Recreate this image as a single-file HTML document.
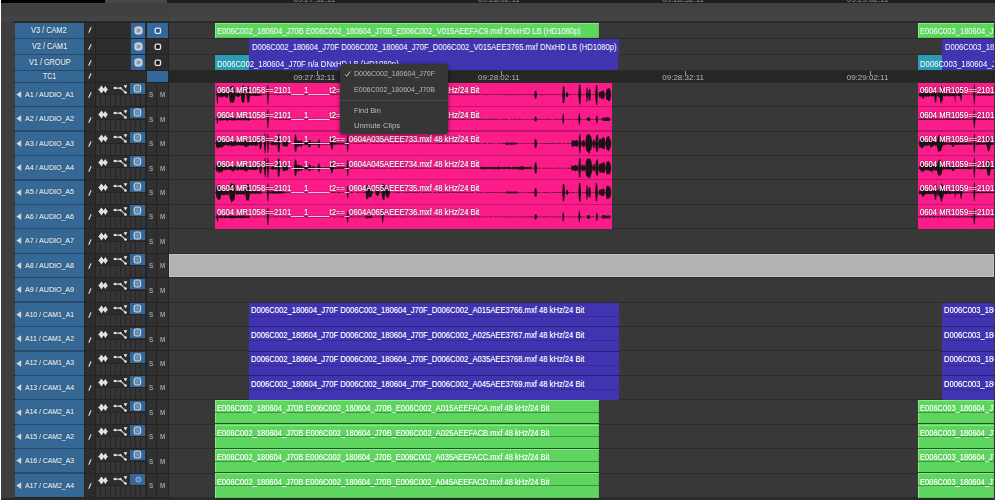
<!DOCTYPE html><html><head><meta charset="utf-8"><title>Timeline</title><style>
html,body{margin:0;padding:0;}
body{width:1000px;height:500px;overflow:hidden;background:#3e3e3e;position:relative;
 font-family:"Liberation Sans",sans-serif;color:#fff;}
.a{position:absolute;}
.blue{background:#34689a;}
.nm{position:absolute;left:14.5px;width:69.5px;background:#356894;color:#e2e8ee;font-size:8px;
 text-align:center;white-space:nowrap;overflow:hidden;text-shadow:0 0 .6px rgba(255,255,255,.5),0 0 1.5px #1b3a57;}
.nm span{position:absolute;left:0;right:0;}
.hl{position:absolute;background:#232323;}
.ctl{position:absolute;background:#2d2d2d;}
.sm{position:absolute;will-change:transform;font-size:6.3px;color:#9c9c9c;font-weight:bold;}
.clip{position:absolute;overflow:hidden;white-space:nowrap;color:#fff;box-sizing:border-box;}
.clip span{position:absolute;white-space:nowrap;line-height:10px;}
.g{background:#5dd55f;box-shadow:inset 1px 1px 0 #84f084,inset -1px -1px 0 #55c458;}
.p{background:#4034b0;}
.t{background:#2b9cb2;}
.k{background:#fb1c8a;}
.vt{font-size:8.6px;}
.at{font-size:8.2px;}
.tc{position:absolute;font-size:8px;color:#b8b8b8;white-space:nowrap;}
.menu{position:absolute;left:340px;top:64px;width:108px;height:70px;background:#363636;border-radius:3px;
 box-shadow:0 1px 4px rgba(0,0,0,.55);}
.menu div{position:absolute;left:14px;color:#bababa;white-space:nowrap;}
</style></head><body>
<div class="a" style="left:0;top:0;width:1000px;height:20.8px;background:linear-gradient(#404040 0%,#404040 60%,#454545 100%)"></div>
<div class="a" style="left:169px;top:0;width:825.5px;height:20.8px;background:linear-gradient(#414141 0%,#414141 60%,#464646 100%)"></div>
<div class="a" style="left:1px;top:0;width:104px;height:2.5px;background:#000"></div>
<div class="a" style="left:105px;top:0;width:62px;height:2.5px;background:#484848"></div>
<div class="a" style="left:167px;top:0;width:827.5px;height:2.5px;background:#1f1f1f"></div>
<div class="a" style="left:14px;top:20.8px;width:980.5px;height:1.4px;background:#2b2b2b"></div>
<div class="a" style="left:84px;top:22px;width:85px;height:476px;background:#2d2d2d"></div>
<div class="a" style="left:169px;top:22px;width:825.5px;height:478px;background:#383838"></div>
<div class="nm" style="top:22.80px;height:15.30px;line-height:16.50px"><span style="left:16.95px;right:auto;font-size:8.2px;font-weight:normal;transform-origin:0 0;transform:scaleX(0.8991)">V3 / CAM2</span></div>
<svg class="a" style="left:86px;top:26.45px" width="8" height="8" viewBox="0 0 8 8"><path d="M2.9 6.3 L4.9 1.7" stroke="#dedede" stroke-width="1.15" stroke-linecap="round" fill="none"/></svg>
<div class="a blue" style="left:130.5px;top:22.80px;width:14.5px;height:15.30px"></div>
<svg class="a" style="left:133.5px;top:26.20px" width="9" height="9" viewBox="0 0 9 9"><rect x="1" y="1" width="7" height="7" rx="1.6" fill="#b9c3cc" stroke="#dfe3e6" stroke-width="1"/><circle cx="4.5" cy="4.5" r="1.7" fill="#8d98a3" stroke="none"/></svg>
<div class="a blue" style="left:146.5px;top:22.80px;width:21.5px;height:15.30px"></div>
<svg class="a" style="left:153.6px;top:26.85px" width="8" height="8" viewBox="0 0 8 8"><rect x="1.2" y="1.1" width="5.3" height="5.2" rx="1.3" fill="#2b5a86" stroke="#e8e8e8" stroke-width="1.35"/></svg>
<div class="nm" style="top:39.10px;height:14.90px;line-height:16.10px"><span style="left:17.15px;right:auto;font-size:8.2px;font-weight:normal;transform-origin:0 0;transform:scaleX(0.8890)">V2 / CAM1</span></div>
<svg class="a" style="left:86px;top:42.55px" width="8" height="8" viewBox="0 0 8 8"><path d="M2.9 6.3 L4.9 1.7" stroke="#dedede" stroke-width="1.15" stroke-linecap="round" fill="none"/></svg>
<div class="a blue" style="left:130.5px;top:39.10px;width:14.5px;height:14.90px"></div>
<svg class="a" style="left:133.5px;top:42.30px" width="9" height="9" viewBox="0 0 9 9"><rect x="1" y="1" width="7" height="7" rx="1.6" fill="#b9c3cc" stroke="#dfe3e6" stroke-width="1"/><circle cx="4.5" cy="4.5" r="1.7" fill="#8d98a3" stroke="none"/></svg>
<svg class="a" style="left:153.6px;top:42.95px" width="8" height="8" viewBox="0 0 8 8"><rect x="1.2" y="1.1" width="5.3" height="5.2" rx="1.3" fill="#1c1c1c" stroke="#e8e8e8" stroke-width="1.35"/></svg>
<div class="nm" style="top:55.00px;height:15.10px;line-height:16.30px"><span style="left:14.00px;right:auto;font-size:8.2px;font-weight:normal;transform-origin:0 0;transform:scaleX(0.8853)">V1 / GROUP</span></div>
<svg class="a" style="left:86px;top:58.55px" width="8" height="8" viewBox="0 0 8 8"><path d="M2.9 6.3 L4.9 1.7" stroke="#dedede" stroke-width="1.15" stroke-linecap="round" fill="none"/></svg>
<div class="a blue" style="left:130.5px;top:55.00px;width:14.5px;height:15.10px"></div>
<svg class="a" style="left:133.5px;top:58.30px" width="9" height="9" viewBox="0 0 9 9"><rect x="1" y="1" width="7" height="7" rx="1.6" fill="#b9c3cc" stroke="#dfe3e6" stroke-width="1"/><circle cx="4.5" cy="4.5" r="1.7" fill="#8d98a3" stroke="none"/></svg>
<svg class="a" style="left:153.6px;top:58.95px" width="8" height="8" viewBox="0 0 8 8"><rect x="1.2" y="1.1" width="5.3" height="5.2" rx="1.3" fill="#1c1c1c" stroke="#e8e8e8" stroke-width="1.35"/></svg>
<div class="nm" style="top:71.10px;height:10.60px;line-height:11.80px"><span style="left:28.25px;right:auto;font-size:8.2px;font-weight:normal;transform-origin:0 0;transform:scaleX(0.8404)">TC1</span></div>
<svg class="a" style="left:86px;top:72.40px" width="8" height="8" viewBox="0 0 8 8"><path d="M2.9 6.3 L4.9 1.7" stroke="#dedede" stroke-width="1.15" stroke-linecap="round" fill="none"/></svg>
<div class="a blue" style="left:146.5px;top:71.10px;width:21.5px;height:10.60px"></div>
<div class="a" style="left:169px;top:70.6px;width:825.5px;height:11.2px;background:#262626"></div>
<div class="a" style="left:146px;top:82.2px;width:22.5px;height:415.4px;background:#313131"></div>
<div class="nm" style="top:82.70px;height:23.43px;line-height:23.43px;text-align:left"><span style="left:10.3px;right:auto;font-size:7.8px;font-weight:normal;transform-origin:0 0;transform:scaleX(0.9045)">A1 / AUDIO_A1</span></div>
<svg class="a" style="left:16px;top:90.92px" width="7" height="7" viewBox="0 0 7 7"><path d="M0.3 3.6 L5.2 0.3 L5.2 6.9 Z" fill="#ddd3c8"/></svg>
<svg class="a" style="left:86px;top:91.22px" width="8" height="8" viewBox="0 0 8 8"><path d="M2.9 6.3 L4.9 1.7" stroke="#dedede" stroke-width="1.15" stroke-linecap="round" fill="none"/></svg>
<svg class="a" style="left:96px;top:82.20px" width="34" height="13" viewBox="0 0 34 13"><path d="M2.6 7.5L5.4 3.4L7.6 6.6L9.4 4.1L11.6 7.5L9.4 10.9L7.6 8.4L5.4 11.6Z" fill="#e6e6e6"/><path d="M2.2 7.5H12" stroke="#d8d8d8" stroke-width="0.8"/><path d="M17.6 6.1H24.5L29.4 10.4" stroke="#d2d2d2" stroke-width="1.1" fill="none"/><circle cx="19" cy="6.1" r="1.25" fill="#e6e6e6"/><circle cx="24.5" cy="6.1" r="1.2" fill="#e0e0e0"/><circle cx="29.5" cy="10.5" r="1.3" fill="#ececec"/><path d="M27.6 3.2H31.4L29.5 6.4Z" fill="#ececec"/></svg>
<div class="a blue" style="left:130.3px;top:83.20px;width:14.7px;height:10.6px"></div>
<svg class="a" style="left:133.3px;top:84.00px" width="9" height="9" viewBox="0 0 9 9"><rect x="1.2" y="1" width="6.4" height="7" rx="1.8" fill="#5d86ad" stroke="#d2d8de" stroke-width="1.1"/><circle cx="4.5" cy="4.5" r="1.3" fill="#7f9fbd" stroke="none"/></svg>
<div class="sm" style="left:149.3px;top:91.22px">S</div>
<div class="sm" style="left:159.5px;top:91.22px">M</div>
<div class="a" style="left:96px;top:94.50px;width:49.5px;height:11.63px;background:repeating-linear-gradient(90deg,#353535 0,#353535 4px,#272727 4px,#272727 5px)"></div>
<div class="a" style="left:96px;top:94.20px;width:49.5px;height:0.7px;background:#262626"></div>
<div class="nm" style="top:107.13px;height:23.43px;line-height:23.43px;text-align:left"><span style="left:10.3px;right:auto;font-size:7.8px;font-weight:normal;transform-origin:0 0;transform:scaleX(0.9045)">A2 / AUDIO_A2</span></div>
<svg class="a" style="left:16px;top:115.34px" width="7" height="7" viewBox="0 0 7 7"><path d="M0.3 3.6 L5.2 0.3 L5.2 6.9 Z" fill="#ddd3c8"/></svg>
<svg class="a" style="left:86px;top:115.64px" width="8" height="8" viewBox="0 0 8 8"><path d="M2.9 6.3 L4.9 1.7" stroke="#dedede" stroke-width="1.15" stroke-linecap="round" fill="none"/></svg>
<svg class="a" style="left:96px;top:106.63px" width="34" height="13" viewBox="0 0 34 13"><path d="M2.6 7.5L5.4 3.4L7.6 6.6L9.4 4.1L11.6 7.5L9.4 10.9L7.6 8.4L5.4 11.6Z" fill="#e6e6e6"/><path d="M2.2 7.5H12" stroke="#d8d8d8" stroke-width="0.8"/><path d="M17.6 6.1H24.5L29.4 10.4" stroke="#d2d2d2" stroke-width="1.1" fill="none"/><circle cx="19" cy="6.1" r="1.25" fill="#e6e6e6"/><circle cx="24.5" cy="6.1" r="1.2" fill="#e0e0e0"/><circle cx="29.5" cy="10.5" r="1.3" fill="#ececec"/><path d="M27.6 3.2H31.4L29.5 6.4Z" fill="#ececec"/></svg>
<div class="a blue" style="left:130.3px;top:107.63px;width:14.7px;height:10.6px"></div>
<svg class="a" style="left:133.3px;top:108.43px" width="9" height="9" viewBox="0 0 9 9"><rect x="1.2" y="1" width="6.4" height="7" rx="1.8" fill="#5d86ad" stroke="#d2d8de" stroke-width="1.1"/><circle cx="4.5" cy="4.5" r="1.3" fill="#7f9fbd" stroke="none"/></svg>
<div class="sm" style="left:149.3px;top:115.64px">S</div>
<div class="sm" style="left:159.5px;top:115.64px">M</div>
<div class="a" style="left:96px;top:118.93px;width:49.5px;height:11.63px;background:repeating-linear-gradient(90deg,#353535 0,#353535 4px,#272727 4px,#272727 5px)"></div>
<div class="a" style="left:96px;top:118.63px;width:49.5px;height:0.7px;background:#262626"></div>
<div class="nm" style="top:131.56px;height:23.43px;line-height:23.43px;text-align:left"><span style="left:10.3px;right:auto;font-size:7.8px;font-weight:normal;transform-origin:0 0;transform:scaleX(0.9045)">A3 / AUDIO_A3</span></div>
<svg class="a" style="left:16px;top:139.78px" width="7" height="7" viewBox="0 0 7 7"><path d="M0.3 3.6 L5.2 0.3 L5.2 6.9 Z" fill="#ddd3c8"/></svg>
<svg class="a" style="left:86px;top:140.08px" width="8" height="8" viewBox="0 0 8 8"><path d="M2.9 6.3 L4.9 1.7" stroke="#dedede" stroke-width="1.15" stroke-linecap="round" fill="none"/></svg>
<svg class="a" style="left:96px;top:131.06px" width="34" height="13" viewBox="0 0 34 13"><path d="M2.6 7.5L5.4 3.4L7.6 6.6L9.4 4.1L11.6 7.5L9.4 10.9L7.6 8.4L5.4 11.6Z" fill="#e6e6e6"/><path d="M2.2 7.5H12" stroke="#d8d8d8" stroke-width="0.8"/><path d="M17.6 6.1H24.5L29.4 10.4" stroke="#d2d2d2" stroke-width="1.1" fill="none"/><circle cx="19" cy="6.1" r="1.25" fill="#e6e6e6"/><circle cx="24.5" cy="6.1" r="1.2" fill="#e0e0e0"/><circle cx="29.5" cy="10.5" r="1.3" fill="#ececec"/><path d="M27.6 3.2H31.4L29.5 6.4Z" fill="#ececec"/></svg>
<div class="a blue" style="left:130.3px;top:132.06px;width:14.7px;height:10.6px"></div>
<svg class="a" style="left:133.3px;top:132.86px" width="9" height="9" viewBox="0 0 9 9"><rect x="1.2" y="1" width="6.4" height="7" rx="1.8" fill="#5d86ad" stroke="#d2d8de" stroke-width="1.1"/><circle cx="4.5" cy="4.5" r="1.3" fill="#7f9fbd" stroke="none"/></svg>
<div class="sm" style="left:149.3px;top:140.08px">S</div>
<div class="sm" style="left:159.5px;top:140.08px">M</div>
<div class="a" style="left:96px;top:143.36px;width:49.5px;height:11.63px;background:repeating-linear-gradient(90deg,#353535 0,#353535 4px,#272727 4px,#272727 5px)"></div>
<div class="a" style="left:96px;top:143.06px;width:49.5px;height:0.7px;background:#262626"></div>
<div class="nm" style="top:155.99px;height:23.43px;line-height:23.43px;text-align:left"><span style="left:10.3px;right:auto;font-size:7.8px;font-weight:normal;transform-origin:0 0;transform:scaleX(0.9045)">A4 / AUDIO_A4</span></div>
<svg class="a" style="left:16px;top:164.21px" width="7" height="7" viewBox="0 0 7 7"><path d="M0.3 3.6 L5.2 0.3 L5.2 6.9 Z" fill="#ddd3c8"/></svg>
<svg class="a" style="left:86px;top:164.51px" width="8" height="8" viewBox="0 0 8 8"><path d="M2.9 6.3 L4.9 1.7" stroke="#dedede" stroke-width="1.15" stroke-linecap="round" fill="none"/></svg>
<svg class="a" style="left:96px;top:155.49px" width="34" height="13" viewBox="0 0 34 13"><path d="M2.6 7.5L5.4 3.4L7.6 6.6L9.4 4.1L11.6 7.5L9.4 10.9L7.6 8.4L5.4 11.6Z" fill="#e6e6e6"/><path d="M2.2 7.5H12" stroke="#d8d8d8" stroke-width="0.8"/><path d="M17.6 6.1H24.5L29.4 10.4" stroke="#d2d2d2" stroke-width="1.1" fill="none"/><circle cx="19" cy="6.1" r="1.25" fill="#e6e6e6"/><circle cx="24.5" cy="6.1" r="1.2" fill="#e0e0e0"/><circle cx="29.5" cy="10.5" r="1.3" fill="#ececec"/><path d="M27.6 3.2H31.4L29.5 6.4Z" fill="#ececec"/></svg>
<div class="a blue" style="left:130.3px;top:156.49px;width:14.7px;height:10.6px"></div>
<svg class="a" style="left:133.3px;top:157.29px" width="9" height="9" viewBox="0 0 9 9"><rect x="1.2" y="1" width="6.4" height="7" rx="1.8" fill="#5d86ad" stroke="#d2d8de" stroke-width="1.1"/><circle cx="4.5" cy="4.5" r="1.3" fill="#7f9fbd" stroke="none"/></svg>
<div class="sm" style="left:149.3px;top:164.51px">S</div>
<div class="sm" style="left:159.5px;top:164.51px">M</div>
<div class="a" style="left:96px;top:167.79px;width:49.5px;height:11.63px;background:repeating-linear-gradient(90deg,#353535 0,#353535 4px,#272727 4px,#272727 5px)"></div>
<div class="a" style="left:96px;top:167.49px;width:49.5px;height:0.7px;background:#262626"></div>
<div class="nm" style="top:180.42px;height:23.43px;line-height:23.43px;text-align:left"><span style="left:10.3px;right:auto;font-size:7.8px;font-weight:normal;transform-origin:0 0;transform:scaleX(0.9045)">A5 / AUDIO_A5</span></div>
<svg class="a" style="left:16px;top:188.64px" width="7" height="7" viewBox="0 0 7 7"><path d="M0.3 3.6 L5.2 0.3 L5.2 6.9 Z" fill="#ddd3c8"/></svg>
<svg class="a" style="left:86px;top:188.94px" width="8" height="8" viewBox="0 0 8 8"><path d="M2.9 6.3 L4.9 1.7" stroke="#dedede" stroke-width="1.15" stroke-linecap="round" fill="none"/></svg>
<svg class="a" style="left:96px;top:179.92px" width="34" height="13" viewBox="0 0 34 13"><path d="M2.6 7.5L5.4 3.4L7.6 6.6L9.4 4.1L11.6 7.5L9.4 10.9L7.6 8.4L5.4 11.6Z" fill="#e6e6e6"/><path d="M2.2 7.5H12" stroke="#d8d8d8" stroke-width="0.8"/><path d="M17.6 6.1H24.5L29.4 10.4" stroke="#d2d2d2" stroke-width="1.1" fill="none"/><circle cx="19" cy="6.1" r="1.25" fill="#e6e6e6"/><circle cx="24.5" cy="6.1" r="1.2" fill="#e0e0e0"/><circle cx="29.5" cy="10.5" r="1.3" fill="#ececec"/><path d="M27.6 3.2H31.4L29.5 6.4Z" fill="#ececec"/></svg>
<div class="a blue" style="left:130.3px;top:180.92px;width:14.7px;height:10.6px"></div>
<svg class="a" style="left:133.3px;top:181.72px" width="9" height="9" viewBox="0 0 9 9"><rect x="1.2" y="1" width="6.4" height="7" rx="1.8" fill="#5d86ad" stroke="#d2d8de" stroke-width="1.1"/><circle cx="4.5" cy="4.5" r="1.3" fill="#7f9fbd" stroke="none"/></svg>
<div class="sm" style="left:149.3px;top:188.94px">S</div>
<div class="sm" style="left:159.5px;top:188.94px">M</div>
<div class="a" style="left:96px;top:192.22px;width:49.5px;height:11.63px;background:repeating-linear-gradient(90deg,#353535 0,#353535 4px,#272727 4px,#272727 5px)"></div>
<div class="a" style="left:96px;top:191.92px;width:49.5px;height:0.7px;background:#262626"></div>
<div class="nm" style="top:204.85px;height:23.43px;line-height:23.43px;text-align:left"><span style="left:10.3px;right:auto;font-size:7.8px;font-weight:normal;transform-origin:0 0;transform:scaleX(0.9045)">A6 / AUDIO_A6</span></div>
<svg class="a" style="left:16px;top:213.07px" width="7" height="7" viewBox="0 0 7 7"><path d="M0.3 3.6 L5.2 0.3 L5.2 6.9 Z" fill="#ddd3c8"/></svg>
<svg class="a" style="left:86px;top:213.37px" width="8" height="8" viewBox="0 0 8 8"><path d="M2.9 6.3 L4.9 1.7" stroke="#dedede" stroke-width="1.15" stroke-linecap="round" fill="none"/></svg>
<svg class="a" style="left:96px;top:204.35px" width="34" height="13" viewBox="0 0 34 13"><path d="M2.6 7.5L5.4 3.4L7.6 6.6L9.4 4.1L11.6 7.5L9.4 10.9L7.6 8.4L5.4 11.6Z" fill="#e6e6e6"/><path d="M2.2 7.5H12" stroke="#d8d8d8" stroke-width="0.8"/><path d="M17.6 6.1H24.5L29.4 10.4" stroke="#d2d2d2" stroke-width="1.1" fill="none"/><circle cx="19" cy="6.1" r="1.25" fill="#e6e6e6"/><circle cx="24.5" cy="6.1" r="1.2" fill="#e0e0e0"/><circle cx="29.5" cy="10.5" r="1.3" fill="#ececec"/><path d="M27.6 3.2H31.4L29.5 6.4Z" fill="#ececec"/></svg>
<div class="a blue" style="left:130.3px;top:205.35px;width:14.7px;height:10.6px"></div>
<svg class="a" style="left:133.3px;top:206.15px" width="9" height="9" viewBox="0 0 9 9"><rect x="1.2" y="1" width="6.4" height="7" rx="1.8" fill="#5d86ad" stroke="#d2d8de" stroke-width="1.1"/><circle cx="4.5" cy="4.5" r="1.3" fill="#7f9fbd" stroke="none"/></svg>
<div class="sm" style="left:149.3px;top:213.37px">S</div>
<div class="sm" style="left:159.5px;top:213.37px">M</div>
<div class="a" style="left:96px;top:216.65px;width:49.5px;height:11.63px;background:repeating-linear-gradient(90deg,#353535 0,#353535 4px,#272727 4px,#272727 5px)"></div>
<div class="a" style="left:96px;top:216.35px;width:49.5px;height:0.7px;background:#262626"></div>
<div class="nm" style="top:229.28px;height:23.43px;line-height:23.43px;text-align:left"><span style="left:10.3px;right:auto;font-size:7.8px;font-weight:normal;transform-origin:0 0;transform:scaleX(0.9045)">A7 / AUDIO_A7</span></div>
<svg class="a" style="left:16px;top:237.49px" width="7" height="7" viewBox="0 0 7 7"><path d="M0.3 3.6 L5.2 0.3 L5.2 6.9 Z" fill="#ddd3c8"/></svg>
<svg class="a" style="left:86px;top:237.79px" width="8" height="8" viewBox="0 0 8 8"><path d="M2.9 6.3 L4.9 1.7" stroke="#dedede" stroke-width="1.15" stroke-linecap="round" fill="none"/></svg>
<svg class="a" style="left:96px;top:228.78px" width="34" height="13" viewBox="0 0 34 13"><path d="M2.6 7.5L5.4 3.4L7.6 6.6L9.4 4.1L11.6 7.5L9.4 10.9L7.6 8.4L5.4 11.6Z" fill="#e6e6e6"/><path d="M2.2 7.5H12" stroke="#d8d8d8" stroke-width="0.8"/><path d="M17.6 6.1H24.5L29.4 10.4" stroke="#d2d2d2" stroke-width="1.1" fill="none"/><circle cx="19" cy="6.1" r="1.25" fill="#e6e6e6"/><circle cx="24.5" cy="6.1" r="1.2" fill="#e0e0e0"/><circle cx="29.5" cy="10.5" r="1.3" fill="#ececec"/><path d="M27.6 3.2H31.4L29.5 6.4Z" fill="#ececec"/></svg>
<div class="a blue" style="left:130.3px;top:229.78px;width:14.7px;height:10.6px"></div>
<svg class="a" style="left:133.3px;top:230.58px" width="9" height="9" viewBox="0 0 9 9"><rect x="1.2" y="1" width="6.4" height="7" rx="1.8" fill="#5d86ad" stroke="#d2d8de" stroke-width="1.1"/><circle cx="4.5" cy="4.5" r="1.3" fill="#7f9fbd" stroke="none"/></svg>
<div class="sm" style="left:149.3px;top:237.79px">S</div>
<div class="sm" style="left:159.5px;top:237.79px">M</div>
<div class="a" style="left:96px;top:241.08px;width:49.5px;height:11.63px;background:repeating-linear-gradient(90deg,#353535 0,#353535 4px,#272727 4px,#272727 5px)"></div>
<div class="a" style="left:96px;top:240.78px;width:49.5px;height:0.7px;background:#262626"></div>
<div class="nm" style="top:253.71px;height:23.43px;line-height:23.43px;text-align:left"><span style="left:10.3px;right:auto;font-size:7.8px;font-weight:normal;transform-origin:0 0;transform:scaleX(0.9045)">A8 / AUDIO_A8</span></div>
<svg class="a" style="left:16px;top:261.92px" width="7" height="7" viewBox="0 0 7 7"><path d="M0.3 3.6 L5.2 0.3 L5.2 6.9 Z" fill="#ddd3c8"/></svg>
<svg class="a" style="left:86px;top:262.22px" width="8" height="8" viewBox="0 0 8 8"><path d="M2.9 6.3 L4.9 1.7" stroke="#dedede" stroke-width="1.15" stroke-linecap="round" fill="none"/></svg>
<svg class="a" style="left:96px;top:253.21px" width="34" height="13" viewBox="0 0 34 13"><path d="M2.6 7.5L5.4 3.4L7.6 6.6L9.4 4.1L11.6 7.5L9.4 10.9L7.6 8.4L5.4 11.6Z" fill="#e6e6e6"/><path d="M2.2 7.5H12" stroke="#d8d8d8" stroke-width="0.8"/><path d="M17.6 6.1H24.5L29.4 10.4" stroke="#d2d2d2" stroke-width="1.1" fill="none"/><circle cx="19" cy="6.1" r="1.25" fill="#e6e6e6"/><circle cx="24.5" cy="6.1" r="1.2" fill="#e0e0e0"/><circle cx="29.5" cy="10.5" r="1.3" fill="#ececec"/><path d="M27.6 3.2H31.4L29.5 6.4Z" fill="#ececec"/></svg>
<div class="a blue" style="left:130.3px;top:254.21px;width:14.7px;height:10.6px"></div>
<svg class="a" style="left:133.3px;top:255.01px" width="9" height="9" viewBox="0 0 9 9"><rect x="1.2" y="1" width="6.4" height="7" rx="1.8" fill="#5d86ad" stroke="#d2d8de" stroke-width="1.1"/><circle cx="4.5" cy="4.5" r="1.3" fill="#7f9fbd" stroke="none"/></svg>
<div class="sm" style="left:149.3px;top:262.22px">S</div>
<div class="sm" style="left:159.5px;top:262.22px">M</div>
<div class="a" style="left:96px;top:265.51px;width:49.5px;height:11.63px;background:repeating-linear-gradient(90deg,#353535 0,#353535 4px,#272727 4px,#272727 5px)"></div>
<div class="a" style="left:96px;top:265.21px;width:49.5px;height:0.7px;background:#262626"></div>
<div class="nm" style="top:278.14px;height:23.43px;line-height:23.43px;text-align:left"><span style="left:10.3px;right:auto;font-size:7.8px;font-weight:normal;transform-origin:0 0;transform:scaleX(0.9045)">A9 / AUDIO_A9</span></div>
<svg class="a" style="left:16px;top:286.35px" width="7" height="7" viewBox="0 0 7 7"><path d="M0.3 3.6 L5.2 0.3 L5.2 6.9 Z" fill="#ddd3c8"/></svg>
<svg class="a" style="left:86px;top:286.65px" width="8" height="8" viewBox="0 0 8 8"><path d="M2.9 6.3 L4.9 1.7" stroke="#dedede" stroke-width="1.15" stroke-linecap="round" fill="none"/></svg>
<svg class="a" style="left:96px;top:277.64px" width="34" height="13" viewBox="0 0 34 13"><path d="M2.6 7.5L5.4 3.4L7.6 6.6L9.4 4.1L11.6 7.5L9.4 10.9L7.6 8.4L5.4 11.6Z" fill="#e6e6e6"/><path d="M2.2 7.5H12" stroke="#d8d8d8" stroke-width="0.8"/><path d="M17.6 6.1H24.5L29.4 10.4" stroke="#d2d2d2" stroke-width="1.1" fill="none"/><circle cx="19" cy="6.1" r="1.25" fill="#e6e6e6"/><circle cx="24.5" cy="6.1" r="1.2" fill="#e0e0e0"/><circle cx="29.5" cy="10.5" r="1.3" fill="#ececec"/><path d="M27.6 3.2H31.4L29.5 6.4Z" fill="#ececec"/></svg>
<div class="a blue" style="left:130.3px;top:278.64px;width:14.7px;height:10.6px"></div>
<svg class="a" style="left:133.3px;top:279.44px" width="9" height="9" viewBox="0 0 9 9"><rect x="1.2" y="1" width="6.4" height="7" rx="1.8" fill="#5d86ad" stroke="#d2d8de" stroke-width="1.1"/><circle cx="4.5" cy="4.5" r="1.3" fill="#7f9fbd" stroke="none"/></svg>
<div class="sm" style="left:149.3px;top:286.65px">S</div>
<div class="sm" style="left:159.5px;top:286.65px">M</div>
<div class="a" style="left:96px;top:289.94px;width:49.5px;height:11.63px;background:repeating-linear-gradient(90deg,#353535 0,#353535 4px,#272727 4px,#272727 5px)"></div>
<div class="a" style="left:96px;top:289.64px;width:49.5px;height:0.7px;background:#262626"></div>
<div class="nm" style="top:302.57px;height:23.43px;line-height:23.43px;text-align:left"><span style="left:10.3px;right:auto;font-size:7.8px;font-weight:normal;transform-origin:0 0;transform:scaleX(0.8762)">A10 / CAM1_A1</span></div>
<svg class="a" style="left:16px;top:310.78px" width="7" height="7" viewBox="0 0 7 7"><path d="M0.3 3.6 L5.2 0.3 L5.2 6.9 Z" fill="#ddd3c8"/></svg>
<svg class="a" style="left:86px;top:311.08px" width="8" height="8" viewBox="0 0 8 8"><path d="M2.9 6.3 L4.9 1.7" stroke="#dedede" stroke-width="1.15" stroke-linecap="round" fill="none"/></svg>
<svg class="a" style="left:96px;top:302.07px" width="34" height="13" viewBox="0 0 34 13"><path d="M2.6 7.5L5.4 3.4L7.6 6.6L9.4 4.1L11.6 7.5L9.4 10.9L7.6 8.4L5.4 11.6Z" fill="#e6e6e6"/><path d="M2.2 7.5H12" stroke="#d8d8d8" stroke-width="0.8"/><path d="M17.6 6.1H24.5L29.4 10.4" stroke="#d2d2d2" stroke-width="1.1" fill="none"/><circle cx="19" cy="6.1" r="1.25" fill="#e6e6e6"/><circle cx="24.5" cy="6.1" r="1.2" fill="#e0e0e0"/><circle cx="29.5" cy="10.5" r="1.3" fill="#ececec"/><path d="M27.6 3.2H31.4L29.5 6.4Z" fill="#ececec"/></svg>
<div class="a blue" style="left:130.3px;top:303.07px;width:14.7px;height:10.6px"></div>
<svg class="a" style="left:133.3px;top:303.87px" width="9" height="9" viewBox="0 0 9 9"><rect x="1.2" y="1" width="6.4" height="7" rx="1.8" fill="#5d86ad" stroke="#d2d8de" stroke-width="1.1"/><circle cx="4.5" cy="4.5" r="1.3" fill="#7f9fbd" stroke="none"/></svg>
<div class="sm" style="left:149.3px;top:311.08px">S</div>
<div class="sm" style="left:159.5px;top:311.08px">M</div>
<div class="a" style="left:96px;top:314.37px;width:49.5px;height:11.63px;background:repeating-linear-gradient(90deg,#353535 0,#353535 4px,#272727 4px,#272727 5px)"></div>
<div class="a" style="left:96px;top:314.07px;width:49.5px;height:0.7px;background:#262626"></div>
<div class="nm" style="top:327.00px;height:23.43px;line-height:23.43px;text-align:left"><span style="left:10.3px;right:auto;font-size:7.8px;font-weight:normal;transform-origin:0 0;transform:scaleX(0.8856)">A11 / CAM1_A2</span></div>
<svg class="a" style="left:16px;top:335.21px" width="7" height="7" viewBox="0 0 7 7"><path d="M0.3 3.6 L5.2 0.3 L5.2 6.9 Z" fill="#ddd3c8"/></svg>
<svg class="a" style="left:86px;top:335.51px" width="8" height="8" viewBox="0 0 8 8"><path d="M2.9 6.3 L4.9 1.7" stroke="#dedede" stroke-width="1.15" stroke-linecap="round" fill="none"/></svg>
<svg class="a" style="left:96px;top:326.50px" width="34" height="13" viewBox="0 0 34 13"><path d="M2.6 7.5L5.4 3.4L7.6 6.6L9.4 4.1L11.6 7.5L9.4 10.9L7.6 8.4L5.4 11.6Z" fill="#e6e6e6"/><path d="M2.2 7.5H12" stroke="#d8d8d8" stroke-width="0.8"/><path d="M17.6 6.1H24.5L29.4 10.4" stroke="#d2d2d2" stroke-width="1.1" fill="none"/><circle cx="19" cy="6.1" r="1.25" fill="#e6e6e6"/><circle cx="24.5" cy="6.1" r="1.2" fill="#e0e0e0"/><circle cx="29.5" cy="10.5" r="1.3" fill="#ececec"/><path d="M27.6 3.2H31.4L29.5 6.4Z" fill="#ececec"/></svg>
<div class="a blue" style="left:130.3px;top:327.50px;width:14.7px;height:10.6px"></div>
<svg class="a" style="left:133.3px;top:328.30px" width="9" height="9" viewBox="0 0 9 9"><rect x="1.2" y="1" width="6.4" height="7" rx="1.8" fill="#5d86ad" stroke="#d2d8de" stroke-width="1.1"/><circle cx="4.5" cy="4.5" r="1.3" fill="#7f9fbd" stroke="none"/></svg>
<div class="sm" style="left:149.3px;top:335.51px">S</div>
<div class="sm" style="left:159.5px;top:335.51px">M</div>
<div class="a" style="left:96px;top:338.80px;width:49.5px;height:11.63px;background:repeating-linear-gradient(90deg,#353535 0,#353535 4px,#272727 4px,#272727 5px)"></div>
<div class="a" style="left:96px;top:338.50px;width:49.5px;height:0.7px;background:#262626"></div>
<div class="nm" style="top:351.43px;height:23.43px;line-height:23.43px;text-align:left"><span style="left:10.3px;right:auto;font-size:7.8px;font-weight:normal;transform-origin:0 0;transform:scaleX(0.8762)">A12 / CAM1_A3</span></div>
<svg class="a" style="left:16px;top:359.64px" width="7" height="7" viewBox="0 0 7 7"><path d="M0.3 3.6 L5.2 0.3 L5.2 6.9 Z" fill="#ddd3c8"/></svg>
<svg class="a" style="left:86px;top:359.94px" width="8" height="8" viewBox="0 0 8 8"><path d="M2.9 6.3 L4.9 1.7" stroke="#dedede" stroke-width="1.15" stroke-linecap="round" fill="none"/></svg>
<svg class="a" style="left:96px;top:350.93px" width="34" height="13" viewBox="0 0 34 13"><path d="M2.6 7.5L5.4 3.4L7.6 6.6L9.4 4.1L11.6 7.5L9.4 10.9L7.6 8.4L5.4 11.6Z" fill="#e6e6e6"/><path d="M2.2 7.5H12" stroke="#d8d8d8" stroke-width="0.8"/><path d="M17.6 6.1H24.5L29.4 10.4" stroke="#d2d2d2" stroke-width="1.1" fill="none"/><circle cx="19" cy="6.1" r="1.25" fill="#e6e6e6"/><circle cx="24.5" cy="6.1" r="1.2" fill="#e0e0e0"/><circle cx="29.5" cy="10.5" r="1.3" fill="#ececec"/><path d="M27.6 3.2H31.4L29.5 6.4Z" fill="#ececec"/></svg>
<div class="a blue" style="left:130.3px;top:351.93px;width:14.7px;height:10.6px"></div>
<svg class="a" style="left:133.3px;top:352.73px" width="9" height="9" viewBox="0 0 9 9"><rect x="1.2" y="1" width="6.4" height="7" rx="1.8" fill="#5d86ad" stroke="#d2d8de" stroke-width="1.1"/><circle cx="4.5" cy="4.5" r="1.3" fill="#7f9fbd" stroke="none"/></svg>
<div class="sm" style="left:149.3px;top:359.94px">S</div>
<div class="sm" style="left:159.5px;top:359.94px">M</div>
<div class="a" style="left:96px;top:363.23px;width:49.5px;height:11.63px;background:repeating-linear-gradient(90deg,#353535 0,#353535 4px,#272727 4px,#272727 5px)"></div>
<div class="a" style="left:96px;top:362.93px;width:49.5px;height:0.7px;background:#262626"></div>
<div class="nm" style="top:375.86px;height:23.43px;line-height:23.43px;text-align:left"><span style="left:10.3px;right:auto;font-size:7.8px;font-weight:normal;transform-origin:0 0;transform:scaleX(0.8762)">A13 / CAM1_A4</span></div>
<svg class="a" style="left:16px;top:384.07px" width="7" height="7" viewBox="0 0 7 7"><path d="M0.3 3.6 L5.2 0.3 L5.2 6.9 Z" fill="#ddd3c8"/></svg>
<svg class="a" style="left:86px;top:384.37px" width="8" height="8" viewBox="0 0 8 8"><path d="M2.9 6.3 L4.9 1.7" stroke="#dedede" stroke-width="1.15" stroke-linecap="round" fill="none"/></svg>
<svg class="a" style="left:96px;top:375.36px" width="34" height="13" viewBox="0 0 34 13"><path d="M2.6 7.5L5.4 3.4L7.6 6.6L9.4 4.1L11.6 7.5L9.4 10.9L7.6 8.4L5.4 11.6Z" fill="#e6e6e6"/><path d="M2.2 7.5H12" stroke="#d8d8d8" stroke-width="0.8"/><path d="M17.6 6.1H24.5L29.4 10.4" stroke="#d2d2d2" stroke-width="1.1" fill="none"/><circle cx="19" cy="6.1" r="1.25" fill="#e6e6e6"/><circle cx="24.5" cy="6.1" r="1.2" fill="#e0e0e0"/><circle cx="29.5" cy="10.5" r="1.3" fill="#ececec"/><path d="M27.6 3.2H31.4L29.5 6.4Z" fill="#ececec"/></svg>
<div class="a blue" style="left:130.3px;top:376.36px;width:14.7px;height:10.6px"></div>
<svg class="a" style="left:133.3px;top:377.16px" width="9" height="9" viewBox="0 0 9 9"><rect x="1.2" y="1" width="6.4" height="7" rx="1.8" fill="#5d86ad" stroke="#d2d8de" stroke-width="1.1"/><circle cx="4.5" cy="4.5" r="1.3" fill="#7f9fbd" stroke="none"/></svg>
<div class="sm" style="left:149.3px;top:384.37px">S</div>
<div class="sm" style="left:159.5px;top:384.37px">M</div>
<div class="a" style="left:96px;top:387.66px;width:49.5px;height:11.63px;background:repeating-linear-gradient(90deg,#353535 0,#353535 4px,#272727 4px,#272727 5px)"></div>
<div class="a" style="left:96px;top:387.36px;width:49.5px;height:0.7px;background:#262626"></div>
<div class="nm" style="top:400.29px;height:23.43px;line-height:23.43px;text-align:left"><span style="left:10.3px;right:auto;font-size:7.8px;font-weight:normal;transform-origin:0 0;transform:scaleX(0.8762)">A14 / CAM2_A1</span></div>
<svg class="a" style="left:16px;top:408.50px" width="7" height="7" viewBox="0 0 7 7"><path d="M0.3 3.6 L5.2 0.3 L5.2 6.9 Z" fill="#ddd3c8"/></svg>
<svg class="a" style="left:86px;top:408.80px" width="8" height="8" viewBox="0 0 8 8"><path d="M2.9 6.3 L4.9 1.7" stroke="#dedede" stroke-width="1.15" stroke-linecap="round" fill="none"/></svg>
<svg class="a" style="left:96px;top:399.79px" width="34" height="13" viewBox="0 0 34 13"><path d="M2.6 7.5L5.4 3.4L7.6 6.6L9.4 4.1L11.6 7.5L9.4 10.9L7.6 8.4L5.4 11.6Z" fill="#e6e6e6"/><path d="M2.2 7.5H12" stroke="#d8d8d8" stroke-width="0.8"/><path d="M17.6 6.1H24.5L29.4 10.4" stroke="#d2d2d2" stroke-width="1.1" fill="none"/><circle cx="19" cy="6.1" r="1.25" fill="#e6e6e6"/><circle cx="24.5" cy="6.1" r="1.2" fill="#e0e0e0"/><circle cx="29.5" cy="10.5" r="1.3" fill="#ececec"/><path d="M27.6 3.2H31.4L29.5 6.4Z" fill="#ececec"/></svg>
<div class="a blue" style="left:130.3px;top:400.79px;width:14.7px;height:10.6px"></div>
<svg class="a" style="left:133.3px;top:401.59px" width="9" height="9" viewBox="0 0 9 9"><rect x="1.2" y="1" width="6.4" height="7" rx="1.8" fill="#5d86ad" stroke="#d2d8de" stroke-width="1.1"/><circle cx="4.5" cy="4.5" r="1.3" fill="#7f9fbd" stroke="none"/></svg>
<div class="sm" style="left:149.3px;top:408.80px">S</div>
<div class="sm" style="left:159.5px;top:408.80px">M</div>
<div class="a" style="left:96px;top:412.09px;width:49.5px;height:11.63px;background:repeating-linear-gradient(90deg,#353535 0,#353535 4px,#272727 4px,#272727 5px)"></div>
<div class="a" style="left:96px;top:411.79px;width:49.5px;height:0.7px;background:#262626"></div>
<div class="nm" style="top:424.72px;height:23.43px;line-height:23.43px;text-align:left"><span style="left:10.3px;right:auto;font-size:7.8px;font-weight:normal;transform-origin:0 0;transform:scaleX(0.8762)">A15 / CAM2_A2</span></div>
<svg class="a" style="left:16px;top:432.93px" width="7" height="7" viewBox="0 0 7 7"><path d="M0.3 3.6 L5.2 0.3 L5.2 6.9 Z" fill="#ddd3c8"/></svg>
<svg class="a" style="left:86px;top:433.23px" width="8" height="8" viewBox="0 0 8 8"><path d="M2.9 6.3 L4.9 1.7" stroke="#dedede" stroke-width="1.15" stroke-linecap="round" fill="none"/></svg>
<svg class="a" style="left:96px;top:424.22px" width="34" height="13" viewBox="0 0 34 13"><path d="M2.6 7.5L5.4 3.4L7.6 6.6L9.4 4.1L11.6 7.5L9.4 10.9L7.6 8.4L5.4 11.6Z" fill="#e6e6e6"/><path d="M2.2 7.5H12" stroke="#d8d8d8" stroke-width="0.8"/><path d="M17.6 6.1H24.5L29.4 10.4" stroke="#d2d2d2" stroke-width="1.1" fill="none"/><circle cx="19" cy="6.1" r="1.25" fill="#e6e6e6"/><circle cx="24.5" cy="6.1" r="1.2" fill="#e0e0e0"/><circle cx="29.5" cy="10.5" r="1.3" fill="#ececec"/><path d="M27.6 3.2H31.4L29.5 6.4Z" fill="#ececec"/></svg>
<div class="a blue" style="left:130.3px;top:425.22px;width:14.7px;height:10.6px"></div>
<svg class="a" style="left:133.3px;top:426.02px" width="9" height="9" viewBox="0 0 9 9"><rect x="1.2" y="1" width="6.4" height="7" rx="1.8" fill="#5d86ad" stroke="#d2d8de" stroke-width="1.1"/><circle cx="4.5" cy="4.5" r="1.3" fill="#7f9fbd" stroke="none"/></svg>
<div class="sm" style="left:149.3px;top:433.23px">S</div>
<div class="sm" style="left:159.5px;top:433.23px">M</div>
<div class="a" style="left:96px;top:436.52px;width:49.5px;height:11.63px;background:repeating-linear-gradient(90deg,#353535 0,#353535 4px,#272727 4px,#272727 5px)"></div>
<div class="a" style="left:96px;top:436.22px;width:49.5px;height:0.7px;background:#262626"></div>
<div class="nm" style="top:449.15px;height:23.43px;line-height:23.43px;text-align:left"><span style="left:10.3px;right:auto;font-size:7.8px;font-weight:normal;transform-origin:0 0;transform:scaleX(0.8762)">A16 / CAM2_A3</span></div>
<svg class="a" style="left:16px;top:457.36px" width="7" height="7" viewBox="0 0 7 7"><path d="M0.3 3.6 L5.2 0.3 L5.2 6.9 Z" fill="#ddd3c8"/></svg>
<svg class="a" style="left:86px;top:457.66px" width="8" height="8" viewBox="0 0 8 8"><path d="M2.9 6.3 L4.9 1.7" stroke="#dedede" stroke-width="1.15" stroke-linecap="round" fill="none"/></svg>
<svg class="a" style="left:96px;top:448.65px" width="34" height="13" viewBox="0 0 34 13"><path d="M2.6 7.5L5.4 3.4L7.6 6.6L9.4 4.1L11.6 7.5L9.4 10.9L7.6 8.4L5.4 11.6Z" fill="#e6e6e6"/><path d="M2.2 7.5H12" stroke="#d8d8d8" stroke-width="0.8"/><path d="M17.6 6.1H24.5L29.4 10.4" stroke="#d2d2d2" stroke-width="1.1" fill="none"/><circle cx="19" cy="6.1" r="1.25" fill="#e6e6e6"/><circle cx="24.5" cy="6.1" r="1.2" fill="#e0e0e0"/><circle cx="29.5" cy="10.5" r="1.3" fill="#ececec"/><path d="M27.6 3.2H31.4L29.5 6.4Z" fill="#ececec"/></svg>
<div class="a blue" style="left:130.3px;top:449.65px;width:14.7px;height:10.6px"></div>
<svg class="a" style="left:133.3px;top:450.45px" width="9" height="9" viewBox="0 0 9 9"><rect x="1.2" y="1" width="6.4" height="7" rx="1.8" fill="#5d86ad" stroke="#d2d8de" stroke-width="1.1"/><circle cx="4.5" cy="4.5" r="1.3" fill="#7f9fbd" stroke="none"/></svg>
<div class="sm" style="left:149.3px;top:457.66px">S</div>
<div class="sm" style="left:159.5px;top:457.66px">M</div>
<div class="a" style="left:96px;top:460.95px;width:49.5px;height:11.63px;background:repeating-linear-gradient(90deg,#353535 0,#353535 4px,#272727 4px,#272727 5px)"></div>
<div class="a" style="left:96px;top:460.65px;width:49.5px;height:0.7px;background:#262626"></div>
<div class="nm" style="top:473.58px;height:23.43px;line-height:23.43px;text-align:left"><span style="left:10.3px;right:auto;font-size:7.8px;font-weight:normal;transform-origin:0 0;transform:scaleX(0.8762)">A17 / CAM2_A4</span></div>
<svg class="a" style="left:16px;top:481.79px" width="7" height="7" viewBox="0 0 7 7"><path d="M0.3 3.6 L5.2 0.3 L5.2 6.9 Z" fill="#ddd3c8"/></svg>
<svg class="a" style="left:86px;top:482.09px" width="8" height="8" viewBox="0 0 8 8"><path d="M2.9 6.3 L4.9 1.7" stroke="#dedede" stroke-width="1.15" stroke-linecap="round" fill="none"/></svg>
<svg class="a" style="left:96px;top:473.08px" width="34" height="13" viewBox="0 0 34 13"><path d="M2.6 7.5L5.4 3.4L7.6 6.6L9.4 4.1L11.6 7.5L9.4 10.9L7.6 8.4L5.4 11.6Z" fill="#e6e6e6"/><path d="M2.2 7.5H12" stroke="#d8d8d8" stroke-width="0.8"/><path d="M17.6 6.1H24.5L29.4 10.4" stroke="#d2d2d2" stroke-width="1.1" fill="none"/><circle cx="19" cy="6.1" r="1.25" fill="#e6e6e6"/><circle cx="24.5" cy="6.1" r="1.2" fill="#e0e0e0"/><circle cx="29.5" cy="10.5" r="1.3" fill="#ececec"/><path d="M27.6 3.2H31.4L29.5 6.4Z" fill="#ececec"/></svg>
<div class="a blue" style="left:130.3px;top:474.08px;width:14.7px;height:10.6px"></div>
<svg class="a" style="left:133.5px;top:475.08px" width="9" height="9" viewBox="0 0 9 9"><circle cx="4.5" cy="4.5" r="2.6" fill="#5685b3" stroke="#9db6cf" stroke-width="1"/></svg>
<div class="sm" style="left:149.3px;top:482.09px">S</div>
<div class="sm" style="left:159.5px;top:482.09px">M</div>
<div class="a" style="left:96px;top:485.38px;width:49.5px;height:11.63px;background:repeating-linear-gradient(90deg,#353535 0,#353535 4px,#272727 4px,#272727 5px)"></div>
<div class="a" style="left:96px;top:485.08px;width:49.5px;height:0.7px;background:#262626"></div>
<div class="hl" style="left:84px;top:22px;width:1px;height:476px"></div>
<div class="hl" style="left:95px;top:22px;width:1px;height:476px"></div>
<div class="hl" style="left:145.5px;top:22px;width:1px;height:476px"></div>
<div class="hl" style="left:168.3px;top:22px;width:1px;height:476px"></div>
<div class="hl" style="left:156px;top:82.2px;width:1px;height:415.8px"></div>
<div class="hl" style="left:14px;top:21.50px;width:155px;height:1px"></div>
<div class="a" style="left:169px;top:21.50px;width:825.5px;height:1px;background:#2c2c2c"></div>
<div class="hl" style="left:14px;top:38.10px;width:155px;height:1px"></div>
<div class="a" style="left:14.5px;top:38.00px;width:69.5px;height:1.2px;background:#27496a"></div>
<div class="a" style="left:169px;top:38.10px;width:825.5px;height:1px;background:#2c2c2c"></div>
<div class="hl" style="left:14px;top:54.00px;width:155px;height:1px"></div>
<div class="a" style="left:14.5px;top:53.90px;width:69.5px;height:1.2px;background:#27496a"></div>
<div class="a" style="left:169px;top:54.00px;width:825.5px;height:1px;background:#2c2c2c"></div>
<div class="hl" style="left:14px;top:70.10px;width:155px;height:1px"></div>
<div class="a" style="left:14.5px;top:70.00px;width:69.5px;height:1.2px;background:#27496a"></div>
<div class="a" style="left:169px;top:70.10px;width:825.5px;height:1px;background:#2c2c2c"></div>
<div class="hl" style="left:14px;top:81.70px;width:155px;height:1px"></div>
<div class="a" style="left:14.5px;top:81.60px;width:69.5px;height:1.2px;background:#27496a"></div>
<div class="a" style="left:169px;top:81.70px;width:825.5px;height:1px;background:#2c2c2c"></div>
<div class="hl" style="left:14px;top:106.13px;width:155px;height:1px"></div>
<div class="a" style="left:14.5px;top:106.03px;width:69.5px;height:1.2px;background:#27496a"></div>
<div class="a" style="left:169px;top:106.13px;width:825.5px;height:1px;background:#2c2c2c"></div>
<div class="hl" style="left:14px;top:130.56px;width:155px;height:1px"></div>
<div class="a" style="left:14.5px;top:130.46px;width:69.5px;height:1.2px;background:#27496a"></div>
<div class="a" style="left:169px;top:130.56px;width:825.5px;height:1px;background:#2c2c2c"></div>
<div class="hl" style="left:14px;top:154.99px;width:155px;height:1px"></div>
<div class="a" style="left:14.5px;top:154.89px;width:69.5px;height:1.2px;background:#27496a"></div>
<div class="a" style="left:169px;top:154.99px;width:825.5px;height:1px;background:#2c2c2c"></div>
<div class="hl" style="left:14px;top:179.42px;width:155px;height:1px"></div>
<div class="a" style="left:14.5px;top:179.32px;width:69.5px;height:1.2px;background:#27496a"></div>
<div class="a" style="left:169px;top:179.42px;width:825.5px;height:1px;background:#2c2c2c"></div>
<div class="hl" style="left:14px;top:203.85px;width:155px;height:1px"></div>
<div class="a" style="left:14.5px;top:203.75px;width:69.5px;height:1.2px;background:#27496a"></div>
<div class="a" style="left:169px;top:203.85px;width:825.5px;height:1px;background:#2c2c2c"></div>
<div class="hl" style="left:14px;top:228.28px;width:155px;height:1px"></div>
<div class="a" style="left:14.5px;top:228.18px;width:69.5px;height:1.2px;background:#27496a"></div>
<div class="a" style="left:169px;top:228.28px;width:825.5px;height:1px;background:#2c2c2c"></div>
<div class="hl" style="left:14px;top:252.71px;width:155px;height:1px"></div>
<div class="a" style="left:14.5px;top:252.61px;width:69.5px;height:1.2px;background:#27496a"></div>
<div class="a" style="left:169px;top:252.71px;width:825.5px;height:1px;background:#2c2c2c"></div>
<div class="hl" style="left:14px;top:277.14px;width:155px;height:1px"></div>
<div class="a" style="left:14.5px;top:277.04px;width:69.5px;height:1.2px;background:#27496a"></div>
<div class="a" style="left:169px;top:277.14px;width:825.5px;height:1px;background:#2c2c2c"></div>
<div class="hl" style="left:14px;top:301.57px;width:155px;height:1px"></div>
<div class="a" style="left:14.5px;top:301.47px;width:69.5px;height:1.2px;background:#27496a"></div>
<div class="a" style="left:169px;top:301.57px;width:825.5px;height:1px;background:#2c2c2c"></div>
<div class="hl" style="left:14px;top:326.00px;width:155px;height:1px"></div>
<div class="a" style="left:14.5px;top:325.90px;width:69.5px;height:1.2px;background:#27496a"></div>
<div class="a" style="left:169px;top:326.00px;width:825.5px;height:1px;background:#2c2c2c"></div>
<div class="hl" style="left:14px;top:350.43px;width:155px;height:1px"></div>
<div class="a" style="left:14.5px;top:350.33px;width:69.5px;height:1.2px;background:#27496a"></div>
<div class="a" style="left:169px;top:350.43px;width:825.5px;height:1px;background:#2c2c2c"></div>
<div class="hl" style="left:14px;top:374.86px;width:155px;height:1px"></div>
<div class="a" style="left:14.5px;top:374.76px;width:69.5px;height:1.2px;background:#27496a"></div>
<div class="a" style="left:169px;top:374.86px;width:825.5px;height:1px;background:#2c2c2c"></div>
<div class="hl" style="left:14px;top:399.29px;width:155px;height:1px"></div>
<div class="a" style="left:14.5px;top:399.19px;width:69.5px;height:1.2px;background:#27496a"></div>
<div class="a" style="left:169px;top:399.29px;width:825.5px;height:1px;background:#2c2c2c"></div>
<div class="hl" style="left:14px;top:423.72px;width:155px;height:1px"></div>
<div class="a" style="left:14.5px;top:423.62px;width:69.5px;height:1.2px;background:#27496a"></div>
<div class="a" style="left:169px;top:423.72px;width:825.5px;height:1px;background:#2c2c2c"></div>
<div class="hl" style="left:14px;top:448.15px;width:155px;height:1px"></div>
<div class="a" style="left:14.5px;top:448.05px;width:69.5px;height:1.2px;background:#27496a"></div>
<div class="a" style="left:169px;top:448.15px;width:825.5px;height:1px;background:#2c2c2c"></div>
<div class="hl" style="left:14px;top:472.58px;width:155px;height:1px"></div>
<div class="a" style="left:14.5px;top:472.48px;width:69.5px;height:1.2px;background:#27496a"></div>
<div class="a" style="left:169px;top:472.58px;width:825.5px;height:1px;background:#2c2c2c"></div>
<div class="hl" style="left:14px;top:497.01px;width:155px;height:1px"></div>
<div class="a" style="left:169px;top:497.01px;width:825.5px;height:1px;background:#2c2c2c"></div>
<div class="tc" style="left:293.5px;top:72.8px;line-height:9px">09:27:32:11</div>
<div class="a" style="left:316.5px;top:70.6px;width:1px;height:4px;background:#9a9a9a"></div>
<div class="tc" style="left:478.1px;top:72.8px;line-height:9px">09:28:02:11</div>
<div class="a" style="left:501.1px;top:70.6px;width:1px;height:4px;background:#9a9a9a"></div>
<div class="tc" style="left:662.3px;top:72.8px;line-height:9px">09:28:32:11</div>
<div class="a" style="left:685.3px;top:70.6px;width:1px;height:4px;background:#9a9a9a"></div>
<div class="tc" style="left:846.7px;top:72.8px;line-height:9px">09:29:02:11</div>
<div class="a" style="left:869.7px;top:70.6px;width:1px;height:4px;background:#9a9a9a"></div>
<div class="tc" style="left:293.5px;top:-5.3px;line-height:9px;color:#909090">09:27:32:11</div>
<div class="tc" style="left:478.1px;top:-5.3px;line-height:9px;color:#909090">09:28:02:11</div>
<div class="tc" style="left:662.3px;top:-5.3px;line-height:9px;color:#909090">09:28:32:11</div>
<div class="tc" style="left:846.7px;top:-5.3px;line-height:9px;color:#909090">09:29:02:11</div>
<div class="clip g" style="left:215.20px;top:22.50px;width:383.70px;height:15.90px"><span style="left:2.3px;top:3.35px;font-size:9.2px;font-weight:normal;transform-origin:0 0;transform:scaleX(0.8230)">E006C002_180604_J70B E006C002_180604_J70B_E006C002_V015AEEFAC9.mxf DNxHD LB (HD1080p)</span></div>
<div class="clip p" style="left:249.00px;top:38.90px;width:369.50px;height:15.65px"><span style="left:2.6px;top:3.45px;font-size:9.2px;font-weight:normal;transform-origin:0 0;transform:scaleX(0.8289)">D006C002_180604_J70F D006C002_180604_J70F_D006C002_V015AEE3765.mxf DNxHD LB (HD1080p)</span></div>
<div class="clip p" style="left:215.20px;top:54.90px;width:403.30px;height:15.60px"><div class="a t" style="left:0;top:0;width:33.80px;height:100%"></div><span style="left:2.0px;top:3.9px;font-size:9.2px;font-weight:normal;transform-origin:0 0;transform:scaleX(0.8433)">D006C002_180604_J70F n/a DNxHD LB (HD1080p)</span></div>
<div class="clip g" style="left:917.80px;top:22.50px;width:76.70px;height:15.90px"><span style="left:2.3px;top:3.35px;font-size:9.2px;font-weight:normal;transform-origin:0 0;transform:scaleX(0.8230)">E006C003_180604_J70B E006C003_180604_J70B_E006C003_V015AEEFAD1.mxf DNxHD LB (HD1080p)</span></div>
<div class="clip p" style="left:942.30px;top:38.90px;width:52.20px;height:15.65px"><span style="left:2.6px;top:3.45px;font-size:9.2px;font-weight:normal;transform-origin:0 0;transform:scaleX(0.8289)">D006C003_180604_J70F D006C003_180604_J70F_D006C003_V015AEE3771.mxf DNxHD LB (HD1080p)</span></div>
<div class="clip p" style="left:917.80px;top:54.90px;width:76.70px;height:15.60px"><div class="a t" style="left:0;top:0;width:24.50px;height:100%"></div><span style="left:2.0px;top:3.9px;font-size:9.2px;font-weight:normal;transform-origin:0 0;transform:scaleX(0.8433)">D006C003_180604_J70F n/a DNxHD LB (HD1080p)</span></div>
<div class="clip k" style="left:215.20px;top:82.70px;width:396.80px;height:146.08px"><svg class="a" style="left:0;top:0" width="396.8" height="146.08" viewBox="0 0 396.8 146.08"><path transform="translate(0 11.80)" d="M0 0L0.0 -0.3L0.7 -0.3L1.4 -0.4L2.1 -9.3L2.8 -8.8L3.5 -0.3L4.2 -3.1L4.9 -2.2L5.6 -3.1L6.3 -1.7L7.0 -3.4L7.7 -2.8L8.4 -1.6L9.1 -1.7L9.8 -2.0L10.5 -2.5L11.2 -3.2L11.9 -2.8L12.6 -2.9L13.3 -0.3L14.0 -0.2L14.7 -6.8L15.4 -8.0L16.1 -8.3L16.8 -8.5L17.5 -9.1L18.2 -8.4L18.9 -8.0L19.6 -5.5L20.3 -0.4L21.0 -3.0L21.7 -1.5L22.4 -2.6L23.1 -1.5L23.8 -2.9L24.5 -1.5L25.2 -1.5L25.9 -0.1L26.6 -6.6L27.3 -8.7L28.0 -9.9L28.7 -9.2L29.4 -7.2L30.1 -0.2L30.8 -0.2L31.5 -0.4L32.2 -6.4L32.9 -8.2L33.6 -9.4L34.3 -6.1L35.0 -0.9L35.7 -1.4L36.4 -1.0L37.1 -0.8L37.8 -0.9L38.5 -1.0L39.2 -1.6L39.9 -1.2L40.6 -0.9L41.3 -1.5L42.0 -0.9L42.7 -1.4L43.4 -0.9L44.1 -1.5L44.8 -1.1L45.5 -0.8L46.2 -0.9L46.9 -0.3L47.6 -0.2L48.3 -0.4L49.0 -0.3L49.7 -0.2L50.4 -0.2L51.1 -0.3L51.8 -0.1L52.5 -9.8L53.2 -9.9L53.9 -0.2L54.6 -0.4L55.3 -0.2L56.0 -0.1L56.7 -0.2L57.4 -0.3L58.1 -0.1L58.8 -0.2L59.5 -0.2L60.2 -0.3L60.9 -0.2L61.6 -0.2L62.3 -0.4L63.0 -0.4L63.7 -0.3L64.4 -0.3L65.1 -0.3L65.8 -0.2L66.5 -0.1L67.2 -0.1L67.9 -0.4L68.6 -0.3L69.3 -0.4L70.0 -0.1L70.7 -0.3L71.4 -0.3L72.1 -0.3L72.8 -0.2L73.5 -0.4L74.2 -0.1L74.9 -0.3L75.6 -0.3L76.3 -0.4L77.0 -0.3L77.7 -0.3L78.4 -0.4L79.1 -0.4L79.8 -0.2L80.5 -0.3L81.2 -0.4L81.9 -0.4L82.6 -0.2L83.3 -0.4L84.0 -0.4L84.7 -0.3L85.4 -0.3L86.1 -0.2L86.8 -0.3L87.5 -0.3L88.2 -0.1L88.9 -0.3L89.6 -0.4L90.3 -0.4L91.0 -0.3L91.7 -0.2L92.4 -0.3L93.1 -0.3L93.8 -0.3L94.5 -0.4L95.2 -0.1L95.9 -0.3L96.6 -0.1L97.3 -0.3L98.0 -0.3L98.7 -0.2L99.4 -0.3L100.1 -0.3L100.8 -0.3L101.5 -0.4L102.2 -0.2L102.9 -0.1L103.6 -0.2L104.3 -0.3L105.0 -0.2L105.7 -0.2L106.4 -0.4L107.1 -0.3L107.8 -0.3L108.5 -0.4L109.2 -0.2L109.9 -0.3L110.6 -0.2L111.3 -0.2L112.0 -0.4L112.7 -0.4L113.4 -0.4L114.1 -0.2L114.8 -0.3L115.5 -0.2L116.2 -0.2L116.9 -0.3L117.6 -0.4L118.3 -0.4L119.0 -0.3L119.7 -0.4L120.4 -0.2L121.1 -0.2L121.8 -0.3L122.5 -0.2L123.2 -0.2L123.9 -0.2L124.6 -0.3L125.3 -0.3L126.0 -0.2L126.7 -0.4L127.4 -0.4L128.1 -0.3L128.8 -0.1L129.5 -0.1L130.2 -0.4L130.9 -0.1L131.6 -0.3L132.3 -0.3L133.0 -0.2L133.7 -0.4L134.4 -0.1L135.1 -0.2L135.8 -0.3L136.5 -0.1L137.2 -0.4L137.9 -0.2L138.6 -0.2L139.3 -0.1L140.0 -0.3L140.7 -0.3L141.4 -0.3L142.1 -0.3L142.8 -0.4L143.5 -0.4L144.2 -0.3L144.9 -0.2L145.6 -0.3L146.3 -0.2L147.0 -0.1L147.7 -0.3L148.4 -0.3L149.1 -0.2L149.8 -0.2L150.5 -0.2L151.2 -0.3L151.9 -0.3L152.6 -0.3L153.3 -0.3L154.0 -0.2L154.7 -0.4L155.4 -0.4L156.1 -0.1L156.8 -0.4L157.5 -0.3L158.2 -0.2L158.9 -0.3L159.6 -0.3L160.3 -0.4L161.0 -0.2L161.7 -0.3L162.4 -0.4L163.1 -0.4L163.8 -0.4L164.5 -0.3L165.2 -0.3L165.9 -0.2L166.6 -0.3L167.3 -0.4L168.0 -0.3L168.7 -0.3L169.4 -0.2L170.1 -0.4L170.8 -0.4L171.5 -0.4L172.2 -0.3L172.9 -0.4L173.6 -0.2L174.3 -0.4L175.0 -0.4L175.7 -0.2L176.4 -0.1L177.1 -0.3L177.8 -0.3L178.5 -0.4L179.2 -0.3L179.9 -0.1L180.6 -0.4L181.3 -0.1L182.0 -0.4L182.7 -0.2L183.4 -0.2L184.1 -0.4L184.8 -0.2L185.5 -0.2L186.2 -0.3L186.9 -0.3L187.6 -0.4L188.3 -0.3L189.0 -0.4L189.7 -0.3L190.4 -0.4L191.1 -0.1L191.8 -0.2L192.5 -0.3L193.2 -0.2L193.9 -0.3L194.6 -0.3L195.3 -0.3L196.0 -0.4L196.7 -0.3L197.4 -0.2L198.1 -0.2L198.8 -0.4L199.5 -0.4L200.2 -0.2L200.9 -0.4L201.6 -0.4L202.3 -0.3L203.0 -0.3L203.7 -0.2L204.4 -0.3L205.1 -0.3L205.8 -0.3L206.5 -0.1L207.2 -0.4L207.9 -0.3L208.6 -0.2L209.3 -0.4L210.0 -0.3L210.7 -0.3L211.4 -0.3L212.1 -0.1L212.8 -0.3L213.5 -0.2L214.2 -0.4L214.9 -0.4L215.6 -0.2L216.3 -0.3L217.0 -0.2L217.7 -0.3L218.4 -0.4L219.1 -0.4L219.8 -0.3L220.5 -0.2L221.2 -0.2L221.9 -0.3L222.6 -0.4L223.3 -0.2L224.0 -0.4L224.7 -0.1L225.4 -0.2L226.1 -0.2L226.8 -0.3L227.5 -0.2L228.2 -0.2L228.9 -0.3L229.6 -0.2L230.3 -0.3L231.0 -0.2L231.7 -0.3L232.4 -0.2L233.1 -0.2L233.8 -0.3L234.5 -0.3L235.2 -0.2L235.9 -0.2L236.6 -0.3L237.3 -0.2L238.0 -0.2L238.7 -0.3L239.4 -0.3L240.1 -0.3L240.8 -0.4L241.5 -0.3L242.2 -0.4L242.9 -0.2L243.6 -0.3L244.3 -0.4L245.0 -0.4L245.7 -0.2L246.4 -0.2L247.1 -0.4L247.8 -0.2L248.5 -0.4L249.2 -0.4L249.9 -0.2L250.6 -0.2L251.3 -0.3L252.0 -0.2L252.7 -0.1L253.4 -0.4L254.1 -0.2L254.8 -0.4L255.5 -0.2L256.2 -0.2L256.9 -0.3L257.6 -0.1L258.3 -0.2L259.0 -0.3L259.7 -0.4L260.4 -0.4L261.1 -0.2L261.8 -0.3L262.5 -0.3L263.2 -0.3L263.9 -0.3L264.6 -0.2L265.3 -0.1L266.0 -0.2L266.7 -0.1L267.4 -0.3L268.1 -0.3L268.8 -0.3L269.5 -0.2L270.2 -0.2L270.9 -0.2L271.6 -0.4L272.3 -0.4L273.0 -0.4L273.7 -0.1L274.4 -0.1L275.1 -0.4L275.8 -0.3L276.5 -0.3L277.2 -0.2L277.9 -0.3L278.6 -0.3L279.3 -0.2L280.0 -0.3L280.7 -0.1L281.4 -0.3L282.1 -0.4L282.8 -0.2L283.5 -0.3L284.2 -0.3L284.9 -0.2L285.6 -0.2L286.3 -0.2L287.0 -0.3L287.7 -0.1L288.4 -0.4L289.1 -0.4L289.8 -0.3L290.5 -0.4L291.2 -0.3L291.9 -0.2L292.6 -0.3L293.3 -0.3L294.0 -0.4L294.7 -0.4L295.4 -0.2L296.1 -0.4L296.8 -0.3L297.5 -0.4L298.2 -0.4L298.9 -0.2L299.6 -0.4L300.3 -0.4L301.0 -0.3L301.7 -0.4L302.4 -0.3L303.1 -0.2L303.8 -0.3L304.5 -0.1L305.2 -0.2L305.9 -0.3L306.6 -0.1L307.3 -0.2L308.0 -0.3L308.7 -0.3L309.4 -0.2L310.1 -0.4L310.8 -0.3L311.5 -0.2L312.2 -0.3L312.9 -0.3L313.6 -0.3L314.3 -0.2L315.0 -0.4L315.7 -0.3L316.4 -0.3L317.1 -0.3L317.8 -0.4L318.5 -0.1L319.2 -0.3L319.9 -4.0L320.6 -3.9L321.3 -4.1L322.0 -0.1L322.7 -0.2L323.4 -0.4L324.1 -0.3L324.8 -0.3L325.5 -0.4L326.2 -0.3L326.9 -0.4L327.6 -0.3L328.3 -0.4L329.0 -0.1L329.7 -0.3L330.4 -0.3L331.1 -0.1L331.8 -0.4L332.5 -0.2L333.2 -0.3L333.9 -0.2L334.6 -0.3L335.3 -0.3L336.0 -0.1L336.7 -0.4L337.4 -0.2L338.1 -0.3L338.8 -0.3L339.5 -0.2L340.2 -0.2L340.9 -0.3L341.6 -0.3L342.3 -0.2L343.0 -0.3L343.7 -0.2L344.4 -0.1L345.1 -0.2L345.8 -0.1L346.5 -0.2L347.2 -0.3L347.9 -8.9L348.6 -7.7L349.3 -8.9L350.0 -0.1L350.7 -0.4L351.4 -2.3L352.1 -2.2L352.8 -2.5L353.5 -0.3L354.2 -0.3L354.9 -0.4L355.6 -0.4L356.3 -0.3L357.0 -0.2L357.7 -0.3L358.4 -0.3L359.1 -0.2L359.8 -0.1L360.5 -0.3L361.2 -0.2L361.9 -0.3L362.6 -0.3L363.3 -0.3L364.0 -9.8L364.7 -10.2L365.4 -10.5L366.1 -0.4L366.8 -0.3L367.5 -0.2L368.2 -0.2L368.9 -0.4L369.6 -0.4L370.3 -0.3L371.0 -0.2L371.7 -7.6L372.4 -7.5L373.1 -0.3L373.8 -5.3L374.5 -6.0L375.2 -5.9L375.9 -0.1L376.6 -0.1L377.3 -0.2L378.0 -0.2L378.7 -0.3L379.4 -0.2L380.1 -0.3L380.8 -9.1L381.5 -9.8L382.2 -9.5L382.9 -0.3L383.6 -0.2L384.3 -2.9L385.0 -2.6L385.7 -2.9L386.4 -4.4L387.1 -3.4L387.8 -4.5L388.5 -4.0L389.2 -3.1L389.9 -0.3L390.6 -0.3L391.3 -5.0L392.0 -5.5L392.7 -6.0L393.4 -6.8L394.1 -6.6L394.8 -5.9L395.5 -4.1L396.2 -0.3L396.2 0.3L395.5 3.7L394.8 6.0L394.1 6.7L393.4 6.0L392.7 5.1L392.0 5.0L391.3 5.1L390.6 0.3L389.9 0.2L389.2 3.2L388.5 3.9L387.8 4.8L387.1 3.7L386.4 4.7L385.7 2.7L385.0 2.7L384.3 2.6L383.6 0.2L382.9 0.2L382.2 10.3L381.5 10.5L380.8 7.9L380.1 0.3L379.4 0.1L378.7 0.3L378.0 0.2L377.3 0.2L376.6 0.1L375.9 0.1L375.2 6.1L374.5 5.8L373.8 5.5L373.1 0.3L372.4 6.4L371.7 7.8L371.0 0.2L370.3 0.3L369.6 0.3L368.9 0.4L368.2 0.1L367.5 0.2L366.8 0.4L366.1 0.4L365.4 10.9L364.7 8.3L364.0 9.5L363.3 0.3L362.6 0.3L361.9 0.2L361.2 0.2L360.5 0.3L359.8 0.1L359.1 0.2L358.4 0.2L357.7 0.3L357.0 0.2L356.3 0.3L355.6 0.3L354.9 0.4L354.2 0.2L353.5 0.3L352.8 2.3L352.1 2.0L351.4 2.5L350.7 0.4L350.0 0.1L349.3 8.6L348.6 7.8L347.9 9.0L347.2 0.4L346.5 0.2L345.8 0.1L345.1 0.2L344.4 0.1L343.7 0.2L343.0 0.4L342.3 0.2L341.6 0.3L340.9 0.3L340.2 0.2L339.5 0.2L338.8 0.3L338.1 0.3L337.4 0.2L336.7 0.3L336.0 0.1L335.3 0.3L334.6 0.2L333.9 0.1L333.2 0.2L332.5 0.2L331.8 0.4L331.1 0.1L330.4 0.3L329.7 0.3L329.0 0.1L328.3 0.4L327.6 0.3L326.9 0.4L326.2 0.2L325.5 0.4L324.8 0.3L324.1 0.3L323.4 0.3L322.7 0.2L322.0 0.1L321.3 3.5L320.6 3.4L319.9 4.1L319.2 0.3L318.5 0.1L317.8 0.4L317.1 0.3L316.4 0.3L315.7 0.3L315.0 0.4L314.3 0.2L313.6 0.3L312.9 0.3L312.2 0.3L311.5 0.2L310.8 0.3L310.1 0.4L309.4 0.2L308.7 0.3L308.0 0.3L307.3 0.2L306.6 0.1L305.9 0.3L305.2 0.2L304.5 0.1L303.8 0.3L303.1 0.2L302.4 0.3L301.7 0.4L301.0 0.3L300.3 0.3L299.6 0.3L298.9 0.2L298.2 0.3L297.5 0.4L296.8 0.3L296.1 0.4L295.4 0.2L294.7 0.3L294.0 0.4L293.3 0.2L292.6 0.3L291.9 0.2L291.2 0.3L290.5 0.4L289.8 0.3L289.1 0.3L288.4 0.3L287.7 0.1L287.0 0.2L286.3 0.2L285.6 0.2L284.9 0.3L284.2 0.3L283.5 0.2L282.8 0.2L282.1 0.3L281.4 0.3L280.7 0.1L280.0 0.3L279.3 0.2L278.6 0.3L277.9 0.2L277.2 0.2L276.5 0.3L275.8 0.3L275.1 0.3L274.4 0.1L273.7 0.1L273.0 0.4L272.3 0.4L271.6 0.3L270.9 0.2L270.2 0.2L269.5 0.1L268.8 0.2L268.1 0.2L267.4 0.3L266.7 0.1L266.0 0.1L265.3 0.1L264.6 0.1L263.9 0.3L263.2 0.3L262.5 0.4L261.8 0.3L261.1 0.2L260.4 0.3L259.7 0.4L259.0 0.3L258.3 0.2L257.6 0.1L256.9 0.3L256.2 0.2L255.5 0.2L254.8 0.4L254.1 0.2L253.4 0.4L252.7 0.1L252.0 0.2L251.3 0.3L250.6 0.2L249.9 0.1L249.2 0.4L248.5 0.4L247.8 0.2L247.1 0.3L246.4 0.2L245.7 0.2L245.0 0.4L244.3 0.4L243.6 0.3L242.9 0.2L242.2 0.4L241.5 0.3L240.8 0.3L240.1 0.2L239.4 0.3L238.7 0.3L238.0 0.2L237.3 0.2L236.6 0.3L235.9 0.2L235.2 0.2L234.5 0.2L233.8 0.2L233.1 0.2L232.4 0.2L231.7 0.2L231.0 0.2L230.3 0.3L229.6 0.1L228.9 0.3L228.2 0.2L227.5 0.2L226.8 0.3L226.1 0.2L225.4 0.2L224.7 0.1L224.0 0.3L223.3 0.2L222.6 0.4L221.9 0.3L221.2 0.2L220.5 0.2L219.8 0.2L219.1 0.4L218.4 0.3L217.7 0.2L217.0 0.1L216.3 0.2L215.6 0.2L214.9 0.4L214.2 0.4L213.5 0.2L212.8 0.2L212.1 0.1L211.4 0.4L210.7 0.3L210.0 0.3L209.3 0.3L208.6 0.2L207.9 0.3L207.2 0.5L206.5 0.1L205.8 0.3L205.1 0.3L204.4 0.2L203.7 0.2L203.0 0.3L202.3 0.2L201.6 0.3L200.9 0.3L200.2 0.2L199.5 0.4L198.8 0.3L198.1 0.3L197.4 0.2L196.7 0.3L196.0 0.3L195.3 0.3L194.6 0.3L193.9 0.4L193.2 0.2L192.5 0.3L191.8 0.2L191.1 0.1L190.4 0.4L189.7 0.3L189.0 0.4L188.3 0.3L187.6 0.3L186.9 0.4L186.2 0.2L185.5 0.2L184.8 0.1L184.1 0.3L183.4 0.2L182.7 0.1L182.0 0.3L181.3 0.1L180.6 0.3L179.9 0.1L179.2 0.3L178.5 0.4L177.8 0.3L177.1 0.2L176.4 0.1L175.7 0.2L175.0 0.3L174.3 0.4L173.6 0.2L172.9 0.3L172.2 0.2L171.5 0.4L170.8 0.3L170.1 0.4L169.4 0.2L168.7 0.3L168.0 0.3L167.3 0.3L166.6 0.3L165.9 0.2L165.2 0.3L164.5 0.2L163.8 0.4L163.1 0.3L162.4 0.4L161.7 0.3L161.0 0.2L160.3 0.4L159.6 0.3L158.9 0.3L158.2 0.2L157.5 0.3L156.8 0.4L156.1 0.2L155.4 0.4L154.7 0.4L154.0 0.2L153.3 0.3L152.6 0.3L151.9 0.3L151.2 0.3L150.5 0.2L149.8 0.2L149.1 0.2L148.4 0.3L147.7 0.2L147.0 0.1L146.3 0.2L145.6 0.3L144.9 0.2L144.2 0.3L143.5 0.4L142.8 0.4L142.1 0.3L141.4 0.3L140.7 0.2L140.0 0.3L139.3 0.1L138.6 0.1L137.9 0.2L137.2 0.4L136.5 0.1L135.8 0.2L135.1 0.1L134.4 0.1L133.7 0.3L133.0 0.2L132.3 0.3L131.6 0.3L130.9 0.1L130.2 0.4L129.5 0.1L128.8 0.1L128.1 0.3L127.4 0.4L126.7 0.4L126.0 0.2L125.3 0.3L124.6 0.3L123.9 0.2L123.2 0.2L122.5 0.2L121.8 0.2L121.1 0.2L120.4 0.2L119.7 0.3L119.0 0.4L118.3 0.4L117.6 0.3L116.9 0.2L116.2 0.2L115.5 0.2L114.8 0.2L114.1 0.3L113.4 0.3L112.7 0.4L112.0 0.4L111.3 0.3L110.6 0.2L109.9 0.3L109.2 0.2L108.5 0.4L107.8 0.3L107.1 0.3L106.4 0.4L105.7 0.2L105.0 0.2L104.3 0.3L103.6 0.2L102.9 0.1L102.2 0.2L101.5 0.4L100.8 0.3L100.1 0.3L99.4 0.3L98.7 0.2L98.0 0.3L97.3 0.3L96.6 0.1L95.9 0.4L95.2 0.1L94.5 0.3L93.8 0.3L93.1 0.3L92.4 0.3L91.7 0.2L91.0 0.3L90.3 0.3L89.6 0.4L88.9 0.3L88.2 0.1L87.5 0.3L86.8 0.3L86.1 0.2L85.4 0.3L84.7 0.3L84.0 0.4L83.3 0.3L82.6 0.2L81.9 0.3L81.2 0.4L80.5 0.3L79.8 0.2L79.1 0.4L78.4 0.3L77.7 0.4L77.0 0.3L76.3 0.4L75.6 0.3L74.9 0.2L74.2 0.1L73.5 0.4L72.8 0.2L72.1 0.4L71.4 0.2L70.7 0.3L70.0 0.1L69.3 0.4L68.6 0.3L67.9 0.4L67.2 0.1L66.5 0.1L65.8 0.2L65.1 0.2L64.4 0.3L63.7 0.3L63.0 0.4L62.3 0.4L61.6 0.2L60.9 0.1L60.2 0.3L59.5 0.2L58.8 0.2L58.1 0.1L57.4 0.3L56.7 0.2L56.0 0.1L55.3 0.2L54.6 0.4L53.9 0.2L53.2 10.7L52.5 8.4L51.8 0.1L51.1 0.3L50.4 0.2L49.7 0.2L49.0 0.3L48.3 0.4L47.6 0.2L46.9 0.3L46.2 0.8L45.5 0.7L44.8 0.9L44.1 1.5L43.4 0.8L42.7 1.1L42.0 0.9L41.3 1.5L40.6 0.9L39.9 1.3L39.2 1.3L38.5 0.9L37.8 0.8L37.1 0.8L36.4 0.9L35.7 1.3L35.0 0.8L34.3 6.3L33.6 7.7L32.9 8.7L32.2 6.2L31.5 0.4L30.8 0.2L30.1 0.2L29.4 6.1L28.7 8.2L28.0 8.1L27.3 7.7L26.6 6.5L25.9 0.1L25.2 1.3L24.5 1.5L23.8 2.4L23.1 1.6L22.4 2.2L21.7 1.3L21.0 2.5L20.3 0.4L19.6 5.8L18.9 8.3L18.2 6.9L17.5 8.4L16.8 7.7L16.1 7.2L15.4 8.7L14.7 5.5L14.0 0.2L13.3 0.3L12.6 3.1L11.9 2.4L11.2 3.0L10.5 2.5L9.8 1.7L9.1 1.5L8.4 1.7L7.7 2.3L7.0 3.2L6.3 1.5L5.6 2.9L4.9 1.8L4.2 2.5L3.5 0.3L2.8 9.0L2.1 9.4L1.4 0.3L0.7 0.3L0.0 0.2Z" fill="#1c1216"/><path transform="translate(0 36.23)" d="M0 0L0.0 -0.2L0.7 -0.3L1.4 -0.4L2.1 -5.4L2.8 -5.6L3.5 -0.1L4.2 -1.2L4.9 -1.0L5.6 -1.4L6.3 -1.4L7.0 -1.0L7.7 -1.0L8.4 -0.9L9.1 -0.8L9.8 -0.8L10.5 -0.9L11.2 -0.9L11.9 -1.5L12.6 -1.4L13.3 -1.0L14.0 -1.2L14.7 -0.9L15.4 -0.8L16.1 -1.0L16.8 -1.3L17.5 -1.0L18.2 -1.4L18.9 -1.3L19.6 -1.4L20.3 -0.9L21.0 -0.7L21.7 -0.9L22.4 -1.1L23.1 -1.0L23.8 -0.7L24.5 -1.2L25.2 -0.9L25.9 -1.1L26.6 -1.3L27.3 -1.3L28.0 -0.8L28.7 -0.9L29.4 -1.0L30.1 -1.4L30.8 -0.9L31.5 -0.9L32.2 -0.7L32.9 -1.1L33.6 -1.5L34.3 -1.2L35.0 -0.4L35.7 -0.2L36.4 -0.3L37.1 -0.3L37.8 -0.4L38.5 -0.4L39.2 -0.2L39.9 -0.3L40.6 -0.1L41.3 -0.2L42.0 -0.2L42.7 -0.1L43.4 -0.2L44.1 -0.2L44.8 -0.3L45.5 -0.2L46.2 -0.2L46.9 -0.2L47.6 -0.3L48.3 -0.2L49.0 -0.3L49.7 -0.2L50.4 -0.1L51.1 -0.2L51.8 -0.2L52.5 -10.3L53.2 -10.3L53.9 -0.3L54.6 -0.1L55.3 -0.2L56.0 -0.2L56.7 -0.1L57.4 -0.2L58.1 -0.1L58.8 -0.3L59.5 -0.3L60.2 -0.3L60.9 -0.2L61.6 -0.2L62.3 -0.1L63.0 -0.2L63.7 -0.4L64.4 -0.3L65.1 -0.2L65.8 -0.3L66.5 -0.2L67.2 -0.3L67.9 -0.3L68.6 -0.4L69.3 -0.2L70.0 -0.3L70.7 -0.4L71.4 -0.4L72.1 -0.3L72.8 -0.3L73.5 -0.2L74.2 -0.2L74.9 -0.2L75.6 -0.4L76.3 -0.4L77.0 -0.2L77.7 -0.4L78.4 -0.1L79.1 -0.2L79.8 -0.3L80.5 -0.2L81.2 -0.2L81.9 -0.4L82.6 -0.2L83.3 -0.2L84.0 -0.2L84.7 -0.3L85.4 -0.2L86.1 -0.1L86.8 -0.3L87.5 -0.2L88.2 -0.2L88.9 -0.3L89.6 -0.3L90.3 -0.3L91.0 -0.3L91.7 -0.3L92.4 -0.4L93.1 -0.4L93.8 -0.2L94.5 -0.2L95.2 -0.4L95.9 -0.2L96.6 -0.3L97.3 -0.3L98.0 -0.3L98.7 -0.4L99.4 -0.4L100.1 -0.2L100.8 -0.3L101.5 -0.3L102.2 -0.3L102.9 -0.2L103.6 -0.2L104.3 -0.3L105.0 -0.3L105.7 -0.2L106.4 -0.2L107.1 -0.2L107.8 -0.2L108.5 -0.3L109.2 -0.2L109.9 -0.1L110.6 -0.1L111.3 -0.2L112.0 -0.3L112.7 -0.2L113.4 -0.3L114.1 -0.4L114.8 -0.3L115.5 -0.2L116.2 -0.4L116.9 -0.4L117.6 -0.1L118.3 -0.2L119.0 -0.3L119.7 -0.4L120.4 -0.2L121.1 -0.3L121.8 -0.2L122.5 -0.3L123.2 -0.2L123.9 -0.2L124.6 -0.3L125.3 -0.4L126.0 -0.4L126.7 -0.3L127.4 -0.2L128.1 -0.3L128.8 -0.3L129.5 -0.4L130.2 -0.4L130.9 -0.2L131.6 -0.2L132.3 -0.3L133.0 -0.2L133.7 -0.2L134.4 -0.1L135.1 -0.3L135.8 -0.4L136.5 -0.4L137.2 -0.2L137.9 -0.3L138.6 -0.2L139.3 -0.3L140.0 -0.2L140.7 -0.4L141.4 -0.4L142.1 -0.1L142.8 -0.3L143.5 -0.2L144.2 -0.1L144.9 -0.2L145.6 -0.3L146.3 -0.4L147.0 -0.2L147.7 -0.2L148.4 -0.1L149.1 -0.3L149.8 -0.3L150.5 -0.2L151.2 -0.2L151.9 -0.4L152.6 -0.4L153.3 -0.2L154.0 -0.2L154.7 -0.3L155.4 -0.3L156.1 -0.4L156.8 -0.2L157.5 -0.3L158.2 -0.3L158.9 -0.4L159.6 -0.2L160.3 -0.2L161.0 -0.2L161.7 -0.4L162.4 -0.2L163.1 -0.3L163.8 -0.2L164.5 -0.2L165.2 -0.1L165.9 -0.3L166.6 -0.2L167.3 -0.3L168.0 -0.2L168.7 -0.2L169.4 -0.3L170.1 -0.2L170.8 -0.2L171.5 -0.1L172.2 -0.1L172.9 -0.4L173.6 -0.2L174.3 -0.1L175.0 -0.2L175.7 -0.3L176.4 -0.4L177.1 -0.2L177.8 -0.4L178.5 -0.3L179.2 -0.2L179.9 -0.4L180.6 -0.2L181.3 -0.1L182.0 -0.3L182.7 -0.3L183.4 -0.3L184.1 -0.2L184.8 -0.4L185.5 -0.4L186.2 -0.4L186.9 -0.3L187.6 -0.4L188.3 -0.3L189.0 -0.2L189.7 -0.1L190.4 -0.2L191.1 -0.2L191.8 -0.1L192.5 -0.2L193.2 -0.3L193.9 -0.2L194.6 -0.3L195.3 -0.1L196.0 -0.2L196.7 -0.4L197.4 -0.1L198.1 -0.3L198.8 -0.4L199.5 -0.4L200.2 -0.3L200.9 -0.2L201.6 -0.4L202.3 -0.4L203.0 -0.4L203.7 -0.4L204.4 -0.2L205.1 -0.4L205.8 -0.2L206.5 -0.3L207.2 -0.2L207.9 -0.4L208.6 -0.1L209.3 -0.3L210.0 -0.2L210.7 -0.2L211.4 -0.2L212.1 -0.3L212.8 -0.4L213.5 -0.2L214.2 -0.3L214.9 -0.2L215.6 -0.2L216.3 -0.4L217.0 -0.2L217.7 -0.1L218.4 -0.2L219.1 -0.3L219.8 -0.2L220.5 -0.3L221.2 -0.3L221.9 -0.3L222.6 -0.2L223.3 -0.2L224.0 -0.2L224.7 -0.2L225.4 -0.2L226.1 -0.1L226.8 -0.3L227.5 -0.2L228.2 -0.2L228.9 -0.3L229.6 -0.4L230.3 -0.2L231.0 -0.4L231.7 -0.2L232.4 -0.3L233.1 -0.2L233.8 -0.4L234.5 -0.2L235.2 -0.4L235.9 -0.2L236.6 -0.2L237.3 -0.3L238.0 -0.2L238.7 -0.2L239.4 -0.3L240.1 -0.4L240.8 -0.2L241.5 -0.2L242.2 -0.2L242.9 -0.4L243.6 -0.2L244.3 -0.3L245.0 -0.2L245.7 -0.3L246.4 -0.2L247.1 -0.3L247.8 -0.4L248.5 -0.4L249.2 -0.3L249.9 -0.3L250.6 -0.3L251.3 -0.2L252.0 -0.4L252.7 -0.3L253.4 -0.3L254.1 -0.3L254.8 -0.2L255.5 -0.2L256.2 -0.2L256.9 -0.3L257.6 -0.3L258.3 -0.3L259.0 -0.1L259.7 -0.3L260.4 -0.3L261.1 -0.3L261.8 -0.3L262.5 -0.4L263.2 -0.2L263.9 -0.3L264.6 -0.4L265.3 -0.3L266.0 -0.2L266.7 -0.3L267.4 -0.4L268.1 -0.2L268.8 -0.4L269.5 -0.2L270.2 -0.4L270.9 -0.3L271.6 -0.2L272.3 -0.4L273.0 -0.3L273.7 -0.4L274.4 -0.4L275.1 -0.4L275.8 -0.3L276.5 -0.4L277.2 -0.1L277.9 -0.4L278.6 -0.3L279.3 -0.2L280.0 -0.4L280.7 -0.3L281.4 -0.3L282.1 -0.4L282.8 -0.2L283.5 -0.2L284.2 -0.3L284.9 -0.1L285.6 -0.3L286.3 -0.4L287.0 -0.3L287.7 -0.2L288.4 -0.4L289.1 -0.4L289.8 -0.4L290.5 -0.3L291.2 -0.4L291.9 -0.4L292.6 -0.2L293.3 -0.2L294.0 -0.2L294.7 -0.1L295.4 -0.2L296.1 -0.4L296.8 -0.4L297.5 -0.2L298.2 -0.2L298.9 -0.2L299.6 -0.4L300.3 -0.3L301.0 -0.4L301.7 -0.1L302.4 -0.4L303.1 -0.2L303.8 -0.3L304.5 -0.4L305.2 -0.3L305.9 -0.2L306.6 -0.3L307.3 -0.2L308.0 -0.1L308.7 -0.2L309.4 -0.2L310.1 -0.3L310.8 -0.2L311.5 -0.3L312.2 -0.3L312.9 -0.2L313.6 -0.2L314.3 -0.3L315.0 -0.3L315.7 -0.2L316.4 -0.2L317.1 -0.4L317.8 -0.3L318.5 -0.2L319.2 -0.2L319.9 -2.5L320.6 -2.4L321.3 -2.4L322.0 -0.2L322.7 -0.3L323.4 -0.2L324.1 -0.4L324.8 -0.2L325.5 -0.3L326.2 -0.3L326.9 -0.4L327.6 -0.2L328.3 -0.3L329.0 -0.2L329.7 -0.3L330.4 -0.2L331.1 -0.4L331.8 -0.2L332.5 -0.4L333.2 -0.3L333.9 -0.3L334.6 -0.4L335.3 -0.2L336.0 -0.3L336.7 -0.3L337.4 -0.3L338.1 -0.1L338.8 -0.2L339.5 -0.2L340.2 -0.3L340.9 -0.4L341.6 -0.2L342.3 -0.3L343.0 -0.3L343.7 -0.2L344.4 -0.2L345.1 -0.2L345.8 -0.4L346.5 -0.2L347.2 -0.2L347.9 -5.4L348.6 -5.2L349.3 -0.3L350.0 -0.1L350.7 -0.4L351.4 -0.1L352.1 -0.2L352.8 -0.2L353.5 -0.3L354.2 -0.3L354.9 -0.2L355.6 -0.4L356.3 -0.4L357.0 -0.1L357.7 -0.3L358.4 -0.3L359.1 -0.2L359.8 -0.3L360.5 -0.2L361.2 -0.3L361.9 -0.3L362.6 -0.4L363.3 -0.4L364.0 -5.9L364.7 -6.2L365.4 -0.3L366.1 -0.4L366.8 -0.1L367.5 -0.3L368.2 -0.2L368.9 -0.3L369.6 -0.2L370.3 -0.4L371.0 -0.2L371.7 -0.2L372.4 -1.7L373.1 -1.3L373.8 -2.1L374.5 -2.2L375.2 -0.2L375.9 -0.4L376.6 -0.3L377.3 -0.4L378.0 -0.2L378.7 -0.3L379.4 -0.1L380.1 -0.4L380.8 -0.4L381.5 -3.8L382.2 -4.2L382.9 -0.3L383.6 -0.2L384.3 -0.4L385.0 -0.2L385.7 -0.3L386.4 -0.2L387.1 -1.1L387.8 -1.6L388.5 -1.9L389.2 -1.5L389.9 -1.3L390.6 -1.7L391.3 -2.0L392.0 -2.0L392.7 -2.2L393.4 -1.5L394.1 -2.0L394.8 -1.5L395.5 -0.1L396.2 -0.2L396.2 0.2L395.5 0.1L394.8 1.5L394.1 1.7L393.4 1.4L392.7 1.7L392.0 1.7L391.3 1.8L390.6 1.8L389.9 1.2L389.2 1.6L388.5 1.6L387.8 1.5L387.1 0.9L386.4 0.1L385.7 0.2L385.0 0.2L384.3 0.3L383.6 0.1L382.9 0.3L382.2 4.5L381.5 4.2L380.8 0.4L380.1 0.4L379.4 0.1L378.7 0.2L378.0 0.1L377.3 0.4L376.6 0.3L375.9 0.3L375.2 0.2L374.5 2.1L373.8 1.9L373.1 1.2L372.4 1.6L371.7 0.2L371.0 0.2L370.3 0.3L369.6 0.2L368.9 0.3L368.2 0.2L367.5 0.2L366.8 0.1L366.1 0.4L365.4 0.3L364.7 5.8L364.0 5.1L363.3 0.4L362.6 0.4L361.9 0.2L361.2 0.3L360.5 0.2L359.8 0.2L359.1 0.2L358.4 0.3L357.7 0.3L357.0 0.1L356.3 0.4L355.6 0.3L354.9 0.2L354.2 0.3L353.5 0.3L352.8 0.2L352.1 0.2L351.4 0.2L350.7 0.3L350.0 0.1L349.3 0.2L348.6 4.5L347.9 5.6L347.2 0.2L346.5 0.2L345.8 0.4L345.1 0.1L344.4 0.2L343.7 0.2L343.0 0.4L342.3 0.3L341.6 0.2L340.9 0.4L340.2 0.3L339.5 0.2L338.8 0.2L338.1 0.1L337.4 0.3L336.7 0.2L336.0 0.3L335.3 0.2L334.6 0.4L333.9 0.3L333.2 0.3L332.5 0.4L331.8 0.2L331.1 0.4L330.4 0.2L329.7 0.3L329.0 0.2L328.3 0.3L327.6 0.2L326.9 0.4L326.2 0.2L325.5 0.3L324.8 0.2L324.1 0.4L323.4 0.2L322.7 0.3L322.0 0.2L321.3 2.0L320.6 2.1L319.9 2.5L319.2 0.1L318.5 0.2L317.8 0.3L317.1 0.4L316.4 0.1L315.7 0.1L315.0 0.2L314.3 0.3L313.6 0.2L312.9 0.2L312.2 0.4L311.5 0.3L310.8 0.2L310.1 0.3L309.4 0.2L308.7 0.2L308.0 0.1L307.3 0.2L306.6 0.3L305.9 0.2L305.2 0.3L304.5 0.4L303.8 0.3L303.1 0.2L302.4 0.4L301.7 0.1L301.0 0.4L300.3 0.3L299.6 0.4L298.9 0.2L298.2 0.2L297.5 0.1L296.8 0.3L296.1 0.3L295.4 0.2L294.7 0.1L294.0 0.1L293.3 0.2L292.6 0.2L291.9 0.4L291.2 0.4L290.5 0.3L289.8 0.3L289.1 0.4L288.4 0.3L287.7 0.2L287.0 0.2L286.3 0.3L285.6 0.3L284.9 0.1L284.2 0.3L283.5 0.2L282.8 0.2L282.1 0.3L281.4 0.3L280.7 0.2L280.0 0.4L279.3 0.2L278.6 0.4L277.9 0.4L277.2 0.1L276.5 0.4L275.8 0.2L275.1 0.4L274.4 0.3L273.7 0.4L273.0 0.3L272.3 0.3L271.6 0.2L270.9 0.3L270.2 0.4L269.5 0.1L268.8 0.3L268.1 0.3L267.4 0.4L266.7 0.4L266.0 0.2L265.3 0.4L264.6 0.4L263.9 0.2L263.2 0.2L262.5 0.4L261.8 0.2L261.1 0.3L260.4 0.2L259.7 0.3L259.0 0.1L258.3 0.3L257.6 0.3L256.9 0.3L256.2 0.2L255.5 0.2L254.8 0.3L254.1 0.3L253.4 0.2L252.7 0.3L252.0 0.3L251.3 0.1L250.6 0.3L249.9 0.2L249.2 0.3L248.5 0.3L247.8 0.4L247.1 0.3L246.4 0.2L245.7 0.3L245.0 0.2L244.3 0.3L243.6 0.1L242.9 0.4L242.2 0.2L241.5 0.2L240.8 0.2L240.1 0.4L239.4 0.3L238.7 0.2L238.0 0.2L237.3 0.3L236.6 0.2L235.9 0.2L235.2 0.4L234.5 0.2L233.8 0.4L233.1 0.1L232.4 0.3L231.7 0.2L231.0 0.4L230.3 0.2L229.6 0.4L228.9 0.3L228.2 0.2L227.5 0.2L226.8 0.3L226.1 0.1L225.4 0.3L224.7 0.2L224.0 0.1L223.3 0.2L222.6 0.1L221.9 0.3L221.2 0.2L220.5 0.4L219.8 0.2L219.1 0.4L218.4 0.2L217.7 0.1L217.0 0.2L216.3 0.3L215.6 0.2L214.9 0.2L214.2 0.3L213.5 0.2L212.8 0.4L212.1 0.3L211.4 0.2L210.7 0.2L210.0 0.2L209.3 0.3L208.6 0.1L207.9 0.4L207.2 0.2L206.5 0.3L205.8 0.2L205.1 0.4L204.4 0.1L203.7 0.4L203.0 0.3L202.3 0.4L201.6 0.3L200.9 0.2L200.2 0.3L199.5 0.3L198.8 0.4L198.1 0.3L197.4 0.1L196.7 0.4L196.0 0.2L195.3 0.1L194.6 0.3L193.9 0.2L193.2 0.3L192.5 0.2L191.8 0.1L191.1 0.2L190.4 0.2L189.7 0.1L189.0 0.1L188.3 0.3L187.6 0.4L186.9 0.2L186.2 0.3L185.5 0.4L184.8 0.4L184.1 0.2L183.4 0.2L182.7 0.3L182.0 0.3L181.3 0.1L180.6 0.2L179.9 0.4L179.2 0.3L178.5 0.2L177.8 0.3L177.1 0.2L176.4 0.5L175.7 0.3L175.0 0.2L174.3 0.1L173.6 0.2L172.9 0.3L172.2 0.1L171.5 0.1L170.8 0.2L170.1 0.2L169.4 0.2L168.7 0.2L168.0 0.2L167.3 0.3L166.6 0.2L165.9 0.2L165.2 0.1L164.5 0.2L163.8 0.1L163.1 0.3L162.4 0.2L161.7 0.3L161.0 0.2L160.3 0.2L159.6 0.2L158.9 0.3L158.2 0.3L157.5 0.3L156.8 0.2L156.1 0.4L155.4 0.3L154.7 0.3L154.0 0.2L153.3 0.2L152.6 0.4L151.9 0.3L151.2 0.2L150.5 0.2L149.8 0.2L149.1 0.3L148.4 0.1L147.7 0.2L147.0 0.1L146.3 0.4L145.6 0.4L144.9 0.2L144.2 0.1L143.5 0.2L142.8 0.3L142.1 0.1L141.4 0.4L140.7 0.4L140.0 0.2L139.3 0.3L138.6 0.3L137.9 0.3L137.2 0.2L136.5 0.3L135.8 0.4L135.1 0.3L134.4 0.1L133.7 0.2L133.0 0.2L132.3 0.3L131.6 0.2L130.9 0.2L130.2 0.4L129.5 0.3L128.8 0.3L128.1 0.3L127.4 0.2L126.7 0.3L126.0 0.3L125.3 0.3L124.6 0.3L123.9 0.2L123.2 0.2L122.5 0.4L121.8 0.2L121.1 0.3L120.4 0.2L119.7 0.3L119.0 0.3L118.3 0.2L117.6 0.1L116.9 0.3L116.2 0.3L115.5 0.2L114.8 0.2L114.1 0.3L113.4 0.2L112.7 0.1L112.0 0.3L111.3 0.2L110.6 0.1L109.9 0.2L109.2 0.1L108.5 0.2L107.8 0.1L107.1 0.2L106.4 0.2L105.7 0.2L105.0 0.3L104.3 0.3L103.6 0.2L102.9 0.2L102.2 0.3L101.5 0.3L100.8 0.3L100.1 0.2L99.4 0.4L98.7 0.4L98.0 0.3L97.3 0.3L96.6 0.4L95.9 0.2L95.2 0.3L94.5 0.2L93.8 0.2L93.1 0.3L92.4 0.3L91.7 0.2L91.0 0.3L90.3 0.2L89.6 0.3L88.9 0.2L88.2 0.2L87.5 0.2L86.8 0.3L86.1 0.1L85.4 0.2L84.7 0.3L84.0 0.2L83.3 0.1L82.6 0.1L81.9 0.4L81.2 0.2L80.5 0.2L79.8 0.3L79.1 0.1L78.4 0.1L77.7 0.4L77.0 0.2L76.3 0.4L75.6 0.4L74.9 0.2L74.2 0.2L73.5 0.3L72.8 0.3L72.1 0.3L71.4 0.4L70.7 0.4L70.0 0.2L69.3 0.2L68.6 0.4L67.9 0.3L67.2 0.2L66.5 0.2L65.8 0.3L65.1 0.2L64.4 0.2L63.7 0.4L63.0 0.2L62.3 0.1L61.6 0.2L60.9 0.2L60.2 0.3L59.5 0.3L58.8 0.3L58.1 0.1L57.4 0.2L56.7 0.1L56.0 0.2L55.3 0.2L54.6 0.1L53.9 0.3L53.2 9.6L52.5 8.5L51.8 0.2L51.1 0.2L50.4 0.1L49.7 0.2L49.0 0.3L48.3 0.2L47.6 0.2L46.9 0.3L46.2 0.1L45.5 0.2L44.8 0.3L44.1 0.2L43.4 0.3L42.7 0.1L42.0 0.2L41.3 0.2L40.6 0.2L39.9 0.3L39.2 0.2L38.5 0.3L37.8 0.4L37.1 0.3L36.4 0.3L35.7 0.2L35.0 0.3L34.3 1.3L33.6 1.5L32.9 1.2L32.2 0.7L31.5 0.9L30.8 1.0L30.1 1.4L29.4 1.1L28.7 0.9L28.0 0.7L27.3 1.3L26.6 1.1L25.9 1.0L25.2 1.0L24.5 0.9L23.8 0.7L23.1 0.9L22.4 1.1L21.7 0.9L21.0 0.8L20.3 1.0L19.6 1.4L18.9 1.1L18.2 1.4L17.5 0.8L16.8 1.4L16.1 1.1L15.4 0.7L14.7 0.8L14.0 1.3L13.3 1.0L12.6 1.5L11.9 1.5L11.2 0.8L10.5 0.9L9.8 0.7L9.1 0.9L8.4 0.9L7.7 1.0L7.0 1.1L6.3 1.4L5.6 1.5L4.9 1.0L4.2 1.1L3.5 0.1L2.8 5.1L2.1 4.4L1.4 0.3L0.7 0.3L0.0 0.2Z" fill="#1c1216"/><path transform="translate(0 60.66)" d="M0 0L0.0 -0.3L0.7 -0.4L1.4 -4.0L2.1 -3.3L2.8 -4.4L3.5 -5.3L4.2 -5.3L4.9 -3.4L5.6 -4.3L6.3 -4.8L7.0 -3.3L7.7 -4.0L8.4 -2.4L9.1 -1.8L9.8 -1.5L10.5 -2.0L11.2 -1.6L11.9 -1.2L12.6 -1.9L13.3 -2.1L14.0 -1.8L14.7 -1.8L15.4 -1.3L16.1 -2.2L16.8 -3.2L17.5 -2.5L18.2 -3.0L18.9 -2.3L19.6 -2.4L20.3 -2.5L21.0 -2.1L21.7 -1.8L22.4 -1.3L23.1 -2.5L23.8 -1.3L24.5 -1.6L25.2 -1.8L25.9 -1.8L26.6 -2.2L27.3 -2.1L28.0 -2.1L28.7 -2.2L29.4 -2.8L30.1 -2.7L30.8 -3.9L31.5 -3.1L32.2 -2.6L32.9 -3.7L33.6 -2.7L34.3 -1.5L35.0 -2.2L35.7 -1.7L36.4 -1.8L37.1 -2.1L37.8 -1.6L38.5 -1.8L39.2 -2.4L39.9 -1.7L40.6 -2.6L41.3 -1.7L42.0 -2.2L42.7 -2.2L43.4 -0.4L44.1 -0.3L44.8 -5.5L45.5 -5.3L46.2 -5.6L46.9 -0.4L47.6 -0.2L48.3 -0.3L49.0 -0.1L49.7 -10.6L50.4 -10.4L51.1 -0.2L51.8 -0.2L52.5 -9.7L53.2 -9.4L53.9 -0.3L54.6 -0.4L55.3 -0.4L56.0 -1.5L56.7 -1.7L57.4 -1.5L58.1 -1.7L58.8 -1.5L59.5 -1.1L60.2 -1.3L60.9 -1.9L61.6 -1.5L62.3 -0.3L63.0 -8.8L63.7 -9.8L64.4 -8.9L65.1 -0.4L65.8 -0.2L66.5 -0.2L67.2 -0.3L67.9 -3.1L68.6 -3.2L69.3 -2.7L70.0 -2.1L70.7 -3.5L71.4 -3.8L72.1 -2.5L72.8 -3.1L73.5 -0.1L74.2 -0.2L74.9 -0.3L75.6 -0.2L76.3 -0.2L77.0 -0.4L77.7 -0.4L78.4 -0.2L79.1 -0.2L79.8 -8.2L80.5 -9.1L81.2 -8.8L81.9 -1.9L82.6 -3.7L83.3 -3.3L84.0 -2.5L84.7 -2.3L85.4 -2.5L86.1 -3.6L86.8 -3.1L87.5 -1.0L88.2 -1.0L88.9 -1.1L89.6 -1.2L90.3 -1.7L91.0 -1.0L91.7 -1.5L92.4 -1.7L93.1 -1.0L93.8 -3.8L94.5 -3.4L95.2 -3.7L95.9 -0.9L96.6 -1.8L97.3 -1.7L98.0 -0.9L98.7 -1.5L99.4 -1.1L100.1 -1.5L100.8 -1.3L101.5 -1.4L102.2 -1.2L102.9 -1.1L103.6 -4.5L104.3 -4.3L105.0 -0.8L105.7 -0.7L106.4 -1.0L107.1 -1.0L107.8 -0.9L108.5 -0.8L109.2 -0.8L109.9 -0.9L110.6 -1.1L111.3 -0.6L112.0 -0.6L112.7 -0.9L113.4 -0.7L114.1 -1.1L114.8 -1.0L115.5 -0.8L116.2 -5.9L116.9 -5.9L117.6 -6.0L118.3 -0.9L119.0 -1.1L119.7 -1.2L120.4 -1.2L121.1 -0.6L121.8 -1.0L122.5 -0.9L123.2 -0.8L123.9 -0.9L124.6 -0.7L125.3 -1.1L126.0 -0.7L126.7 -0.9L127.4 -0.9L128.1 -0.6L128.8 -1.0L129.5 -0.6L130.2 -0.8L130.9 -0.9L131.6 -1.0L132.3 -8.7L133.0 -8.7L133.7 -0.1L134.4 -0.1L135.1 -0.4L135.8 -0.2L136.5 -0.2L137.2 -0.1L137.9 -0.2L138.6 -0.3L139.3 -0.4L140.0 -0.2L140.7 -0.2L141.4 -0.4L142.1 -0.2L142.8 -0.3L143.5 -0.3L144.2 -0.4L144.9 -0.1L145.6 -0.3L146.3 -0.2L147.0 -0.4L147.7 -0.2L148.4 -0.3L149.1 -0.2L149.8 -0.3L150.5 -0.4L151.2 -0.2L151.9 -0.2L152.6 -0.4L153.3 -0.3L154.0 -0.1L154.7 -0.2L155.4 -0.2L156.1 -0.2L156.8 -0.4L157.5 -0.3L158.2 -0.4L158.9 -0.3L159.6 -0.3L160.3 -0.2L161.0 -0.3L161.7 -0.3L162.4 -0.1L163.1 -0.3L163.8 -0.2L164.5 -0.3L165.2 -0.1L165.9 -0.1L166.6 -0.4L167.3 -0.2L168.0 -0.2L168.7 -0.2L169.4 -0.3L170.1 -0.4L170.8 -0.2L171.5 -0.3L172.2 -0.3L172.9 -0.3L173.6 -0.3L174.3 -0.2L175.0 -0.2L175.7 -0.3L176.4 -0.1L177.1 -0.4L177.8 -0.1L178.5 -0.2L179.2 -0.3L179.9 -0.4L180.6 -0.3L181.3 -0.3L182.0 -0.3L182.7 -0.3L183.4 -0.1L184.1 -0.4L184.8 -0.2L185.5 -0.2L186.2 -0.1L186.9 -0.1L187.6 -0.4L188.3 -0.2L189.0 -0.1L189.7 -0.1L190.4 -0.4L191.1 -0.3L191.8 -0.4L192.5 -0.1L193.2 -0.2L193.9 -0.2L194.6 -0.2L195.3 -0.2L196.0 -0.2L196.7 -0.3L197.4 -0.2L198.1 -0.2L198.8 -0.3L199.5 -0.2L200.2 -0.2L200.9 -0.3L201.6 -0.3L202.3 -0.2L203.0 -0.3L203.7 -0.1L204.4 -0.3L205.1 -0.2L205.8 -0.2L206.5 -0.1L207.2 -0.4L207.9 -0.3L208.6 -0.2L209.3 -0.3L210.0 -0.4L210.7 -0.2L211.4 -0.2L212.1 -0.3L212.8 -0.2L213.5 -0.3L214.2 -0.4L214.9 -0.1L215.6 -0.2L216.3 -0.2L217.0 -0.3L217.7 -0.4L218.4 -0.3L219.1 -0.4L219.8 -0.2L220.5 -0.2L221.2 -0.4L221.9 -0.3L222.6 -0.2L223.3 -0.4L224.0 -0.3L224.7 -0.4L225.4 -0.2L226.1 -0.3L226.8 -0.4L227.5 -0.4L228.2 -0.3L228.9 -0.4L229.6 -0.4L230.3 -0.4L231.0 -0.3L231.7 -0.4L232.4 -0.2L233.1 -0.2L233.8 -0.3L234.5 -0.2L235.2 -0.4L235.9 -0.1L236.6 -0.3L237.3 -0.2L238.0 -0.2L238.7 -0.3L239.4 -0.2L240.1 -0.3L240.8 -0.4L241.5 -0.4L242.2 -0.2L242.9 -0.2L243.6 -0.3L244.3 -0.2L245.0 -0.4L245.7 -0.2L246.4 -0.3L247.1 -0.2L247.8 -0.1L248.5 -0.1L249.2 -0.1L249.9 -0.2L250.6 -0.2L251.3 -0.4L252.0 -0.3L252.7 -0.1L253.4 -0.3L254.1 -0.2L254.8 -0.3L255.5 -0.3L256.2 -0.4L256.9 -0.4L257.6 -0.2L258.3 -0.2L259.0 -0.2L259.7 -0.2L260.4 -0.3L261.1 -0.3L261.8 -0.3L262.5 -0.2L263.2 -0.4L263.9 -0.4L264.6 -0.2L265.3 -0.3L266.0 -0.2L266.7 -0.1L267.4 -0.2L268.1 -0.2L268.8 -0.3L269.5 -0.3L270.2 -0.3L270.9 -0.4L271.6 -0.1L272.3 -0.1L273.0 -0.1L273.7 -0.3L274.4 -0.4L275.1 -0.3L275.8 -0.3L276.5 -0.4L277.2 -0.2L277.9 -0.2L278.6 -0.3L279.3 -0.1L280.0 -0.2L280.7 -0.1L281.4 -0.2L282.1 -0.1L282.8 -0.3L283.5 -0.2L284.2 -0.3L284.9 -0.4L285.6 -0.2L286.3 -0.2L287.0 -0.3L287.7 -0.3L288.4 -0.4L289.1 -0.3L289.8 -0.3L290.5 -0.4L291.2 -1.3L291.9 -1.1L292.6 -0.9L293.3 -0.9L294.0 -1.0L294.7 -0.9L295.4 -0.7L296.1 -1.1L296.8 -1.2L297.5 -0.9L298.2 -1.2L298.9 -1.2L299.6 -0.9L300.3 -0.8L301.0 -0.6L301.7 -0.6L302.4 -0.7L303.1 -0.2L303.8 -0.2L304.5 -0.3L305.2 -0.3L305.9 -0.3L306.6 -0.2L307.3 -0.2L308.0 -0.4L308.7 -0.2L309.4 -0.1L310.1 -0.4L310.8 -0.3L311.5 -0.2L312.2 -0.2L312.9 -0.4L313.6 -0.3L314.3 -0.1L315.0 -0.3L315.7 -0.2L316.4 -0.3L317.1 -0.3L317.8 -0.1L318.5 -0.4L319.2 -0.2L319.9 -4.8L320.6 -4.3L321.3 -4.6L322.0 -0.4L322.7 -0.4L323.4 -0.2L324.1 -0.1L324.8 -0.3L325.5 -0.3L326.2 -0.2L326.9 -0.4L327.6 -0.2L328.3 -0.3L329.0 -0.1L329.7 -0.4L330.4 -0.4L331.1 -0.3L331.8 -0.2L332.5 -0.3L333.2 -0.4L333.9 -0.4L334.6 -0.1L335.3 -0.3L336.0 -0.2L336.7 -0.3L337.4 -0.4L338.1 -0.4L338.8 -0.2L339.5 -0.3L340.2 -0.2L340.9 -0.2L341.6 -0.3L342.3 -0.3L343.0 -0.2L343.7 -0.2L344.4 -0.3L345.1 -0.3L345.8 -0.3L346.5 -0.2L347.2 -0.1L347.9 -0.2L348.6 -0.4L349.3 -0.3L350.0 -0.3L350.7 -0.2L351.4 -0.2L352.1 -0.2L352.8 -0.4L353.5 -0.3L354.2 -0.2L354.9 -0.3L355.6 -0.3L356.3 -0.3L357.0 -3.1L357.7 -3.9L358.4 -3.2L359.1 -2.7L359.8 -3.2L360.5 -2.6L361.2 -3.6L361.9 -3.7L362.6 -3.2L363.3 -0.2L364.0 -7.1L364.7 -10.7L365.4 -9.0L366.1 -0.2L366.8 -3.2L367.5 -2.0L368.2 -3.5L368.9 -3.7L369.6 -2.8L370.3 -0.2L371.0 -6.4L371.7 -8.3L372.4 -9.3L373.1 -9.3L373.8 -9.1L374.5 -10.2L375.2 -7.8L375.9 -7.7L376.6 -5.5L377.3 -0.2L378.0 -4.0L378.7 -4.0L379.4 -3.7L380.1 -0.2L380.8 -5.8L381.5 -8.0L382.2 -9.2L382.9 -9.1L383.6 -0.3L384.3 -5.0L385.0 -4.7L385.7 -4.8L386.4 -3.9L387.1 -5.3L387.8 -6.4L388.5 -6.4L389.2 -6.2L389.9 -4.4L390.6 -0.1L391.3 -6.0L392.0 -6.4L392.7 -7.2L393.4 -7.6L394.1 -7.3L394.8 -5.2L395.5 -4.3L396.2 -0.4L396.2 0.3L395.5 3.8L394.8 5.4L394.1 7.1L393.4 7.6L392.7 6.6L392.0 6.1L391.3 5.1L390.6 0.1L389.9 3.9L389.2 6.2L388.5 5.3L387.8 5.4L387.1 4.6L386.4 3.8L385.7 4.7L385.0 3.8L384.3 5.4L383.6 0.3L382.9 8.3L382.2 7.8L381.5 8.3L380.8 6.4L380.1 0.1L379.4 3.8L378.7 4.1L378.0 4.3L377.3 0.2L376.6 4.6L375.9 6.5L375.2 6.8L374.5 10.9L373.8 9.7L373.1 8.8L372.4 7.8L371.7 7.5L371.0 5.6L370.3 0.2L369.6 2.9L368.9 3.9L368.2 3.2L367.5 1.9L366.8 3.0L366.1 0.1L365.4 8.4L364.7 10.8L364.0 7.2L363.3 0.2L362.6 3.1L361.9 3.1L361.2 2.9L360.5 2.4L359.8 2.9L359.1 2.2L358.4 2.7L357.7 3.6L357.0 3.4L356.3 0.3L355.6 0.2L354.9 0.3L354.2 0.1L353.5 0.3L352.8 0.3L352.1 0.2L351.4 0.2L350.7 0.2L350.0 0.3L349.3 0.2L348.6 0.3L347.9 0.2L347.2 0.1L346.5 0.2L345.8 0.3L345.1 0.3L344.4 0.3L343.7 0.2L343.0 0.2L342.3 0.4L341.6 0.3L340.9 0.2L340.2 0.2L339.5 0.3L338.8 0.2L338.1 0.3L337.4 0.4L336.7 0.3L336.0 0.2L335.3 0.3L334.6 0.1L333.9 0.3L333.2 0.4L332.5 0.3L331.8 0.2L331.1 0.3L330.4 0.4L329.7 0.4L329.0 0.1L328.3 0.3L327.6 0.2L326.9 0.4L326.2 0.2L325.5 0.2L324.8 0.2L324.1 0.1L323.4 0.2L322.7 0.3L322.0 0.4L321.3 4.5L320.6 4.5L319.9 4.0L319.2 0.2L318.5 0.4L317.8 0.1L317.1 0.3L316.4 0.2L315.7 0.2L315.0 0.3L314.3 0.1L313.6 0.3L312.9 0.4L312.2 0.1L311.5 0.1L310.8 0.3L310.1 0.3L309.4 0.1L308.7 0.2L308.0 0.3L307.3 0.2L306.6 0.2L305.9 0.2L305.2 0.3L304.5 0.2L303.8 0.2L303.1 0.1L302.4 0.7L301.7 0.6L301.0 0.6L300.3 0.8L299.6 0.7L298.9 1.0L298.2 1.2L297.5 0.9L296.8 1.1L296.1 1.0L295.4 0.7L294.7 0.9L294.0 1.1L293.3 1.0L292.6 1.0L291.9 1.2L291.2 1.3L290.5 0.4L289.8 0.3L289.1 0.3L288.4 0.4L287.7 0.4L287.0 0.3L286.3 0.1L285.6 0.2L284.9 0.4L284.2 0.3L283.5 0.2L282.8 0.2L282.1 0.1L281.4 0.2L280.7 0.1L280.0 0.2L279.3 0.1L278.6 0.3L277.9 0.2L277.2 0.2L276.5 0.4L275.8 0.3L275.1 0.3L274.4 0.3L273.7 0.2L273.0 0.1L272.3 0.2L271.6 0.1L270.9 0.4L270.2 0.3L269.5 0.3L268.8 0.3L268.1 0.1L267.4 0.3L266.7 0.1L266.0 0.1L265.3 0.3L264.6 0.2L263.9 0.3L263.2 0.4L262.5 0.2L261.8 0.3L261.1 0.2L260.4 0.3L259.7 0.2L259.0 0.2L258.3 0.2L257.6 0.2L256.9 0.4L256.2 0.4L255.5 0.3L254.8 0.3L254.1 0.2L253.4 0.4L252.7 0.1L252.0 0.3L251.3 0.4L250.6 0.2L249.9 0.2L249.2 0.1L248.5 0.1L247.8 0.1L247.1 0.2L246.4 0.2L245.7 0.1L245.0 0.3L244.3 0.2L243.6 0.3L242.9 0.2L242.2 0.2L241.5 0.4L240.8 0.4L240.1 0.3L239.4 0.2L238.7 0.3L238.0 0.2L237.3 0.2L236.6 0.3L235.9 0.1L235.2 0.4L234.5 0.2L233.8 0.3L233.1 0.2L232.4 0.2L231.7 0.4L231.0 0.3L230.3 0.4L229.6 0.4L228.9 0.4L228.2 0.3L227.5 0.3L226.8 0.4L226.1 0.3L225.4 0.2L224.7 0.4L224.0 0.4L223.3 0.4L222.6 0.1L221.9 0.3L221.2 0.4L220.5 0.3L219.8 0.2L219.1 0.3L218.4 0.3L217.7 0.4L217.0 0.3L216.3 0.2L215.6 0.2L214.9 0.1L214.2 0.4L213.5 0.3L212.8 0.2L212.1 0.3L211.4 0.2L210.7 0.1L210.0 0.4L209.3 0.3L208.6 0.2L207.9 0.3L207.2 0.3L206.5 0.1L205.8 0.2L205.1 0.2L204.4 0.3L203.7 0.1L203.0 0.2L202.3 0.2L201.6 0.2L200.9 0.3L200.2 0.2L199.5 0.2L198.8 0.3L198.1 0.2L197.4 0.1L196.7 0.3L196.0 0.2L195.3 0.2L194.6 0.2L193.9 0.2L193.2 0.1L192.5 0.1L191.8 0.4L191.1 0.2L190.4 0.4L189.7 0.1L189.0 0.1L188.3 0.2L187.6 0.4L186.9 0.1L186.2 0.1L185.5 0.2L184.8 0.2L184.1 0.3L183.4 0.1L182.7 0.3L182.0 0.4L181.3 0.3L180.6 0.3L179.9 0.3L179.2 0.3L178.5 0.2L177.8 0.1L177.1 0.4L176.4 0.2L175.7 0.3L175.0 0.2L174.3 0.2L173.6 0.3L172.9 0.3L172.2 0.2L171.5 0.2L170.8 0.2L170.1 0.4L169.4 0.3L168.7 0.1L168.0 0.2L167.3 0.2L166.6 0.4L165.9 0.1L165.2 0.1L164.5 0.3L163.8 0.2L163.1 0.3L162.4 0.1L161.7 0.3L161.0 0.3L160.3 0.2L159.6 0.3L158.9 0.3L158.2 0.4L157.5 0.4L156.8 0.3L156.1 0.2L155.4 0.2L154.7 0.2L154.0 0.1L153.3 0.3L152.6 0.4L151.9 0.2L151.2 0.2L150.5 0.4L149.8 0.3L149.1 0.2L148.4 0.4L147.7 0.2L147.0 0.3L146.3 0.2L145.6 0.3L144.9 0.1L144.2 0.4L143.5 0.3L142.8 0.3L142.1 0.2L141.4 0.4L140.7 0.2L140.0 0.2L139.3 0.4L138.6 0.2L137.9 0.1L137.2 0.1L136.5 0.2L135.8 0.1L135.1 0.4L134.4 0.1L133.7 0.1L133.0 7.7L132.3 8.6L131.6 0.9L130.9 0.9L130.2 0.8L129.5 0.6L128.8 1.0L128.1 0.6L127.4 0.8L126.7 0.9L126.0 0.6L125.3 1.1L124.6 0.5L123.9 0.8L123.2 0.9L122.5 0.8L121.8 1.0L121.1 0.6L120.4 1.0L119.7 1.2L119.0 0.9L118.3 0.9L117.6 6.2L116.9 5.6L116.2 5.5L115.5 0.7L114.8 1.0L114.1 0.9L113.4 0.6L112.7 1.0L112.0 0.6L111.3 0.5L110.6 1.1L109.9 0.9L109.2 0.8L108.5 0.8L107.8 0.8L107.1 0.9L106.4 1.0L105.7 0.7L105.0 0.8L104.3 4.6L103.6 4.1L102.9 1.1L102.2 1.1L101.5 1.2L100.8 1.0L100.1 1.6L99.4 1.1L98.7 1.6L98.0 0.9L97.3 1.4L96.6 1.5L95.9 0.7L95.2 3.7L94.5 3.4L93.8 4.2L93.1 0.9L92.4 1.5L91.7 1.3L91.0 0.8L90.3 1.4L89.6 1.2L88.9 1.1L88.2 0.9L87.5 1.1L86.8 2.8L86.1 3.8L85.4 2.4L84.7 1.9L84.0 2.1L83.3 3.3L82.6 3.9L81.9 1.5L81.2 8.9L80.5 7.9L79.8 8.2L79.1 0.2L78.4 0.2L77.7 0.3L77.0 0.3L76.3 0.2L75.6 0.2L74.9 0.3L74.2 0.2L73.5 0.1L72.8 2.9L72.1 2.7L71.4 3.1L70.7 3.1L70.0 1.7L69.3 2.9L68.6 2.9L67.9 2.6L67.2 0.3L66.5 0.1L65.8 0.2L65.1 0.4L64.4 8.9L63.7 8.2L63.0 8.4L62.3 0.2L61.6 1.4L60.9 2.0L60.2 1.1L59.5 1.1L58.8 1.3L58.1 1.5L57.4 1.6L56.7 1.4L56.0 1.5L55.3 0.4L54.6 0.4L53.9 0.3L53.2 9.5L52.5 8.4L51.8 0.2L51.1 0.2L50.4 9.2L49.7 10.3L49.0 0.1L48.3 0.3L47.6 0.2L46.9 0.3L46.2 4.7L45.5 5.7L44.8 5.8L44.1 0.3L43.4 0.4L42.7 2.4L42.0 1.9L41.3 1.8L40.6 2.8L39.9 1.5L39.2 1.9L38.5 1.5L37.8 1.3L37.1 2.1L36.4 1.8L35.7 1.6L35.0 1.8L34.3 1.5L33.6 2.3L32.9 3.1L32.2 2.5L31.5 3.1L30.8 4.1L30.1 2.8L29.4 2.4L28.7 1.9L28.0 1.7L27.3 2.0L26.6 1.8L25.9 1.9L25.2 1.8L24.5 1.6L23.8 1.2L23.1 2.7L22.4 1.4L21.7 1.9L21.0 2.2L20.3 2.2L19.6 2.2L18.9 1.9L18.2 3.0L17.5 2.3L16.8 3.5L16.1 1.9L15.4 1.2L14.7 2.0L14.0 1.9L13.3 2.1L12.6 2.0L11.9 1.3L11.2 1.4L10.5 2.0L9.8 1.3L9.1 1.9L8.4 2.6L7.7 3.8L7.0 2.8L6.3 4.7L5.6 3.6L4.9 3.1L4.2 4.4L3.5 4.9L2.8 4.6L2.1 3.4L1.4 4.3L0.7 0.3L0.0 0.3Z" fill="#1c1216"/><path transform="translate(0 85.09)" d="M0 0L0.0 -0.1L0.7 -0.4L1.4 -3.7L2.1 -3.9L2.8 -2.8L3.5 -3.8L4.2 -5.0L4.9 -5.1L5.6 -3.0L6.3 -5.0L7.0 -4.4L7.7 -2.6L8.4 -1.8L9.1 -2.5L9.8 -1.5L10.5 -2.0L11.2 -2.5L11.9 -1.5L12.6 -1.2L13.3 -2.4L14.0 -1.2L14.7 -1.5L15.4 -2.5L16.1 -1.6L16.8 -3.5L17.5 -3.3L18.2 -3.9L18.9 -3.2L19.6 -1.9L20.3 -2.0L21.0 -1.4L21.7 -1.6L22.4 -2.5L23.1 -2.4L23.8 -2.0L24.5 -2.1L25.2 -1.6L25.9 -2.0L26.6 -2.1L27.3 -2.2L28.0 -1.2L28.7 -1.8L29.4 -2.9L30.1 -3.3L30.8 -2.3L31.5 -3.8L32.2 -3.1L32.9 -2.2L33.6 -2.3L34.3 -1.5L35.0 -1.3L35.7 -1.4L36.4 -2.0L37.1 -1.9L37.8 -1.6L38.5 -2.2L39.2 -2.2L39.9 -2.6L40.6 -2.0L41.3 -1.6L42.0 -1.8L42.7 -2.2L43.4 -0.2L44.1 -0.4L44.8 -5.5L45.5 -5.7L46.2 -5.2L46.9 -0.1L47.6 -0.3L48.3 -0.3L49.0 -0.3L49.7 -10.1L50.4 -10.3L51.1 -0.3L51.8 -0.3L52.5 -10.3L53.2 -10.5L53.9 -0.3L54.6 -0.2L55.3 -0.4L56.0 -1.1L56.7 -1.3L57.4 -1.9L58.1 -1.7L58.8 -1.5L59.5 -1.0L60.2 -0.9L60.9 -1.9L61.6 -1.6L62.3 -0.3L63.0 -9.0L63.7 -9.8L64.4 -9.3L65.1 -0.3L65.8 -0.3L66.5 -0.4L67.2 -0.3L67.9 -4.1L68.6 -2.5L69.3 -3.9L70.0 -3.4L70.7 -2.6L71.4 -2.4L72.1 -2.9L72.8 -2.5L73.5 -0.3L74.2 -0.3L74.9 -0.4L75.6 -0.4L76.3 -0.2L77.0 -0.4L77.7 -0.3L78.4 -0.2L79.1 -0.2L79.8 -8.7L80.5 -8.4L81.2 -8.5L81.9 -2.8L82.6 -3.1L83.3 -3.0L84.0 -3.9L84.7 -2.0L85.4 -1.8L86.1 -3.6L86.8 -1.9L87.5 -1.6L88.2 -1.0L88.9 -0.9L89.6 -1.3L90.3 -1.5L91.0 -1.4L91.7 -1.5L92.4 -1.2L93.1 -0.9L93.8 -3.5L94.5 -3.6L95.2 -3.5L95.9 -1.3L96.6 -1.0L97.3 -1.4L98.0 -1.8L98.7 -1.8L99.4 -1.3L100.1 -0.9L100.8 -0.9L101.5 -0.9L102.2 -1.0L102.9 -1.6L103.6 -4.8L104.3 -4.6L105.0 -1.0L105.7 -1.1L106.4 -1.1L107.1 -0.6L107.8 -0.7L108.5 -0.7L109.2 -0.8L109.9 -1.2L110.6 -1.0L111.3 -0.8L112.0 -1.0L112.7 -1.0L113.4 -0.9L114.1 -0.8L114.8 -0.5L115.5 -0.9L116.2 -5.3L116.9 -5.6L117.6 -5.5L118.3 -0.9L119.0 -0.9L119.7 -0.7L120.4 -0.9L121.1 -0.6L121.8 -0.6L122.5 -0.6L123.2 -1.1L123.9 -0.8L124.6 -1.0L125.3 -0.6L126.0 -0.6L126.7 -1.1L127.4 -0.7L128.1 -1.1L128.8 -0.9L129.5 -0.6L130.2 -0.9L130.9 -0.8L131.6 -0.9L132.3 -8.2L133.0 -8.4L133.7 -0.4L134.4 -0.4L135.1 -0.4L135.8 -0.4L136.5 -0.3L137.2 -0.3L137.9 -0.2L138.6 -0.2L139.3 -0.3L140.0 -0.2L140.7 -0.3L141.4 -0.3L142.1 -0.3L142.8 -0.2L143.5 -0.2L144.2 -0.2L144.9 -0.3L145.6 -0.4L146.3 -0.2L147.0 -0.2L147.7 -0.3L148.4 -0.2L149.1 -0.3L149.8 -0.3L150.5 -0.4L151.2 -0.4L151.9 -0.3L152.6 -0.4L153.3 -0.3L154.0 -0.3L154.7 -0.3L155.4 -0.2L156.1 -0.4L156.8 -0.2L157.5 -0.3L158.2 -0.3L158.9 -0.2L159.6 -0.1L160.3 -0.2L161.0 -0.3L161.7 -0.4L162.4 -0.2L163.1 -0.4L163.8 -0.4L164.5 -0.4L165.2 -0.2L165.9 -0.1L166.6 -0.4L167.3 -0.1L168.0 -0.2L168.7 -0.4L169.4 -0.3L170.1 -0.4L170.8 -0.4L171.5 -0.2L172.2 -0.3L172.9 -0.1L173.6 -0.2L174.3 -0.3L175.0 -0.4L175.7 -0.2L176.4 -0.3L177.1 -0.2L177.8 -0.2L178.5 -0.1L179.2 -0.3L179.9 -0.3L180.6 -0.3L181.3 -0.2L182.0 -0.4L182.7 -0.3L183.4 -0.3L184.1 -0.4L184.8 -0.2L185.5 -0.2L186.2 -0.3L186.9 -0.3L187.6 -0.4L188.3 -0.3L189.0 -0.1L189.7 -0.4L190.4 -0.3L191.1 -0.2L191.8 -0.3L192.5 -0.3L193.2 -0.4L193.9 -0.3L194.6 -0.2L195.3 -0.3L196.0 -0.3L196.7 -0.2L197.4 -0.3L198.1 -0.2L198.8 -0.2L199.5 -0.2L200.2 -0.1L200.9 -0.3L201.6 -0.3L202.3 -0.2L203.0 -0.4L203.7 -0.3L204.4 -0.3L205.1 -0.2L205.8 -0.4L206.5 -0.2L207.2 -0.4L207.9 -0.2L208.6 -0.4L209.3 -0.3L210.0 -0.2L210.7 -0.3L211.4 -0.2L212.1 -0.2L212.8 -0.2L213.5 -0.2L214.2 -0.2L214.9 -0.2L215.6 -0.2L216.3 -0.1L217.0 -0.4L217.7 -0.2L218.4 -0.3L219.1 -0.2L219.8 -0.4L220.5 -0.4L221.2 -0.3L221.9 -0.4L222.6 -0.4L223.3 -0.4L224.0 -0.2L224.7 -0.3L225.4 -0.1L226.1 -0.2L226.8 -0.2L227.5 -0.3L228.2 -0.1L228.9 -0.3L229.6 -0.1L230.3 -0.2L231.0 -0.3L231.7 -0.4L232.4 -0.3L233.1 -0.2L233.8 -0.3L234.5 -0.2L235.2 -0.3L235.9 -0.2L236.6 -0.4L237.3 -0.3L238.0 -0.2L238.7 -0.2L239.4 -0.4L240.1 -0.2L240.8 -0.2L241.5 -0.3L242.2 -0.3L242.9 -0.4L243.6 -0.1L244.3 -0.2L245.0 -0.3L245.7 -0.3L246.4 -0.3L247.1 -0.3L247.8 -0.1L248.5 -0.1L249.2 -0.2L249.9 -0.2L250.6 -0.2L251.3 -0.2L252.0 -0.2L252.7 -0.1L253.4 -0.3L254.1 -0.3L254.8 -0.2L255.5 -0.1L256.2 -0.3L256.9 -0.1L257.6 -0.2L258.3 -0.3L259.0 -0.2L259.7 -0.4L260.4 -0.3L261.1 -0.3L261.8 -0.2L262.5 -0.1L263.2 -0.4L263.9 -0.2L264.6 -0.4L265.3 -1.0L266.0 -0.8L266.7 -1.4L267.4 -1.5L268.1 -1.3L268.8 -1.1L269.5 -1.2L270.2 -1.2L270.9 -0.9L271.6 -1.3L272.3 -0.9L273.0 -1.1L273.7 -1.0L274.4 -0.7L275.1 -1.5L275.8 -1.1L276.5 -1.1L277.2 -0.8L277.9 -1.2L278.6 -1.2L279.3 -1.2L280.0 -1.1L280.7 -1.1L281.4 -0.9L282.1 -0.8L282.8 -1.5L283.5 -1.3L284.2 -1.5L284.9 -1.0L285.6 -0.7L286.3 -0.9L287.0 -1.3L287.7 -1.1L288.4 -0.7L289.1 -1.4L289.8 -1.1L290.5 -1.0L291.2 -0.8L291.9 -1.1L292.6 -1.2L293.3 -1.2L294.0 -1.5L294.7 -1.1L295.4 -0.8L296.1 -0.8L296.8 -0.7L297.5 -1.2L298.2 -1.5L298.9 -1.1L299.6 -1.2L300.3 -1.3L301.0 -0.9L301.7 -1.3L302.4 -1.2L303.1 -1.3L303.8 -1.3L304.5 -1.2L305.2 -1.9L305.9 -1.5L306.6 -1.3L307.3 -2.0L308.0 -1.9L308.7 -1.4L309.4 -0.7L310.1 -1.3L310.8 -0.9L311.5 -1.4L312.2 -1.4L312.9 -0.7L313.6 -1.2L314.3 -1.3L315.0 -1.5L315.7 -1.0L316.4 -1.3L317.1 -0.3L317.8 -0.4L318.5 -0.2L319.2 -0.4L319.9 -5.2L320.6 -5.5L321.3 -5.8L322.0 -0.3L322.7 -0.3L323.4 -0.3L324.1 -0.2L324.8 -0.3L325.5 -0.3L326.2 -0.2L326.9 -0.2L327.6 -0.2L328.3 -0.3L329.0 -0.3L329.7 -0.2L330.4 -0.1L331.1 -0.4L331.8 -0.3L332.5 -0.4L333.2 -0.4L333.9 -0.1L334.6 -0.2L335.3 -0.3L336.0 -0.2L336.7 -0.4L337.4 -0.2L338.1 -0.1L338.8 -0.3L339.5 -0.1L340.2 -0.1L340.9 -0.3L341.6 -0.3L342.3 -0.3L343.0 -0.1L343.7 -0.3L344.4 -0.3L345.1 -0.2L345.8 -0.2L346.5 -0.2L347.2 -0.3L347.9 -0.2L348.6 -0.3L349.3 -0.3L350.0 -0.2L350.7 -0.3L351.4 -0.2L352.1 -0.3L352.8 -0.2L353.5 -0.3L354.2 -0.3L354.9 -0.4L355.6 -0.3L356.3 -0.4L357.0 -3.5L357.7 -2.4L358.4 -2.1L359.1 -2.0L359.8 -2.7L360.5 -3.6L361.2 -2.5L361.9 -1.9L362.6 -3.7L363.3 -0.2L364.0 -8.6L364.7 -10.4L365.4 -10.2L366.1 -0.1L366.8 -3.2L367.5 -3.8L368.2 -3.3L368.9 -2.0L369.6 -3.5L370.3 -0.4L371.0 -6.6L371.7 -8.4L372.4 -9.6L373.1 -9.9L373.8 -9.1L374.5 -9.4L375.2 -9.6L375.9 -8.0L376.6 -5.6L377.3 -0.4L378.0 -3.8L378.7 -3.6L379.4 -3.5L380.1 -0.3L380.8 -6.6L381.5 -7.9L382.2 -9.1L382.9 -8.4L383.6 -0.2L384.3 -4.3L385.0 -4.3L385.7 -4.6L386.4 -4.0L387.1 -5.2L387.8 -5.5L388.5 -6.2L389.2 -5.5L389.9 -4.3L390.6 -0.4L391.3 -5.3L392.0 -6.4L392.7 -6.6L393.4 -7.3L394.1 -6.2L394.8 -6.0L395.5 -4.2L396.2 -0.3L396.2 0.3L395.5 4.4L394.8 6.4L394.1 5.4L393.4 6.5L392.7 6.4L392.0 6.3L391.3 5.2L390.6 0.4L389.9 3.8L389.2 4.8L388.5 5.1L387.8 4.5L387.1 5.0L386.4 3.3L385.7 4.9L385.0 4.7L384.3 3.6L383.6 0.2L382.9 8.3L382.2 7.3L381.5 7.2L380.8 6.0L380.1 0.3L379.4 2.9L378.7 3.2L378.0 3.0L377.3 0.4L376.6 5.3L375.9 6.9L375.2 10.4L374.5 10.0L373.8 8.7L373.1 10.3L372.4 8.7L371.7 8.6L371.0 6.8L370.3 0.4L369.6 3.6L368.9 1.8L368.2 2.8L367.5 3.5L366.8 2.7L366.1 0.1L365.4 8.9L364.7 9.9L364.0 9.0L363.3 0.2L362.6 4.0L361.9 1.9L361.2 2.6L360.5 3.7L359.8 2.7L359.1 2.2L358.4 2.0L357.7 2.4L357.0 3.4L356.3 0.4L355.6 0.3L354.9 0.3L354.2 0.3L353.5 0.3L352.8 0.2L352.1 0.3L351.4 0.2L350.7 0.2L350.0 0.2L349.3 0.3L348.6 0.3L347.9 0.2L347.2 0.2L346.5 0.1L345.8 0.2L345.1 0.2L344.4 0.2L343.7 0.3L343.0 0.1L342.3 0.3L341.6 0.3L340.9 0.3L340.2 0.1L339.5 0.1L338.8 0.2L338.1 0.1L337.4 0.2L336.7 0.4L336.0 0.2L335.3 0.2L334.6 0.2L333.9 0.1L333.2 0.4L332.5 0.4L331.8 0.3L331.1 0.3L330.4 0.1L329.7 0.2L329.0 0.3L328.3 0.4L327.6 0.2L326.9 0.2L326.2 0.2L325.5 0.2L324.8 0.3L324.1 0.2L323.4 0.3L322.7 0.3L322.0 0.3L321.3 6.0L320.6 6.0L319.9 4.3L319.2 0.4L318.5 0.2L317.8 0.4L317.1 0.3L316.4 1.2L315.7 0.9L315.0 1.3L314.3 1.1L313.6 1.2L312.9 0.7L312.2 1.2L311.5 1.1L310.8 0.9L310.1 1.3L309.4 0.6L308.7 1.3L308.0 2.1L307.3 1.8L306.6 1.2L305.9 1.6L305.2 1.5L304.5 1.3L303.8 1.4L303.1 1.3L302.4 1.1L301.7 1.2L301.0 1.0L300.3 1.1L299.6 1.0L298.9 1.0L298.2 1.6L297.5 1.0L296.8 0.6L296.1 0.8L295.4 0.8L294.7 1.1L294.0 1.5L293.3 1.0L292.6 1.0L291.9 1.1L291.2 0.9L290.5 0.8L289.8 0.9L289.1 1.3L288.4 0.7L287.7 1.0L287.0 1.1L286.3 0.7L285.6 0.7L284.9 1.1L284.2 1.5L283.5 1.4L282.8 1.3L282.1 0.8L281.4 0.8L280.7 1.2L280.0 1.1L279.3 1.2L278.6 1.3L277.9 1.3L277.2 0.6L276.5 1.0L275.8 0.9L275.1 1.4L274.4 0.6L273.7 1.0L273.0 1.0L272.3 0.7L271.6 1.4L270.9 0.8L270.2 1.1L269.5 1.2L268.8 0.9L268.1 1.3L267.4 1.5L266.7 1.2L266.0 0.8L265.3 0.9L264.6 0.4L263.9 0.2L263.2 0.3L262.5 0.1L261.8 0.2L261.1 0.3L260.4 0.3L259.7 0.3L259.0 0.2L258.3 0.2L257.6 0.2L256.9 0.1L256.2 0.3L255.5 0.1L254.8 0.2L254.1 0.4L253.4 0.3L252.7 0.1L252.0 0.1L251.3 0.2L250.6 0.2L249.9 0.2L249.2 0.2L248.5 0.1L247.8 0.1L247.1 0.3L246.4 0.3L245.7 0.2L245.0 0.3L244.3 0.2L243.6 0.1L242.9 0.4L242.2 0.3L241.5 0.2L240.8 0.2L240.1 0.2L239.4 0.4L238.7 0.2L238.0 0.2L237.3 0.2L236.6 0.4L235.9 0.3L235.2 0.3L234.5 0.2L233.8 0.3L233.1 0.1L232.4 0.3L231.7 0.3L231.0 0.2L230.3 0.2L229.6 0.1L228.9 0.4L228.2 0.1L227.5 0.3L226.8 0.2L226.1 0.2L225.4 0.1L224.7 0.3L224.0 0.2L223.3 0.3L222.6 0.4L221.9 0.4L221.2 0.3L220.5 0.3L219.8 0.5L219.1 0.3L218.4 0.3L217.7 0.2L217.0 0.3L216.3 0.1L215.6 0.2L214.9 0.2L214.2 0.3L213.5 0.2L212.8 0.2L212.1 0.3L211.4 0.2L210.7 0.3L210.0 0.1L209.3 0.4L208.6 0.4L207.9 0.2L207.2 0.4L206.5 0.2L205.8 0.4L205.1 0.2L204.4 0.3L203.7 0.3L203.0 0.4L202.3 0.2L201.6 0.4L200.9 0.3L200.2 0.1L199.5 0.2L198.8 0.2L198.1 0.1L197.4 0.3L196.7 0.2L196.0 0.2L195.3 0.2L194.6 0.2L193.9 0.3L193.2 0.4L192.5 0.3L191.8 0.3L191.1 0.2L190.4 0.2L189.7 0.3L189.0 0.1L188.3 0.3L187.6 0.3L186.9 0.3L186.2 0.3L185.5 0.2L184.8 0.2L184.1 0.4L183.4 0.3L182.7 0.3L182.0 0.3L181.3 0.3L180.6 0.3L179.9 0.3L179.2 0.3L178.5 0.1L177.8 0.2L177.1 0.2L176.4 0.3L175.7 0.2L175.0 0.4L174.3 0.3L173.6 0.2L172.9 0.1L172.2 0.2L171.5 0.2L170.8 0.4L170.1 0.4L169.4 0.3L168.7 0.4L168.0 0.2L167.3 0.1L166.6 0.3L165.9 0.1L165.2 0.2L164.5 0.4L163.8 0.4L163.1 0.4L162.4 0.2L161.7 0.3L161.0 0.3L160.3 0.2L159.6 0.1L158.9 0.2L158.2 0.3L157.5 0.3L156.8 0.2L156.1 0.3L155.4 0.2L154.7 0.3L154.0 0.3L153.3 0.3L152.6 0.4L151.9 0.4L151.2 0.4L150.5 0.4L149.8 0.4L149.1 0.3L148.4 0.2L147.7 0.2L147.0 0.2L146.3 0.2L145.6 0.4L144.9 0.3L144.2 0.2L143.5 0.2L142.8 0.2L142.1 0.3L141.4 0.3L140.7 0.3L140.0 0.2L139.3 0.3L138.6 0.2L137.9 0.2L137.2 0.3L136.5 0.3L135.8 0.3L135.1 0.4L134.4 0.3L133.7 0.3L133.0 8.7L132.3 7.3L131.6 0.8L130.9 0.8L130.2 0.8L129.5 0.6L128.8 0.7L128.1 1.0L127.4 0.7L126.7 1.0L126.0 0.6L125.3 0.5L124.6 1.0L123.9 0.7L123.2 1.0L122.5 0.6L121.8 0.6L121.1 0.6L120.4 0.7L119.7 0.7L119.0 0.9L118.3 0.8L117.6 4.7L116.9 5.6L116.2 4.6L115.5 0.7L114.8 0.4L114.1 0.8L113.4 0.9L112.7 1.0L112.0 1.0L111.3 0.9L110.6 1.1L109.9 1.0L109.2 0.8L108.5 0.8L107.8 0.7L107.1 0.6L106.4 1.0L105.7 1.0L105.0 0.8L104.3 4.1L103.6 4.1L102.9 1.6L102.2 1.0L101.5 0.9L100.8 1.0L100.1 0.7L99.4 1.1L98.7 1.5L98.0 1.6L97.3 1.5L96.6 1.0L95.9 1.4L95.2 3.0L94.5 3.2L93.8 3.7L93.1 0.8L92.4 1.2L91.7 1.4L91.0 1.4L90.3 1.2L89.6 1.2L88.9 0.9L88.2 0.9L87.5 1.5L86.8 2.1L86.1 3.5L85.4 1.9L84.7 1.9L84.0 3.8L83.3 2.8L82.6 2.7L81.9 2.5L81.2 7.3L80.5 8.5L79.8 7.2L79.1 0.2L78.4 0.2L77.7 0.3L77.0 0.4L76.3 0.2L75.6 0.4L74.9 0.3L74.2 0.2L73.5 0.2L72.8 2.4L72.1 2.3L71.4 2.0L70.7 2.1L70.0 3.1L69.3 3.7L68.6 2.2L67.9 3.4L67.2 0.3L66.5 0.4L65.8 0.3L65.1 0.3L64.4 7.8L63.7 8.4L63.0 9.6L62.3 0.2L61.6 1.4L60.9 1.9L60.2 1.0L59.5 1.1L58.8 1.5L58.1 1.5L57.4 1.9L56.7 1.4L56.0 1.2L55.3 0.4L54.6 0.3L53.9 0.3L53.2 10.6L52.5 9.5L51.8 0.3L51.1 0.3L50.4 10.1L49.7 8.1L49.0 0.3L48.3 0.4L47.6 0.3L46.9 0.1L46.2 5.6L45.5 5.8L44.8 4.8L44.1 0.4L43.4 0.2L42.7 1.8L42.0 1.9L41.3 1.5L40.6 2.1L39.9 2.1L39.2 2.0L38.5 1.9L37.8 1.4L37.1 1.9L36.4 2.1L35.7 1.4L35.0 1.4L34.3 1.2L33.6 2.0L32.9 2.0L32.2 3.2L31.5 3.8L30.8 2.5L30.1 3.5L29.4 2.8L28.7 1.8L28.0 1.3L27.3 2.1L26.6 2.1L25.9 2.1L25.2 1.7L24.5 1.7L23.8 1.6L23.1 2.4L22.4 2.6L21.7 1.3L21.0 1.4L20.3 2.1L19.6 1.6L18.9 2.7L18.2 3.9L17.5 3.2L16.8 2.9L16.1 1.7L15.4 2.1L14.7 1.6L14.0 1.3L13.3 2.0L12.6 1.2L11.9 1.4L11.2 2.7L10.5 1.8L9.8 1.4L9.1 2.2L8.4 1.9L7.7 2.3L7.0 4.8L6.3 4.1L5.6 3.2L4.9 4.1L4.2 5.1L3.5 4.1L2.8 2.5L2.1 3.8L1.4 3.4L0.7 0.3L0.0 0.1Z" fill="#1c1216"/><path transform="translate(0 109.52)" d="M0 0L0.0 -0.3L0.7 -0.4L1.4 -4.9L2.1 -7.2L2.8 -6.9L3.5 -7.9L4.2 -8.4L4.9 -7.3L5.6 -5.9L6.3 -1.7L7.0 -2.4L7.7 -2.6L8.4 -2.3L9.1 -3.2L9.8 -1.9L10.5 -2.1L11.2 -2.3L11.9 -3.4L12.6 -2.3L13.3 -2.5L14.0 -0.4L14.7 -6.2L15.4 -7.7L16.1 -8.7L16.8 -9.6L17.5 -8.8L18.2 -8.6L18.9 -8.3L19.6 -7.8L20.3 -0.4L21.0 -2.2L21.7 -2.0L22.4 -2.0L23.1 -2.1L23.8 -2.2L24.5 -1.6L25.2 -2.2L25.9 -2.2L26.6 -2.5L27.3 -1.4L28.0 -1.8L28.7 -2.1L29.4 -2.9L30.1 -0.3L30.8 -5.8L31.5 -7.9L32.2 -8.4L32.9 -8.5L33.6 -8.5L34.3 -6.3L35.0 -1.0L35.7 -1.3L36.4 -1.5L37.1 -1.0L37.8 -1.2L38.5 -1.5L39.2 -0.8L39.9 -1.5L40.6 -1.4L41.3 -1.2L42.0 -0.9L42.7 -1.5L43.4 -1.6L44.1 -1.2L44.8 -1.1L45.5 -1.5L46.2 -1.5L46.9 -0.3L47.6 -0.2L48.3 -0.3L49.0 -0.2L49.7 -0.3L50.4 -0.3L51.1 -0.3L51.8 -0.4L52.5 -9.2L53.2 -9.6L53.9 -0.8L54.6 -1.0L55.3 -0.9L56.0 -0.9L56.7 -1.2L57.4 -1.3L58.1 -1.4L58.8 -1.1L59.5 -0.9L60.2 -1.5L60.9 -0.8L61.6 -0.9L62.3 -1.3L63.0 -0.9L63.7 -1.2L64.4 -1.2L65.1 -1.4L65.8 -1.3L66.5 -1.1L67.2 -0.8L67.9 -1.1L68.6 -0.9L69.3 -1.0L70.0 -0.3L70.7 -0.3L71.4 -0.4L72.1 -0.2L72.8 -0.2L73.5 -0.3L74.2 -0.2L74.9 -0.2L75.6 -0.2L76.3 -0.4L77.0 -0.3L77.7 -0.3L78.4 -0.2L79.1 -0.4L79.8 -0.2L80.5 -0.3L81.2 -0.1L81.9 -0.3L82.6 -0.2L83.3 -0.4L84.0 -0.3L84.7 -0.4L85.4 -0.1L86.1 -0.2L86.8 -0.4L87.5 -0.2L88.2 -0.1L88.9 -0.2L89.6 -0.2L90.3 -0.3L91.0 -0.2L91.7 -0.2L92.4 -0.3L93.1 -0.3L93.8 -0.2L94.5 -0.3L95.2 -0.3L95.9 -0.3L96.6 -0.3L97.3 -0.3L98.0 -0.2L98.7 -0.4L99.4 -0.2L100.1 -0.2L100.8 -0.2L101.5 -0.2L102.2 -0.2L102.9 -0.4L103.6 -0.2L104.3 -0.3L105.0 -0.3L105.7 -0.2L106.4 -0.2L107.1 -0.2L107.8 -0.3L108.5 -0.3L109.2 -0.4L109.9 -0.4L110.6 -0.2L111.3 -0.3L112.0 -0.3L112.7 -0.2L113.4 -0.4L114.1 -0.3L114.8 -0.4L115.5 -0.1L116.2 -0.2L116.9 -0.3L117.6 -0.4L118.3 -0.3L119.0 -0.4L119.7 -0.3L120.4 -0.2L121.1 -0.3L121.8 -0.3L122.5 -0.2L123.2 -0.4L123.9 -0.4L124.6 -0.4L125.3 -0.2L126.0 -0.4L126.7 -0.1L127.4 -0.3L128.1 -0.2L128.8 -0.3L129.5 -0.2L130.2 -0.3L130.9 -0.3L131.6 -0.3L132.3 -6.2L133.0 -6.2L133.7 -0.2L134.4 -0.2L135.1 -0.3L135.8 -0.3L136.5 -0.4L137.2 -0.2L137.9 -0.2L138.6 -0.3L139.3 -0.1L140.0 -0.3L140.7 -0.1L141.4 -0.3L142.1 -0.3L142.8 -0.2L143.5 -0.4L144.2 -0.2L144.9 -0.1L145.6 -0.2L146.3 -0.2L147.0 -0.3L147.7 -0.3L148.4 -0.2L149.1 -0.4L149.8 -0.2L150.5 -0.2L151.2 -6.9L151.9 -7.7L152.6 -7.8L153.3 -5.6L154.0 -4.1L154.7 -4.5L155.4 -5.2L156.1 -5.1L156.8 -3.3L157.5 -0.3L158.2 -0.4L158.9 -0.1L159.6 -0.1L160.3 -0.3L161.0 -3.0L161.7 -2.7L162.4 -3.8L163.1 -3.4L163.8 -3.7L164.5 -0.4L165.2 -0.3L165.9 -0.2L166.6 -0.2L167.3 -6.4L168.0 -8.4L168.7 -9.1L169.4 -8.3L170.1 -0.3L170.8 -3.3L171.5 -4.5L172.2 -5.1L172.9 -5.5L173.6 -4.9L174.3 -4.0L175.0 -0.3L175.7 -0.2L176.4 -0.1L177.1 -0.2L177.8 -0.1L178.5 -0.3L179.2 -0.1L179.9 -0.4L180.6 -0.2L181.3 -0.2L182.0 -0.3L182.7 -0.2L183.4 -0.3L184.1 -0.2L184.8 -0.4L185.5 -0.1L186.2 -0.1L186.9 -0.4L187.6 -0.3L188.3 -0.2L189.0 -0.3L189.7 -0.2L190.4 -0.3L191.1 -0.2L191.8 -0.3L192.5 -0.3L193.2 -0.4L193.9 -0.2L194.6 -0.3L195.3 -0.3L196.0 -0.4L196.7 -0.3L197.4 -0.4L198.1 -0.4L198.8 -0.2L199.5 -0.2L200.2 -0.4L200.9 -0.3L201.6 -0.3L202.3 -0.4L203.0 -0.3L203.7 -0.3L204.4 -0.3L205.1 -0.2L205.8 -0.2L206.5 -0.1L207.2 -0.3L207.9 -0.4L208.6 -0.3L209.3 -0.4L210.0 -0.3L210.7 -0.2L211.4 -0.2L212.1 -0.4L212.8 -0.2L213.5 -0.4L214.2 -0.4L214.9 -0.2L215.6 -0.2L216.3 -0.3L217.0 -0.3L217.7 -0.1L218.4 -0.3L219.1 -0.2L219.8 -0.4L220.5 -0.3L221.2 -0.1L221.9 -0.2L222.6 -0.1L223.3 -0.4L224.0 -0.4L224.7 -0.3L225.4 -0.1L226.1 -0.4L226.8 -0.2L227.5 -0.3L228.2 -0.3L228.9 -0.3L229.6 -0.2L230.3 -0.2L231.0 -0.3L231.7 -0.2L232.4 -0.2L233.1 -0.4L233.8 -0.2L234.5 -0.2L235.2 -0.3L235.9 -0.2L236.6 -0.4L237.3 -0.2L238.0 -0.4L238.7 -0.4L239.4 -0.2L240.1 -0.3L240.8 -0.3L241.5 -0.2L242.2 -0.4L242.9 -0.2L243.6 -0.3L244.3 -0.1L245.0 -0.4L245.7 -0.4L246.4 -0.3L247.1 -0.2L247.8 -0.3L248.5 -0.3L249.2 -0.3L249.9 -0.2L250.6 -0.2L251.3 -0.4L252.0 -0.3L252.7 -0.3L253.4 -0.3L254.1 -0.2L254.8 -0.3L255.5 -0.2L256.2 -0.3L256.9 -0.2L257.6 -0.4L258.3 -0.2L259.0 -0.2L259.7 -0.1L260.4 -0.1L261.1 -0.2L261.8 -0.1L262.5 -0.2L263.2 -0.2L263.9 -0.4L264.6 -0.1L265.3 -0.4L266.0 -0.1L266.7 -0.4L267.4 -0.2L268.1 -0.2L268.8 -0.3L269.5 -0.2L270.2 -0.1L270.9 -0.2L271.6 -0.3L272.3 -0.3L273.0 -0.4L273.7 -0.2L274.4 -0.4L275.1 -0.2L275.8 -0.3L276.5 -0.2L277.2 -0.2L277.9 -0.4L278.6 -0.2L279.3 -0.2L280.0 -0.4L280.7 -0.3L281.4 -0.4L282.1 -0.3L282.8 -0.2L283.5 -0.3L284.2 -0.3L284.9 -0.2L285.6 -0.4L286.3 -0.1L287.0 -0.4L287.7 -0.3L288.4 -0.3L289.1 -0.3L289.8 -0.3L290.5 -0.1L291.2 -1.1L291.9 -1.0L292.6 -0.9L293.3 -0.9L294.0 -0.9L294.7 -0.6L295.4 -1.1L296.1 -1.1L296.8 -0.8L297.5 -0.9L298.2 -0.6L298.9 -1.1L299.6 -1.0L300.3 -1.0L301.0 -0.6L301.7 -1.1L302.4 -0.9L303.1 -0.2L303.8 -0.4L304.5 -0.3L305.2 -0.2L305.9 -0.1L306.6 -0.3L307.3 -0.3L308.0 -0.3L308.7 -0.3L309.4 -0.1L310.1 -0.2L310.8 -0.4L311.5 -0.2L312.2 -0.2L312.9 -0.2L313.6 -0.4L314.3 -0.4L315.0 -0.2L315.7 -0.2L316.4 -0.2L317.1 -0.4L317.8 -0.4L318.5 -0.4L319.2 -0.4L319.9 -4.3L320.6 -4.4L321.3 -4.5L322.0 -0.1L322.7 -0.3L323.4 -0.2L324.1 -0.4L324.8 -0.2L325.5 -0.3L326.2 -0.3L326.9 -0.1L327.6 -0.2L328.3 -0.2L329.0 -0.4L329.7 -0.4L330.4 -0.4L331.1 -0.2L331.8 -0.2L332.5 -0.2L333.2 -0.2L333.9 -0.2L334.6 -0.3L335.3 -0.1L336.0 -0.3L336.7 -0.2L337.4 -0.2L338.1 -0.2L338.8 -0.3L339.5 -0.4L340.2 -0.3L340.9 -0.2L341.6 -0.4L342.3 -0.2L343.0 -0.2L343.7 -0.3L344.4 -0.4L345.1 -0.3L345.8 -0.3L346.5 -0.3L347.2 -0.2L347.9 -8.6L348.6 -8.4L349.3 -8.3L350.0 -0.4L350.7 -0.3L351.4 -2.2L352.1 -2.3L352.8 -2.4L353.5 -0.4L354.2 -0.2L354.9 -0.3L355.6 -0.3L356.3 -0.2L357.0 -0.2L357.7 -0.4L358.4 -0.4L359.1 -0.3L359.8 -0.3L360.5 -0.1L361.2 -0.2L361.9 -0.2L362.6 -0.1L363.3 -0.2L364.0 -9.6L364.7 -9.1L365.4 -9.8L366.1 -0.2L366.8 -0.3L367.5 -0.2L368.2 -0.3L368.9 -0.2L369.6 -0.3L370.3 -0.4L371.0 -0.3L371.7 -7.8L372.4 -7.4L373.1 -0.3L373.8 -5.2L374.5 -5.8L375.2 -5.1L375.9 -0.4L376.6 -0.1L377.3 -0.3L378.0 -0.2L378.7 -0.2L379.4 -0.2L380.1 -0.3L380.8 -10.3L381.5 -9.0L382.2 -9.1L382.9 -0.2L383.6 -0.2L384.3 -2.6L385.0 -2.7L385.7 -2.9L386.4 -3.6L387.1 -3.6L387.8 -3.8L388.5 -4.0L389.2 -3.6L389.9 -0.3L390.6 -0.3L391.3 -5.6L392.0 -6.5L392.7 -7.1L393.4 -6.3L394.1 -6.3L394.8 -5.8L395.5 -4.2L396.2 -0.4L396.2 0.3L395.5 4.4L394.8 5.1L394.1 6.5L393.4 5.7L392.7 6.8L392.0 6.5L391.3 5.7L390.6 0.3L389.9 0.3L389.2 3.1L388.5 3.5L387.8 3.9L387.1 3.0L386.4 3.4L385.7 2.4L385.0 2.6L384.3 2.2L383.6 0.2L382.9 0.2L382.2 8.5L381.5 8.6L380.8 8.4L380.1 0.3L379.4 0.2L378.7 0.2L378.0 0.1L377.3 0.2L376.6 0.1L375.9 0.4L375.2 5.1L374.5 5.2L373.8 4.6L373.1 0.3L372.4 7.2L371.7 7.6L371.0 0.3L370.3 0.3L369.6 0.3L368.9 0.2L368.2 0.3L367.5 0.2L366.8 0.2L366.1 0.2L365.4 10.4L364.7 8.8L364.0 7.7L363.3 0.2L362.6 0.1L361.9 0.2L361.2 0.2L360.5 0.1L359.8 0.3L359.1 0.3L358.4 0.4L357.7 0.4L357.0 0.1L356.3 0.2L355.6 0.3L354.9 0.3L354.2 0.2L353.5 0.4L352.8 2.4L352.1 1.9L351.4 1.8L350.7 0.3L350.0 0.4L349.3 7.3L348.6 9.0L347.9 9.0L347.2 0.2L346.5 0.4L345.8 0.2L345.1 0.3L344.4 0.3L343.7 0.3L343.0 0.2L342.3 0.2L341.6 0.5L340.9 0.2L340.2 0.3L339.5 0.4L338.8 0.3L338.1 0.2L337.4 0.2L336.7 0.2L336.0 0.3L335.3 0.1L334.6 0.3L333.9 0.2L333.2 0.2L332.5 0.2L331.8 0.2L331.1 0.2L330.4 0.4L329.7 0.3L329.0 0.3L328.3 0.2L327.6 0.2L326.9 0.1L326.2 0.3L325.5 0.3L324.8 0.2L324.1 0.3L323.4 0.2L322.7 0.3L322.0 0.1L321.3 4.4L320.6 4.4L319.9 3.8L319.2 0.3L318.5 0.3L317.8 0.4L317.1 0.4L316.4 0.2L315.7 0.2L315.0 0.2L314.3 0.4L313.6 0.3L312.9 0.2L312.2 0.2L311.5 0.2L310.8 0.3L310.1 0.2L309.4 0.1L308.7 0.3L308.0 0.2L307.3 0.3L306.6 0.3L305.9 0.2L305.2 0.2L304.5 0.3L303.8 0.3L303.1 0.2L302.4 0.8L301.7 1.0L301.0 0.5L300.3 1.0L299.6 1.0L298.9 1.0L298.2 0.6L297.5 1.0L296.8 0.8L296.1 1.1L295.4 1.0L294.7 0.7L294.0 0.9L293.3 0.8L292.6 0.7L291.9 1.0L291.2 0.9L290.5 0.1L289.8 0.4L289.1 0.2L288.4 0.3L287.7 0.3L287.0 0.4L286.3 0.1L285.6 0.4L284.9 0.2L284.2 0.3L283.5 0.3L282.8 0.2L282.1 0.3L281.4 0.3L280.7 0.3L280.0 0.4L279.3 0.2L278.6 0.2L277.9 0.4L277.2 0.2L276.5 0.2L275.8 0.3L275.1 0.2L274.4 0.3L273.7 0.2L273.0 0.4L272.3 0.3L271.6 0.3L270.9 0.2L270.2 0.1L269.5 0.2L268.8 0.2L268.1 0.2L267.4 0.2L266.7 0.3L266.0 0.1L265.3 0.4L264.6 0.1L263.9 0.3L263.2 0.3L262.5 0.2L261.8 0.1L261.1 0.2L260.4 0.1L259.7 0.1L259.0 0.2L258.3 0.2L257.6 0.3L256.9 0.2L256.2 0.3L255.5 0.2L254.8 0.3L254.1 0.2L253.4 0.3L252.7 0.4L252.0 0.3L251.3 0.3L250.6 0.2L249.9 0.2L249.2 0.3L248.5 0.2L247.8 0.3L247.1 0.1L246.4 0.3L245.7 0.4L245.0 0.4L244.3 0.1L243.6 0.3L242.9 0.2L242.2 0.4L241.5 0.1L240.8 0.2L240.1 0.3L239.4 0.1L238.7 0.3L238.0 0.4L237.3 0.3L236.6 0.3L235.9 0.2L235.2 0.3L234.5 0.1L233.8 0.2L233.1 0.4L232.4 0.2L231.7 0.2L231.0 0.4L230.3 0.2L229.6 0.1L228.9 0.3L228.2 0.3L227.5 0.3L226.8 0.2L226.1 0.4L225.4 0.1L224.7 0.3L224.0 0.4L223.3 0.4L222.6 0.1L221.9 0.2L221.2 0.1L220.5 0.3L219.8 0.4L219.1 0.2L218.4 0.3L217.7 0.1L217.0 0.3L216.3 0.3L215.6 0.2L214.9 0.1L214.2 0.4L213.5 0.3L212.8 0.2L212.1 0.3L211.4 0.2L210.7 0.1L210.0 0.3L209.3 0.4L208.6 0.4L207.9 0.3L207.2 0.3L206.5 0.1L205.8 0.2L205.1 0.2L204.4 0.3L203.7 0.3L203.0 0.3L202.3 0.3L201.6 0.3L200.9 0.3L200.2 0.4L199.5 0.2L198.8 0.2L198.1 0.4L197.4 0.3L196.7 0.3L196.0 0.3L195.3 0.3L194.6 0.3L193.9 0.2L193.2 0.3L192.5 0.3L191.8 0.3L191.1 0.2L190.4 0.3L189.7 0.2L189.0 0.3L188.3 0.2L187.6 0.3L186.9 0.3L186.2 0.1L185.5 0.1L184.8 0.4L184.1 0.2L183.4 0.3L182.7 0.2L182.0 0.3L181.3 0.2L180.6 0.2L179.9 0.3L179.2 0.1L178.5 0.3L177.8 0.1L177.1 0.2L176.4 0.1L175.7 0.2L175.0 0.2L174.3 3.8L173.6 4.7L172.9 5.8L172.2 5.4L171.5 3.8L170.8 3.6L170.1 0.2L169.4 7.8L168.7 7.7L168.0 7.3L167.3 5.4L166.6 0.2L165.9 0.2L165.2 0.2L164.5 0.3L163.8 3.1L163.1 2.8L162.4 4.1L161.7 2.5L161.0 2.8L160.3 0.3L159.6 0.1L158.9 0.1L158.2 0.4L157.5 0.3L156.8 2.9L156.1 4.8L155.4 4.8L154.7 4.6L154.0 3.9L153.3 5.7L152.6 6.4L151.9 6.9L151.2 6.1L150.5 0.2L149.8 0.2L149.1 0.3L148.4 0.2L147.7 0.3L147.0 0.3L146.3 0.2L145.6 0.2L144.9 0.1L144.2 0.2L143.5 0.4L142.8 0.2L142.1 0.3L141.4 0.3L140.7 0.1L140.0 0.3L139.3 0.1L138.6 0.2L137.9 0.2L137.2 0.2L136.5 0.4L135.8 0.3L135.1 0.2L134.4 0.2L133.7 0.2L133.0 5.5L132.3 6.0L131.6 0.3L130.9 0.2L130.2 0.2L129.5 0.2L128.8 0.3L128.1 0.2L127.4 0.3L126.7 0.1L126.0 0.3L125.3 0.2L124.6 0.4L123.9 0.3L123.2 0.4L122.5 0.1L121.8 0.3L121.1 0.3L120.4 0.3L119.7 0.3L119.0 0.4L118.3 0.3L117.6 0.4L116.9 0.3L116.2 0.2L115.5 0.1L114.8 0.4L114.1 0.3L113.4 0.4L112.7 0.2L112.0 0.3L111.3 0.3L110.6 0.2L109.9 0.4L109.2 0.3L108.5 0.3L107.8 0.3L107.1 0.2L106.4 0.2L105.7 0.2L105.0 0.3L104.3 0.2L103.6 0.2L102.9 0.4L102.2 0.2L101.5 0.3L100.8 0.2L100.1 0.2L99.4 0.2L98.7 0.4L98.0 0.2L97.3 0.2L96.6 0.3L95.9 0.3L95.2 0.3L94.5 0.3L93.8 0.2L93.1 0.3L92.4 0.3L91.7 0.2L91.0 0.2L90.3 0.3L89.6 0.2L88.9 0.2L88.2 0.1L87.5 0.2L86.8 0.3L86.1 0.2L85.4 0.1L84.7 0.3L84.0 0.3L83.3 0.3L82.6 0.2L81.9 0.3L81.2 0.2L80.5 0.3L79.8 0.1L79.1 0.3L78.4 0.2L77.7 0.3L77.0 0.2L76.3 0.4L75.6 0.1L74.9 0.2L74.2 0.2L73.5 0.3L72.8 0.2L72.1 0.2L71.4 0.4L70.7 0.2L70.0 0.3L69.3 1.1L68.6 0.8L67.9 1.0L67.2 0.8L66.5 0.9L65.8 1.1L65.1 1.4L64.4 1.0L63.7 1.0L63.0 0.9L62.3 1.2L61.6 0.9L60.9 0.8L60.2 1.6L59.5 1.0L58.8 1.2L58.1 1.2L57.4 1.3L56.7 1.0L56.0 0.8L55.3 0.8L54.6 0.8L53.9 0.7L53.2 8.3L52.5 9.6L51.8 0.4L51.1 0.3L50.4 0.3L49.7 0.3L49.0 0.2L48.3 0.3L47.6 0.2L46.9 0.3L46.2 1.4L45.5 1.6L44.8 0.9L44.1 1.1L43.4 1.5L42.7 1.4L42.0 0.8L41.3 1.1L40.6 1.4L39.9 1.6L39.2 0.6L38.5 1.6L37.8 1.2L37.1 1.1L36.4 1.4L35.7 1.3L35.0 0.8L34.3 5.5L33.6 8.5L32.9 7.7L32.2 8.1L31.5 8.6L30.8 5.6L30.1 0.3L29.4 2.9L28.7 1.9L28.0 1.9L27.3 1.3L26.6 2.0L25.9 2.0L25.2 2.0L24.5 1.4L23.8 2.1L23.1 1.8L22.4 2.2L21.7 1.9L21.0 1.9L20.3 0.3L19.6 7.6L18.9 7.6L18.2 9.0L17.5 8.3L16.8 10.4L16.1 9.0L15.4 7.7L14.7 5.3L14.0 0.4L13.3 2.8L12.6 2.4L11.9 2.8L11.2 2.1L10.5 1.7L9.8 1.9L9.1 3.4L8.4 2.4L7.7 2.6L7.0 2.3L6.3 1.7L5.6 5.7L4.9 7.6L4.2 7.1L3.5 7.4L2.8 6.8L2.1 5.9L1.4 4.8L0.7 0.4L0.0 0.2Z" fill="#1c1216"/><path transform="translate(0 133.95)" d="M0 0L0.0 -0.3L0.7 -0.3L1.4 -0.4L2.1 -4.7L2.8 -4.6L3.5 -0.3L4.2 -1.0L4.9 -1.2L5.6 -1.2L6.3 -1.5L7.0 -1.3L7.7 -0.7L8.4 -0.8L9.1 -0.8L9.8 -1.4L10.5 -1.5L11.2 -1.1L11.9 -0.8L12.6 -0.8L13.3 -1.0L14.0 -1.6L14.7 -0.9L15.4 -1.2L16.1 -1.6L16.8 -0.9L17.5 -1.5L18.2 -1.6L18.9 -0.9L19.6 -1.0L20.3 -1.1L21.0 -1.5L21.7 -0.9L22.4 -0.8L23.1 -1.1L23.8 -1.6L24.5 -0.8L25.2 -1.3L25.9 -1.4L26.6 -1.0L27.3 -1.4L28.0 -1.2L28.7 -1.6L29.4 -1.1L30.1 -1.6L30.8 -0.9L31.5 -0.7L32.2 -1.2L32.9 -1.1L33.6 -1.3L34.3 -1.0L35.0 -0.2L35.7 -0.3L36.4 -0.2L37.1 -0.3L37.8 -0.1L38.5 -0.3L39.2 -0.2L39.9 -0.4L40.6 -0.2L41.3 -0.2L42.0 -0.4L42.7 -0.1L43.4 -0.3L44.1 -0.3L44.8 -0.2L45.5 -0.2L46.2 -0.3L46.9 -0.1L47.6 -0.1L48.3 -0.2L49.0 -0.2L49.7 -0.2L50.4 -0.3L51.1 -0.2L51.8 -0.3L52.5 -9.1L53.2 -8.9L53.9 -0.3L54.6 -0.3L55.3 -0.1L56.0 -0.4L56.7 -0.3L57.4 -0.1L58.1 -0.3L58.8 -0.3L59.5 -0.4L60.2 -0.2L60.9 -0.3L61.6 -0.4L62.3 -0.4L63.0 -0.4L63.7 -0.3L64.4 -0.2L65.1 -0.3L65.8 -0.4L66.5 -0.3L67.2 -0.3L67.9 -0.3L68.6 -0.3L69.3 -0.2L70.0 -0.2L70.7 -0.2L71.4 -0.4L72.1 -0.1L72.8 -0.2L73.5 -0.2L74.2 -0.4L74.9 -0.3L75.6 -0.2L76.3 -0.2L77.0 -0.3L77.7 -0.3L78.4 -0.3L79.1 -0.3L79.8 -0.3L80.5 -0.1L81.2 -0.4L81.9 -0.4L82.6 -0.2L83.3 -0.2L84.0 -0.4L84.7 -0.4L85.4 -0.4L86.1 -0.4L86.8 -0.2L87.5 -0.4L88.2 -0.4L88.9 -0.2L89.6 -0.4L90.3 -0.4L91.0 -0.4L91.7 -0.4L92.4 -0.1L93.1 -0.2L93.8 -0.4L94.5 -0.2L95.2 -0.2L95.9 -0.4L96.6 -0.4L97.3 -0.2L98.0 -0.2L98.7 -0.3L99.4 -0.4L100.1 -0.3L100.8 -0.2L101.5 -0.2L102.2 -0.2L102.9 -0.3L103.6 -0.3L104.3 -0.2L105.0 -0.3L105.7 -0.3L106.4 -0.3L107.1 -0.3L107.8 -0.2L108.5 -0.1L109.2 -0.3L109.9 -0.3L110.6 -0.4L111.3 -0.4L112.0 -0.3L112.7 -0.2L113.4 -0.4L114.1 -0.2L114.8 -0.4L115.5 -0.4L116.2 -0.1L116.9 -0.1L117.6 -0.1L118.3 -0.3L119.0 -0.3L119.7 -0.3L120.4 -0.2L121.1 -0.3L121.8 -0.1L122.5 -0.2L123.2 -0.3L123.9 -0.2L124.6 -0.2L125.3 -0.3L126.0 -0.4L126.7 -0.4L127.4 -0.4L128.1 -0.3L128.8 -0.1L129.5 -0.2L130.2 -0.3L130.9 -0.3L131.6 -0.4L132.3 -5.7L133.0 -5.8L133.7 -0.1L134.4 -0.3L135.1 -0.4L135.8 -0.4L136.5 -0.4L137.2 -0.4L137.9 -0.2L138.6 -0.3L139.3 -0.3L140.0 -0.3L140.7 -0.3L141.4 -0.3L142.1 -0.2L142.8 -0.3L143.5 -0.3L144.2 -0.4L144.9 -0.4L145.6 -0.4L146.3 -0.2L147.0 -0.3L147.7 -0.3L148.4 -0.4L149.1 -0.4L149.8 -0.2L150.5 -0.1L151.2 -1.6L151.9 -1.2L152.6 -1.1L153.3 -1.3L154.0 -1.0L154.7 -1.1L155.4 -1.2L156.1 -1.6L156.8 -1.4L157.5 -0.2L158.2 -0.3L158.9 -0.3L159.6 -0.1L160.3 -0.3L161.0 -0.3L161.7 -0.2L162.4 -0.3L163.1 -0.2L163.8 -0.2L164.5 -0.2L165.2 -0.4L165.9 -0.3L166.6 -0.3L167.3 -6.8L168.0 -6.4L168.7 -0.3L169.4 -0.2L170.1 -0.1L170.8 -0.4L171.5 -0.1L172.2 -0.2L172.9 -0.4L173.6 -0.2L174.3 -0.4L175.0 -0.1L175.7 -0.2L176.4 -0.3L177.1 -0.3L177.8 -0.4L178.5 -0.4L179.2 -0.4L179.9 -0.2L180.6 -0.4L181.3 -0.1L182.0 -0.3L182.7 -0.2L183.4 -0.1L184.1 -0.2L184.8 -0.4L185.5 -0.4L186.2 -0.2L186.9 -0.4L187.6 -0.3L188.3 -0.1L189.0 -0.3L189.7 -0.2L190.4 -0.2L191.1 -0.3L191.8 -0.2L192.5 -0.2L193.2 -0.1L193.9 -0.2L194.6 -0.2L195.3 -0.2L196.0 -0.1L196.7 -0.2L197.4 -0.1L198.1 -0.4L198.8 -0.2L199.5 -0.2L200.2 -0.1L200.9 -0.4L201.6 -0.2L202.3 -0.1L203.0 -0.2L203.7 -0.4L204.4 -0.4L205.1 -0.3L205.8 -0.3L206.5 -0.1L207.2 -0.4L207.9 -0.3L208.6 -0.2L209.3 -0.4L210.0 -0.2L210.7 -0.3L211.4 -0.2L212.1 -0.3L212.8 -0.2L213.5 -0.3L214.2 -0.2L214.9 -0.1L215.6 -0.2L216.3 -0.4L217.0 -0.3L217.7 -0.3L218.4 -0.3L219.1 -0.2L219.8 -0.2L220.5 -0.2L221.2 -0.3L221.9 -0.3L222.6 -0.3L223.3 -0.3L224.0 -0.2L224.7 -0.4L225.4 -0.3L226.1 -0.4L226.8 -0.2L227.5 -0.3L228.2 -0.3L228.9 -0.3L229.6 -0.3L230.3 -0.2L231.0 -0.4L231.7 -0.2L232.4 -0.3L233.1 -0.2L233.8 -0.2L234.5 -0.4L235.2 -0.1L235.9 -0.2L236.6 -0.3L237.3 -0.3L238.0 -0.3L238.7 -0.3L239.4 -0.3L240.1 -0.3L240.8 -0.2L241.5 -0.3L242.2 -0.2L242.9 -0.1L243.6 -0.3L244.3 -0.4L245.0 -0.3L245.7 -0.3L246.4 -0.3L247.1 -0.1L247.8 -0.3L248.5 -0.4L249.2 -0.3L249.9 -0.2L250.6 -0.4L251.3 -0.3L252.0 -0.4L252.7 -0.4L253.4 -0.3L254.1 -0.3L254.8 -0.3L255.5 -0.2L256.2 -0.4L256.9 -0.2L257.6 -0.4L258.3 -0.2L259.0 -0.3L259.7 -0.3L260.4 -0.2L261.1 -0.3L261.8 -0.1L262.5 -0.4L263.2 -0.2L263.9 -0.4L264.6 -0.4L265.3 -0.4L266.0 -0.3L266.7 -0.2L267.4 -0.3L268.1 -0.1L268.8 -0.3L269.5 -0.4L270.2 -0.2L270.9 -0.3L271.6 -0.1L272.3 -0.3L273.0 -0.3L273.7 -0.1L274.4 -0.3L275.1 -0.4L275.8 -0.2L276.5 -0.4L277.2 -0.2L277.9 -0.1L278.6 -0.1L279.3 -0.3L280.0 -0.2L280.7 -0.4L281.4 -0.3L282.1 -0.1L282.8 -0.4L283.5 -0.2L284.2 -0.2L284.9 -0.1L285.6 -0.2L286.3 -0.3L287.0 -0.3L287.7 -0.3L288.4 -0.1L289.1 -0.1L289.8 -0.4L290.5 -0.2L291.2 -0.3L291.9 -0.4L292.6 -0.3L293.3 -0.3L294.0 -0.2L294.7 -0.2L295.4 -0.3L296.1 -0.4L296.8 -0.4L297.5 -0.2L298.2 -0.3L298.9 -0.2L299.6 -0.2L300.3 -0.2L301.0 -0.4L301.7 -0.2L302.4 -0.3L303.1 -0.1L303.8 -0.4L304.5 -0.1L305.2 -0.4L305.9 -0.2L306.6 -0.2L307.3 -0.1L308.0 -0.2L308.7 -0.4L309.4 -0.2L310.1 -0.2L310.8 -0.3L311.5 -0.2L312.2 -0.3L312.9 -0.4L313.6 -0.4L314.3 -0.1L315.0 -0.4L315.7 -0.4L316.4 -0.4L317.1 -0.3L317.8 -0.2L318.5 -0.3L319.2 -0.3L319.9 -2.5L320.6 -2.4L321.3 -2.6L322.0 -0.4L322.7 -0.4L323.4 -0.2L324.1 -0.2L324.8 -0.3L325.5 -0.3L326.2 -0.1L326.9 -0.2L327.6 -0.4L328.3 -0.2L329.0 -0.4L329.7 -0.4L330.4 -0.3L331.1 -0.4L331.8 -0.4L332.5 -0.1L333.2 -0.3L333.9 -0.4L334.6 -0.2L335.3 -0.2L336.0 -0.2L336.7 -0.4L337.4 -0.3L338.1 -0.3L338.8 -0.3L339.5 -0.4L340.2 -0.3L340.9 -0.3L341.6 -0.3L342.3 -0.2L343.0 -0.4L343.7 -0.3L344.4 -0.3L345.1 -0.1L345.8 -0.3L346.5 -0.1L347.2 -0.3L347.9 -5.0L348.6 -4.9L349.3 -0.3L350.0 -0.2L350.7 -0.2L351.4 -0.3L352.1 -0.2L352.8 -0.4L353.5 -0.2L354.2 -0.2L354.9 -0.4L355.6 -0.2L356.3 -0.2L357.0 -0.1L357.7 -0.2L358.4 -0.4L359.1 -0.3L359.8 -0.3L360.5 -0.3L361.2 -0.1L361.9 -0.2L362.6 -0.4L363.3 -0.3L364.0 -6.4L364.7 -6.0L365.4 -0.4L366.1 -0.4L366.8 -0.2L367.5 -0.4L368.2 -0.2L368.9 -0.2L369.6 -0.3L370.3 -0.3L371.0 -0.3L371.7 -0.3L372.4 -1.5L373.1 -2.1L373.8 -1.5L374.5 -1.8L375.2 -0.2L375.9 -0.3L376.6 -0.4L377.3 -0.2L378.0 -0.4L378.7 -0.4L379.4 -0.3L380.1 -0.2L380.8 -0.2L381.5 -4.4L382.2 -4.0L382.9 -0.4L383.6 -0.2L384.3 -0.3L385.0 -0.3L385.7 -0.3L386.4 -0.2L387.1 -1.4L387.8 -2.0L388.5 -1.9L389.2 -1.3L389.9 -1.8L390.6 -1.5L391.3 -1.1L392.0 -1.6L392.7 -1.0L393.4 -1.1L394.1 -1.9L394.8 -1.3L395.5 -0.4L396.2 -0.3L396.2 0.3L395.5 0.4L394.8 1.2L394.1 2.1L393.4 0.9L392.7 1.0L392.0 1.6L391.3 1.2L390.6 1.5L389.9 1.5L389.2 1.1L388.5 1.9L387.8 1.7L387.1 1.3L386.4 0.2L385.7 0.2L385.0 0.3L384.3 0.3L383.6 0.2L382.9 0.4L382.2 3.6L381.5 4.5L380.8 0.1L380.1 0.2L379.4 0.3L378.7 0.3L378.0 0.3L377.3 0.2L376.6 0.4L375.9 0.3L375.2 0.2L374.5 1.6L373.8 1.5L373.1 2.2L372.4 1.4L371.7 0.2L371.0 0.2L370.3 0.3L369.6 0.2L368.9 0.2L368.2 0.2L367.5 0.4L366.8 0.2L366.1 0.4L365.4 0.3L364.7 5.4L364.0 5.2L363.3 0.3L362.6 0.4L361.9 0.2L361.2 0.1L360.5 0.3L359.8 0.2L359.1 0.2L358.4 0.4L357.7 0.2L357.0 0.1L356.3 0.2L355.6 0.2L354.9 0.4L354.2 0.2L353.5 0.3L352.8 0.4L352.1 0.1L351.4 0.3L350.7 0.2L350.0 0.1L349.3 0.3L348.6 4.6L347.9 4.6L347.2 0.3L346.5 0.1L345.8 0.3L345.1 0.2L344.4 0.2L343.7 0.3L343.0 0.4L342.3 0.2L341.6 0.2L340.9 0.3L340.2 0.3L339.5 0.4L338.8 0.3L338.1 0.2L337.4 0.2L336.7 0.3L336.0 0.1L335.3 0.2L334.6 0.2L333.9 0.3L333.2 0.3L332.5 0.1L331.8 0.3L331.1 0.3L330.4 0.2L329.7 0.3L329.0 0.3L328.3 0.3L327.6 0.4L326.9 0.2L326.2 0.1L325.5 0.2L324.8 0.3L324.1 0.2L323.4 0.2L322.7 0.4L322.0 0.4L321.3 2.5L320.6 2.6L319.9 2.2L319.2 0.3L318.5 0.3L317.8 0.2L317.1 0.2L316.4 0.3L315.7 0.4L315.0 0.3L314.3 0.1L313.6 0.3L312.9 0.4L312.2 0.4L311.5 0.2L310.8 0.3L310.1 0.2L309.4 0.2L308.7 0.4L308.0 0.2L307.3 0.1L306.6 0.2L305.9 0.2L305.2 0.4L304.5 0.1L303.8 0.3L303.1 0.1L302.4 0.2L301.7 0.2L301.0 0.4L300.3 0.2L299.6 0.2L298.9 0.2L298.2 0.3L297.5 0.2L296.8 0.3L296.1 0.4L295.4 0.3L294.7 0.2L294.0 0.2L293.3 0.3L292.6 0.3L291.9 0.4L291.2 0.3L290.5 0.2L289.8 0.3L289.1 0.1L288.4 0.1L287.7 0.3L287.0 0.3L286.3 0.3L285.6 0.2L284.9 0.1L284.2 0.1L283.5 0.2L282.8 0.3L282.1 0.1L281.4 0.3L280.7 0.3L280.0 0.1L279.3 0.4L278.6 0.1L277.9 0.1L277.2 0.2L276.5 0.3L275.8 0.1L275.1 0.4L274.4 0.3L273.7 0.1L273.0 0.3L272.3 0.3L271.6 0.1L270.9 0.2L270.2 0.2L269.5 0.4L268.8 0.4L268.1 0.1L267.4 0.3L266.7 0.2L266.0 0.3L265.3 0.3L264.6 0.4L263.9 0.3L263.2 0.1L262.5 0.4L261.8 0.1L261.1 0.3L260.4 0.2L259.7 0.3L259.0 0.2L258.3 0.2L257.6 0.4L256.9 0.2L256.2 0.4L255.5 0.2L254.8 0.3L254.1 0.3L253.4 0.3L252.7 0.4L252.0 0.3L251.3 0.3L250.6 0.4L249.9 0.2L249.2 0.3L248.5 0.4L247.8 0.3L247.1 0.1L246.4 0.3L245.7 0.4L245.0 0.3L244.3 0.4L243.6 0.2L242.9 0.1L242.2 0.2L241.5 0.3L240.8 0.1L240.1 0.3L239.4 0.3L238.7 0.4L238.0 0.3L237.3 0.3L236.6 0.3L235.9 0.2L235.2 0.1L234.5 0.4L233.8 0.3L233.1 0.2L232.4 0.3L231.7 0.2L231.0 0.3L230.3 0.2L229.6 0.3L228.9 0.3L228.2 0.4L227.5 0.3L226.8 0.2L226.1 0.4L225.4 0.3L224.7 0.4L224.0 0.2L223.3 0.3L222.6 0.2L221.9 0.4L221.2 0.3L220.5 0.2L219.8 0.1L219.1 0.2L218.4 0.3L217.7 0.2L217.0 0.2L216.3 0.3L215.6 0.1L214.9 0.1L214.2 0.2L213.5 0.2L212.8 0.2L212.1 0.3L211.4 0.2L210.7 0.2L210.0 0.1L209.3 0.3L208.6 0.2L207.9 0.3L207.2 0.3L206.5 0.1L205.8 0.2L205.1 0.2L204.4 0.3L203.7 0.4L203.0 0.3L202.3 0.1L201.6 0.1L200.9 0.3L200.2 0.1L199.5 0.2L198.8 0.2L198.1 0.4L197.4 0.1L196.7 0.3L196.0 0.1L195.3 0.1L194.6 0.2L193.9 0.2L193.2 0.1L192.5 0.2L191.8 0.2L191.1 0.4L190.4 0.2L189.7 0.2L189.0 0.3L188.3 0.1L187.6 0.4L186.9 0.3L186.2 0.2L185.5 0.4L184.8 0.4L184.1 0.2L183.4 0.1L182.7 0.2L182.0 0.2L181.3 0.1L180.6 0.3L179.9 0.2L179.2 0.3L178.5 0.4L177.8 0.4L177.1 0.3L176.4 0.2L175.7 0.2L175.0 0.1L174.3 0.4L173.6 0.2L172.9 0.3L172.2 0.2L171.5 0.1L170.8 0.4L170.1 0.1L169.4 0.2L168.7 0.2L168.0 6.2L167.3 5.8L166.6 0.3L165.9 0.3L165.2 0.4L164.5 0.2L163.8 0.2L163.1 0.2L162.4 0.2L161.7 0.2L161.0 0.3L160.3 0.2L159.6 0.2L158.9 0.3L158.2 0.2L157.5 0.1L156.8 1.2L156.1 1.4L155.4 1.1L154.7 1.2L154.0 1.0L153.3 1.2L152.6 1.1L151.9 1.3L151.2 1.7L150.5 0.1L149.8 0.2L149.1 0.4L148.4 0.4L147.7 0.3L147.0 0.3L146.3 0.1L145.6 0.4L144.9 0.4L144.2 0.4L143.5 0.3L142.8 0.3L142.1 0.2L141.4 0.3L140.7 0.3L140.0 0.2L139.3 0.3L138.6 0.3L137.9 0.2L137.2 0.3L136.5 0.3L135.8 0.3L135.1 0.4L134.4 0.3L133.7 0.1L133.0 5.4L132.3 5.7L131.6 0.4L130.9 0.3L130.2 0.3L129.5 0.1L128.8 0.1L128.1 0.3L127.4 0.4L126.7 0.3L126.0 0.4L125.3 0.3L124.6 0.1L123.9 0.2L123.2 0.3L122.5 0.2L121.8 0.1L121.1 0.3L120.4 0.2L119.7 0.3L119.0 0.3L118.3 0.3L117.6 0.1L116.9 0.1L116.2 0.1L115.5 0.4L114.8 0.4L114.1 0.2L113.4 0.3L112.7 0.2L112.0 0.3L111.3 0.4L110.6 0.3L109.9 0.3L109.2 0.3L108.5 0.1L107.8 0.3L107.1 0.3L106.4 0.3L105.7 0.3L105.0 0.4L104.3 0.2L103.6 0.3L102.9 0.3L102.2 0.2L101.5 0.2L100.8 0.2L100.1 0.3L99.4 0.4L98.7 0.3L98.0 0.2L97.3 0.2L96.6 0.4L95.9 0.4L95.2 0.2L94.5 0.2L93.8 0.3L93.1 0.2L92.4 0.2L91.7 0.3L91.0 0.3L90.3 0.3L89.6 0.3L88.9 0.2L88.2 0.4L87.5 0.3L86.8 0.1L86.1 0.3L85.4 0.4L84.7 0.4L84.0 0.4L83.3 0.2L82.6 0.2L81.9 0.4L81.2 0.4L80.5 0.1L79.8 0.3L79.1 0.3L78.4 0.3L77.7 0.3L77.0 0.3L76.3 0.1L75.6 0.2L74.9 0.3L74.2 0.4L73.5 0.2L72.8 0.2L72.1 0.1L71.4 0.4L70.7 0.2L70.0 0.2L69.3 0.2L68.6 0.3L67.9 0.3L67.2 0.4L66.5 0.2L65.8 0.4L65.1 0.4L64.4 0.2L63.7 0.2L63.0 0.3L62.3 0.4L61.6 0.4L60.9 0.3L60.2 0.2L59.5 0.4L58.8 0.2L58.1 0.3L57.4 0.1L56.7 0.3L56.0 0.4L55.3 0.2L54.6 0.3L53.9 0.3L53.2 8.8L52.5 7.9L51.8 0.3L51.1 0.3L50.4 0.3L49.7 0.2L49.0 0.2L48.3 0.2L47.6 0.1L46.9 0.1L46.2 0.3L45.5 0.2L44.8 0.2L44.1 0.2L43.4 0.2L42.7 0.2L42.0 0.4L41.3 0.2L40.6 0.2L39.9 0.3L39.2 0.2L38.5 0.2L37.8 0.1L37.1 0.3L36.4 0.2L35.7 0.3L35.0 0.1L34.3 0.9L33.6 1.3L32.9 0.9L32.2 1.0L31.5 0.7L30.8 0.9L30.1 1.6L29.4 0.9L28.7 1.3L28.0 1.0L27.3 1.4L26.6 1.0L25.9 1.2L25.2 1.1L24.5 0.8L23.8 1.3L23.1 1.1L22.4 0.9L21.7 0.9L21.0 1.3L20.3 1.1L19.6 1.1L18.9 0.9L18.2 1.6L17.5 1.5L16.8 1.0L16.1 1.7L15.4 1.2L14.7 0.9L14.0 1.3L13.3 0.9L12.6 0.8L11.9 0.8L11.2 1.1L10.5 1.3L9.8 1.2L9.1 0.8L8.4 0.8L7.7 0.7L7.0 1.2L6.3 1.4L5.6 1.0L4.9 1.0L4.2 0.9L3.5 0.2L2.8 5.0L2.1 3.9L1.4 0.4L0.7 0.3L0.0 0.4Z" fill="#1c1216"/></svg><span style="left:1.9px;top:2.60px;text-shadow:0 0 .7px rgba(255,255,255,.6),0 0 1.6px #30081c;font-size:9.2px;font-weight:normal;transform-origin:0 0;transform:scaleX(0.8342)">0604 MR1058==2101___1_____t2==_0604A015AEEE731.mxf 48 kHz/24 Bit</span><div class="a" style="left:0;top:23.33px;width:100%;height:1.1px;background:#c2146f"></div><span style="left:1.9px;top:27.03px;text-shadow:0 0 .7px rgba(255,255,255,.6),0 0 1.6px #30081c;font-size:9.2px;font-weight:normal;transform-origin:0 0;transform:scaleX(0.8342)">0604 MR1058==2101___1_____t2==_0604A025AEEE732.mxf 48 kHz/24 Bit</span><div class="a" style="left:0;top:47.76px;width:100%;height:1.1px;background:#c2146f"></div><span style="left:1.9px;top:51.46px;text-shadow:0 0 .7px rgba(255,255,255,.6),0 0 1.6px #30081c;font-size:9.2px;font-weight:normal;transform-origin:0 0;transform:scaleX(0.8342)">0604 MR1058==2101___1_____t2==_0604A035AEEE733.mxf 48 kHz/24 Bit</span><div class="a" style="left:0;top:72.19px;width:100%;height:1.1px;background:#c2146f"></div><span style="left:1.9px;top:75.89px;text-shadow:0 0 .7px rgba(255,255,255,.6),0 0 1.6px #30081c;font-size:9.2px;font-weight:normal;transform-origin:0 0;transform:scaleX(0.8342)">0604 MR1058==2101___1_____t2==_0604A045AEEE734.mxf 48 kHz/24 Bit</span><div class="a" style="left:0;top:96.62px;width:100%;height:1.1px;background:#c2146f"></div><span style="left:1.9px;top:100.32px;text-shadow:0 0 .7px rgba(255,255,255,.6),0 0 1.6px #30081c;font-size:9.2px;font-weight:normal;transform-origin:0 0;transform:scaleX(0.8342)">0604 MR1058==2101___1_____t2==_0604A055AEEE735.mxf 48 kHz/24 Bit</span><div class="a" style="left:0;top:121.05px;width:100%;height:1.1px;background:#c2146f"></div><span style="left:1.9px;top:124.75px;text-shadow:0 0 .7px rgba(255,255,255,.6),0 0 1.6px #30081c;font-size:9.2px;font-weight:normal;transform-origin:0 0;transform:scaleX(0.8342)">0604 MR1058==2101___1_____t2==_0604A065AEEE736.mxf 48 kHz/24 Bit</span></div>
<div class="clip k" style="left:917.80px;top:82.70px;width:76.70px;height:146.08px"><svg class="a" style="left:0;top:0" width="76.7" height="146.08" viewBox="0 0 76.7 146.08"><path transform="translate(0 11.80)" d="M0 0L0.0 -0.2L0.7 -0.4L1.4 -1.6L2.1 -1.9L2.8 -2.0L3.5 -1.4L4.2 -3.9L4.9 -4.4L5.6 -3.9L6.3 -2.3L7.0 -1.2L7.7 -2.1L8.4 -1.9L9.1 -1.6L9.8 -1.8L10.5 -2.2L11.2 -1.3L11.9 -1.5L12.6 -1.1L13.3 -2.4L14.0 -1.4L14.7 -1.9L15.4 -1.3L16.1 -1.6L16.8 -6.8L17.5 -8.8L18.2 -7.1L18.9 -0.3L19.6 -1.6L20.3 -2.5L21.0 -2.2L21.7 -2.9L22.4 -7.1L23.1 -9.3L23.8 -8.3L24.5 -7.0L25.2 -1.0L25.9 -0.8L26.6 -1.7L27.3 -1.6L28.0 -1.2L28.7 -0.9L29.4 -1.2L30.1 -1.5L30.8 -1.8L31.5 -1.7L32.2 -1.0L32.9 -1.1L33.6 -1.6L34.3 -1.5L35.0 -1.6L35.7 -1.4L36.4 -1.2L37.1 -8.2L37.8 -0.9L38.5 -0.9L39.2 -0.8L39.9 -0.8L40.6 -1.7L41.3 -1.3L42.0 -1.6L42.7 -6.3L43.4 -6.1L44.1 -0.3L44.8 -0.2L45.5 -0.2L46.2 -0.3L46.9 -0.3L47.6 -0.2L48.3 -0.3L49.0 -0.2L49.7 -0.3L50.4 -0.2L51.1 -0.3L51.8 -0.3L52.5 -0.1L53.2 -0.2L53.9 -0.3L54.6 -0.2L55.3 -0.4L56.0 -10.9L56.7 -10.1L57.4 -0.3L58.1 -0.1L58.8 -0.6L59.5 -0.9L60.2 -0.9L60.9 -0.8L61.6 -0.5L62.3 -0.9L63.0 -0.9L63.7 -0.6L64.4 -0.7L65.1 -0.5L65.8 -1.0L66.5 -0.7L67.2 -0.7L67.9 -0.8L68.6 -0.8L69.3 -0.6L70.0 -0.8L70.7 -0.9L71.4 -0.7L72.1 -0.9L72.8 -0.5L73.5 -0.5L74.2 -0.9L74.9 -0.5L75.6 -0.5L76.3 -0.9L76.3 0.7L75.6 0.5L74.9 0.4L74.2 0.7L73.5 0.6L72.8 0.4L72.1 0.9L71.4 0.8L70.7 1.0L70.0 0.7L69.3 0.6L68.6 0.7L67.9 0.7L67.2 0.7L66.5 0.7L65.8 1.0L65.1 0.5L64.4 0.6L63.7 0.5L63.0 0.8L62.3 0.9L61.6 0.4L60.9 0.7L60.2 1.0L59.5 0.8L58.8 0.5L58.1 0.1L57.4 0.2L56.7 8.8L56.0 10.4L55.3 0.3L54.6 0.2L53.9 0.4L53.2 0.2L52.5 0.1L51.8 0.3L51.1 0.4L50.4 0.2L49.7 0.3L49.0 0.2L48.3 0.2L47.6 0.1L46.9 0.3L46.2 0.2L45.5 0.1L44.8 0.2L44.1 0.2L43.4 6.2L42.7 5.8L42.0 1.4L41.3 1.4L40.6 1.8L39.9 0.7L39.2 0.7L38.5 0.9L37.8 0.8L37.1 8.9L36.4 1.1L35.7 1.2L35.0 1.3L34.3 1.4L33.6 1.6L32.9 0.9L32.2 1.0L31.5 1.6L30.8 1.8L30.1 1.6L29.4 1.2L28.7 0.8L28.0 1.0L27.3 1.6L26.6 1.6L25.9 0.8L25.2 0.9L24.5 6.0L23.8 6.9L23.1 9.2L22.4 7.7L21.7 3.2L21.0 1.9L20.3 2.1L19.6 1.3L18.9 0.3L18.2 7.4L17.5 8.0L16.8 6.2L16.1 1.3L15.4 1.3L14.7 1.6L14.0 1.5L13.3 1.9L12.6 1.2L11.9 1.4L11.2 1.2L10.5 2.1L9.8 1.6L9.1 1.8L8.4 1.9L7.7 2.1L7.0 1.3L6.3 2.3L5.6 4.1L4.9 3.6L4.2 3.4L3.5 1.2L2.8 1.9L2.1 1.7L1.4 1.7L0.7 0.3L0.0 0.1Z" fill="#1c1216"/><path transform="translate(0 36.23)" d="M0 0L0.0 -0.2L0.7 -0.2L1.4 -0.5L2.1 -0.5L2.8 -0.6L3.5 -0.7L4.2 -0.4L4.9 -0.7L5.6 -0.6L6.3 -0.6L7.0 -0.7L7.7 -0.5L8.4 -0.6L9.1 -0.4L9.8 -0.5L10.5 -0.4L11.2 -0.5L11.9 -0.7L12.6 -0.4L13.3 -0.5L14.0 -0.5L14.7 -0.6L15.4 -0.4L16.1 -0.5L16.8 -0.6L17.5 -0.5L18.2 -0.4L18.9 -0.4L19.6 -0.4L20.3 -0.4L21.0 -0.6L21.7 -0.6L22.4 -0.4L23.1 -0.3L23.8 -0.4L24.5 -0.5L25.2 -0.5L25.9 -0.5L26.6 -0.4L27.3 -0.5L28.0 -0.6L28.7 -0.7L29.4 -0.7L30.1 -0.6L30.8 -0.4L31.5 -0.7L32.2 -0.5L32.9 -0.5L33.6 -0.7L34.3 -0.4L35.0 -0.5L35.7 -0.7L36.4 -0.6L37.1 -0.6L37.8 -0.6L38.5 -0.4L39.2 -0.7L39.9 -0.6L40.6 -0.6L41.3 -0.7L42.0 -0.5L42.7 -0.6L43.4 -0.4L44.1 -0.5L44.8 -0.4L45.5 -0.6L46.2 -0.5L46.9 -0.5L47.6 -0.3L48.3 -0.5L49.0 -0.6L49.7 -0.5L50.4 -0.5L51.1 -0.4L51.8 -0.3L52.5 -0.5L53.2 -0.6L53.9 -0.4L54.6 -0.5L55.3 -0.4L56.0 -9.6L56.7 -8.6L57.4 -0.7L58.1 -0.5L58.8 -0.4L59.5 -0.5L60.2 -0.3L60.9 -0.7L61.6 -0.5L62.3 -0.6L63.0 -0.6L63.7 -0.4L64.4 -0.5L65.1 -0.5L65.8 -0.4L66.5 -0.6L67.2 -0.4L67.9 -0.4L68.6 -0.6L69.3 -0.5L70.0 -0.6L70.7 -0.6L71.4 -0.6L72.1 -0.6L72.8 -0.4L73.5 -0.3L74.2 -0.3L74.9 -0.4L75.6 -0.6L76.3 -0.6L76.3 0.5L75.6 0.5L74.9 0.3L74.2 0.4L73.5 0.3L72.8 0.4L72.1 0.5L71.4 0.6L70.7 0.5L70.0 0.6L69.3 0.4L68.6 0.6L67.9 0.4L67.2 0.4L66.5 0.6L65.8 0.4L65.1 0.4L64.4 0.6L63.7 0.3L63.0 0.6L62.3 0.5L61.6 0.4L60.9 0.6L60.2 0.3L59.5 0.5L58.8 0.3L58.1 0.4L57.4 0.7L56.7 8.4L56.0 9.5L55.3 0.4L54.6 0.4L53.9 0.4L53.2 0.6L52.5 0.5L51.8 0.3L51.1 0.4L50.4 0.5L49.7 0.6L49.0 0.5L48.3 0.4L47.6 0.3L46.9 0.5L46.2 0.4L45.5 0.5L44.8 0.4L44.1 0.5L43.4 0.3L42.7 0.6L42.0 0.5L41.3 0.7L40.6 0.6L39.9 0.5L39.2 0.6L38.5 0.4L37.8 0.5L37.1 0.6L36.4 0.7L35.7 0.7L35.0 0.5L34.3 0.4L33.6 0.6L32.9 0.5L32.2 0.5L31.5 0.7L30.8 0.4L30.1 0.5L29.4 0.6L28.7 0.6L28.0 0.5L27.3 0.5L26.6 0.4L25.9 0.5L25.2 0.5L24.5 0.6L23.8 0.4L23.1 0.4L22.4 0.4L21.7 0.5L21.0 0.6L20.3 0.4L19.6 0.4L18.9 0.4L18.2 0.4L17.5 0.5L16.8 0.5L16.1 0.5L15.4 0.4L14.7 0.5L14.0 0.5L13.3 0.4L12.6 0.4L11.9 0.7L11.2 0.5L10.5 0.3L9.8 0.4L9.1 0.4L8.4 0.5L7.7 0.4L7.0 0.7L6.3 0.7L5.6 0.6L4.9 0.6L4.2 0.4L3.5 0.7L2.8 0.5L2.1 0.5L1.4 0.4L0.7 0.2L0.0 0.3Z" fill="#1c1216"/><path transform="translate(0 60.66)" d="M0 0L0.0 -0.4L0.7 -0.2L1.4 -2.9L2.1 -2.8L2.8 -3.7L3.5 -5.0L4.2 -4.8L4.9 -5.1L5.6 -4.0L6.3 -1.8L7.0 -3.0L7.7 -2.2L8.4 -2.2L9.1 -1.9L9.8 -2.7L10.5 -2.1L11.2 -1.6L11.9 -1.7L12.6 -4.5L13.3 -2.6L14.0 -4.0L14.7 -3.1L15.4 -2.8L16.1 -1.9L16.8 -1.5L17.5 -2.5L18.2 -1.6L18.9 -2.9L19.6 -6.3L20.3 -7.6L21.0 -8.5L21.7 -8.9L22.4 -7.3L23.1 -7.2L23.8 -5.2L24.5 -2.4L25.2 -1.7L25.9 -2.2L26.6 -1.4L27.3 -1.1L28.0 -0.9L28.7 -1.2L29.4 -0.8L30.1 -1.1L30.8 -1.0L31.5 -0.8L32.2 -1.2L32.9 -1.6L33.6 -1.1L34.3 -3.1L35.0 -3.4L35.7 -3.5L36.4 -0.8L37.1 -1.4L37.8 -1.4L38.5 -1.3L39.2 -1.2L39.9 -1.3L40.6 -1.4L41.3 -1.1L42.0 -0.8L42.7 -1.3L43.4 -0.8L44.1 -1.4L44.8 -1.1L45.5 -0.8L46.2 -0.8L46.9 -1.3L47.6 -1.4L48.3 -1.4L49.0 -0.9L49.7 -1.5L50.4 -0.8L51.1 -0.8L51.8 -1.0L52.5 -1.5L53.2 -1.4L53.9 -1.1L54.6 -0.2L55.3 -0.3L56.0 -9.4L56.7 -9.9L57.4 -0.1L58.1 -0.3L58.8 -1.5L59.5 -1.1L60.2 -1.4L60.9 -0.9L61.6 -1.4L62.3 -1.2L63.0 -1.3L63.7 -1.3L64.4 -0.7L65.1 -1.2L65.8 -0.9L66.5 -0.8L67.2 -1.0L67.9 -1.3L68.6 -1.0L69.3 -6.5L70.0 -6.8L70.7 -8.4L71.4 -7.7L72.1 -5.5L72.8 -1.0L73.5 -1.3L74.2 -1.1L74.9 -1.4L75.6 -1.1L76.3 -1.3L76.3 1.4L75.6 0.9L74.9 1.3L74.2 1.1L73.5 1.3L72.8 0.8L72.1 5.1L71.4 6.9L70.7 8.2L70.0 7.3L69.3 5.3L68.6 1.0L67.9 1.2L67.2 1.0L66.5 0.7L65.8 0.9L65.1 1.0L64.4 0.7L63.7 1.1L63.0 1.4L62.3 1.0L61.6 1.2L60.9 0.8L60.2 1.4L59.5 1.1L58.8 1.6L58.1 0.3L57.4 0.1L56.7 9.0L56.0 9.0L55.3 0.3L54.6 0.3L53.9 1.1L53.2 1.3L52.5 1.2L51.8 0.9L51.1 0.7L50.4 0.9L49.7 1.3L49.0 0.9L48.3 1.2L47.6 1.2L46.9 1.2L46.2 0.7L45.5 0.8L44.8 1.1L44.1 1.4L43.4 0.7L42.7 1.3L42.0 0.7L41.3 1.1L40.6 1.6L39.9 1.1L39.2 1.2L38.5 1.4L37.8 1.2L37.1 1.1L36.4 0.8L35.7 3.3L35.0 3.4L34.3 3.2L33.6 1.0L32.9 1.6L32.2 1.2L31.5 0.7L30.8 0.8L30.1 1.1L29.4 0.8L28.7 1.3L28.0 0.9L27.3 1.1L26.6 1.3L25.9 2.2L25.2 1.4L24.5 2.4L23.8 5.0L23.1 7.0L22.4 7.7L21.7 7.4L21.0 8.1L20.3 8.3L19.6 5.5L18.9 2.8L18.2 1.4L17.5 2.6L16.8 1.4L16.1 1.6L15.4 2.3L14.7 2.8L14.0 3.7L13.3 2.7L12.6 4.9L11.9 1.7L11.2 1.4L10.5 1.9L9.8 2.9L9.1 1.5L8.4 2.1L7.7 1.9L7.0 2.9L6.3 1.6L5.6 3.2L4.9 4.4L4.2 4.6L3.5 4.6L2.8 3.9L2.1 2.5L1.4 2.9L0.7 0.2L0.0 0.3Z" fill="#1c1216"/><path transform="translate(0 85.09)" d="M0 0L0.0 -0.3L0.7 -0.2L1.4 -1.8L2.1 -1.8L2.8 -3.4L3.5 -3.0L4.2 -5.0L4.9 -4.2L5.6 -2.8L6.3 -2.1L7.0 -2.9L7.7 -1.7L8.4 -1.7L9.1 -2.6L9.8 -2.2L10.5 -2.4L11.2 -2.6L11.9 -2.8L12.6 -2.7L13.3 -3.9L14.0 -4.3L14.7 -3.4L15.4 -2.1L16.1 -1.8L16.8 -2.6L17.5 -2.1L18.2 -2.9L18.9 -2.1L19.6 -5.7L20.3 -6.8L21.0 -8.7L21.7 -8.0L22.4 -8.5L23.1 -6.8L23.8 -6.2L24.5 -1.4L25.2 -1.9L25.9 -1.5L26.6 -1.4L27.3 -1.1L28.0 -1.6L28.7 -1.3L29.4 -1.2L30.1 -1.4L30.8 -1.3L31.5 -1.2L32.2 -1.5L32.9 -1.1L33.6 -1.3L34.3 -3.1L35.0 -3.3L35.7 -3.2L36.4 -1.5L37.1 -1.5L37.8 -0.8L38.5 -1.2L39.2 -1.1L39.9 -1.1L40.6 -0.9L41.3 -0.9L42.0 -0.7L42.7 -0.9L43.4 -1.6L44.1 -0.8L44.8 -1.4L45.5 -1.2L46.2 -1.3L46.9 -0.8L47.6 -1.2L48.3 -0.8L49.0 -1.6L49.7 -1.0L50.4 -1.6L51.1 -1.2L51.8 -0.8L52.5 -1.0L53.2 -0.9L53.9 -1.2L54.6 -0.2L55.3 -0.2L56.0 -10.0L56.7 -10.9L57.4 -0.2L58.1 -0.2L58.8 -0.9L59.5 -1.1L60.2 -1.2L60.9 -0.7L61.6 -0.8L62.3 -1.4L63.0 -1.5L63.7 -1.2L64.4 -1.1L65.1 -1.4L65.8 -1.4L66.5 -0.9L67.2 -1.3L67.9 -0.9L68.6 -1.2L69.3 -6.1L70.0 -8.4L70.7 -7.3L71.4 -8.0L72.1 -5.7L72.8 -0.9L73.5 -1.2L74.2 -0.9L74.9 -0.8L75.6 -0.7L76.3 -1.0L76.3 1.0L75.6 0.8L74.9 0.8L74.2 0.9L73.5 1.3L72.8 1.0L72.1 5.3L71.4 8.5L70.7 6.8L70.0 7.8L69.3 5.4L68.6 1.2L67.9 0.7L67.2 1.1L66.5 0.8L65.8 1.1L65.1 1.5L64.4 0.9L63.7 1.0L63.0 1.6L62.3 1.4L61.6 0.6L60.9 0.6L60.2 1.1L59.5 0.9L58.8 0.7L58.1 0.2L57.4 0.2L56.7 8.9L56.0 10.1L55.3 0.1L54.6 0.2L53.9 0.9L53.2 0.9L52.5 1.1L51.8 0.7L51.1 1.4L50.4 1.7L49.7 0.9L49.0 1.5L48.3 0.7L47.6 1.0L46.9 0.7L46.2 1.2L45.5 1.0L44.8 1.2L44.1 0.6L43.4 1.3L42.7 0.7L42.0 0.6L41.3 1.0L40.6 0.9L39.9 0.9L39.2 1.2L38.5 1.0L37.8 0.7L37.1 1.2L36.4 1.6L35.7 2.9L35.0 3.2L34.3 3.0L33.6 1.3L32.9 1.1L32.2 1.6L31.5 1.2L30.8 1.3L30.1 1.2L29.4 1.3L28.7 1.3L28.0 1.3L27.3 1.0L26.6 1.5L25.9 1.3L25.2 1.6L24.5 1.5L23.8 5.7L23.1 6.6L22.4 7.7L21.7 7.0L21.0 7.8L20.3 7.3L19.6 5.4L18.9 2.2L18.2 2.9L17.5 1.8L16.8 2.8L16.1 2.0L15.4 1.7L14.7 2.8L14.0 4.4L13.3 3.3L12.6 2.8L11.9 2.7L11.2 2.5L10.5 2.1L9.8 2.1L9.1 2.3L8.4 1.4L7.7 1.7L7.0 3.1L6.3 2.1L5.6 2.6L4.9 4.4L4.2 4.0L3.5 2.6L2.8 3.1L2.1 1.4L1.4 1.5L0.7 0.2L0.0 0.3Z" fill="#1c1216"/><path transform="translate(0 109.52)" d="M0 0L0.0 -0.3L0.7 -0.2L1.4 -2.5L2.1 -1.5L2.8 -1.6L3.5 -2.1L4.2 -4.7L4.9 -4.3L5.6 -4.3L6.3 -2.1L7.0 -1.8L7.7 -2.1L8.4 -1.8L9.1 -1.9L9.8 -1.4L10.5 -1.9L11.2 -1.6L11.9 -2.2L12.6 -1.9L13.3 -1.7L14.0 -1.9L14.7 -1.2L15.4 -1.2L16.1 -1.7L16.8 -7.4L17.5 -8.5L18.2 -8.3L18.9 -0.3L19.6 -3.8L20.3 -2.0L21.0 -3.8L21.7 -3.8L22.4 -7.4L23.1 -9.0L23.8 -9.2L24.5 -7.2L25.2 -5.5L25.9 -1.3L26.6 -1.9L27.3 -1.7L28.0 -1.5L28.7 -1.8L29.4 -1.4L30.1 -1.0L30.8 -1.5L31.5 -1.6L32.2 -1.9L32.9 -1.3L33.6 -1.1L34.3 -1.2L35.0 -0.9L35.7 -1.0L36.4 -1.0L37.1 -7.9L37.8 -1.3L38.5 -1.2L39.2 -1.2L39.9 -1.2L40.6 -2.0L41.3 -0.9L42.0 -1.0L42.7 -7.0L43.4 -7.2L44.1 -1.3L44.8 -0.4L45.5 -0.3L46.2 -0.4L46.9 -0.2L47.6 -0.2L48.3 -0.3L49.0 -0.4L49.7 -0.1L50.4 -0.3L51.1 -0.4L51.8 -0.3L52.5 -0.2L53.2 -0.4L53.9 -0.2L54.6 -0.4L55.3 -0.3L56.0 -10.2L56.7 -9.9L57.4 -0.4L58.1 -0.4L58.8 -0.8L59.5 -0.7L60.2 -0.8L60.9 -0.9L61.6 -0.5L62.3 -0.5L63.0 -0.5L63.7 -0.7L64.4 -0.9L65.1 -0.9L65.8 -0.5L66.5 -0.8L67.2 -0.6L67.9 -0.6L68.6 -0.9L69.3 -0.6L70.0 -0.7L70.7 -0.5L71.4 -0.9L72.1 -1.0L72.8 -0.5L73.5 -0.7L74.2 -0.6L74.9 -0.6L75.6 -0.7L76.3 -0.9L76.3 0.9L75.6 0.8L74.9 0.6L74.2 0.6L73.5 0.6L72.8 0.4L72.1 1.0L71.4 0.8L70.7 0.5L70.0 0.6L69.3 0.5L68.6 0.8L67.9 0.5L67.2 0.5L66.5 0.7L65.8 0.4L65.1 0.9L64.4 0.9L63.7 0.6L63.0 0.5L62.3 0.5L61.6 0.5L60.9 0.9L60.2 0.7L59.5 0.6L58.8 0.7L58.1 0.3L57.4 0.4L56.7 8.6L56.0 8.4L55.3 0.2L54.6 0.4L53.9 0.2L53.2 0.3L52.5 0.1L51.8 0.3L51.1 0.3L50.4 0.3L49.7 0.2L49.0 0.5L48.3 0.3L47.6 0.2L46.9 0.2L46.2 0.3L45.5 0.3L44.8 0.4L44.1 1.4L43.4 7.0L42.7 6.2L42.0 0.8L41.3 0.9L40.6 1.8L39.9 1.1L39.2 1.2L38.5 1.2L37.8 1.3L37.1 6.3L36.4 1.1L35.7 1.0L35.0 1.0L34.3 1.2L33.6 1.1L32.9 1.1L32.2 1.7L31.5 1.8L30.8 1.3L30.1 1.1L29.4 1.2L28.7 1.7L28.0 1.6L27.3 1.6L26.6 1.8L25.9 1.1L25.2 5.0L24.5 6.1L23.8 8.9L23.1 9.8L22.4 6.5L21.7 4.2L21.0 4.1L20.3 1.7L19.6 4.0L18.9 0.3L18.2 7.1L17.5 7.2L16.8 7.3L16.1 1.9L15.4 1.1L14.7 1.2L14.0 1.8L13.3 1.4L12.6 1.9L11.9 2.0L11.2 1.3L10.5 1.8L9.8 1.1L9.1 2.0L8.4 1.4L7.7 2.3L7.0 2.0L6.3 2.3L5.6 4.2L4.9 4.7L4.2 3.8L3.5 2.0L2.8 1.5L2.1 1.2L1.4 2.5L0.7 0.2L0.0 0.3Z" fill="#1c1216"/><path transform="translate(0 133.95)" d="M0 0L0.0 -0.1L0.7 -0.2L1.4 -0.7L2.1 -0.3L2.8 -0.6L3.5 -0.5L4.2 -0.7L4.9 -0.7L5.6 -0.4L6.3 -0.3L7.0 -0.4L7.7 -0.6L8.4 -0.6L9.1 -0.4L9.8 -0.4L10.5 -0.4L11.2 -0.6L11.9 -0.7L12.6 -0.6L13.3 -0.4L14.0 -0.4L14.7 -0.5L15.4 -0.6L16.1 -0.5L16.8 -0.7L17.5 -0.5L18.2 -0.4L18.9 -0.4L19.6 -0.7L20.3 -0.4L21.0 -0.5L21.7 -0.4L22.4 -0.4L23.1 -0.5L23.8 -0.6L24.5 -0.6L25.2 -0.5L25.9 -0.4L26.6 -0.6L27.3 -0.7L28.0 -0.4L28.7 -0.4L29.4 -0.5L30.1 -0.4L30.8 -0.5L31.5 -0.5L32.2 -0.6L32.9 -0.6L33.6 -0.5L34.3 -0.7L35.0 -0.3L35.7 -0.4L36.4 -0.5L37.1 -0.5L37.8 -0.6L38.5 -0.5L39.2 -0.5L39.9 -0.7L40.6 -0.5L41.3 -0.7L42.0 -0.5L42.7 -0.5L43.4 -0.4L44.1 -0.6L44.8 -0.5L45.5 -0.4L46.2 -0.7L46.9 -0.4L47.6 -0.5L48.3 -0.6L49.0 -0.4L49.7 -0.5L50.4 -0.6L51.1 -0.4L51.8 -0.5L52.5 -0.7L53.2 -0.7L53.9 -0.6L54.6 -0.6L55.3 -0.4L56.0 -8.8L56.7 -9.0L57.4 -0.4L58.1 -0.6L58.8 -0.5L59.5 -0.6L60.2 -0.5L60.9 -0.4L61.6 -0.7L62.3 -0.4L63.0 -0.4L63.7 -0.4L64.4 -0.5L65.1 -0.4L65.8 -0.4L66.5 -0.7L67.2 -0.5L67.9 -0.5L68.6 -0.5L69.3 -0.6L70.0 -0.5L70.7 -0.4L71.4 -0.5L72.1 -0.6L72.8 -0.3L73.5 -0.4L74.2 -0.4L74.9 -0.6L75.6 -0.6L76.3 -0.4L76.3 0.3L75.6 0.6L74.9 0.5L74.2 0.3L73.5 0.4L72.8 0.4L72.1 0.7L71.4 0.4L70.7 0.4L70.0 0.5L69.3 0.6L68.6 0.5L67.9 0.5L67.2 0.4L66.5 0.6L65.8 0.3L65.1 0.3L64.4 0.5L63.7 0.4L63.0 0.4L62.3 0.3L61.6 0.6L60.9 0.3L60.2 0.5L59.5 0.6L58.8 0.4L58.1 0.5L57.4 0.3L56.7 7.6L56.0 7.5L55.3 0.4L54.6 0.5L53.9 0.5L53.2 0.7L52.5 0.7L51.8 0.4L51.1 0.4L50.4 0.6L49.7 0.5L49.0 0.4L48.3 0.5L47.6 0.4L46.9 0.3L46.2 0.5L45.5 0.4L44.8 0.5L44.1 0.6L43.4 0.4L42.7 0.4L42.0 0.4L41.3 0.7L40.6 0.6L39.9 0.6L39.2 0.5L38.5 0.5L37.8 0.5L37.1 0.5L36.4 0.4L35.7 0.3L35.0 0.3L34.3 0.6L33.6 0.4L32.9 0.6L32.2 0.6L31.5 0.5L30.8 0.5L30.1 0.4L29.4 0.4L28.7 0.4L28.0 0.5L27.3 0.6L26.6 0.6L25.9 0.4L25.2 0.4L24.5 0.6L23.8 0.7L23.1 0.4L22.4 0.4L21.7 0.3L21.0 0.6L20.3 0.4L19.6 0.7L18.9 0.4L18.2 0.4L17.5 0.5L16.8 0.6L16.1 0.5L15.4 0.6L14.7 0.4L14.0 0.4L13.3 0.4L12.6 0.6L11.9 0.7L11.2 0.5L10.5 0.4L9.8 0.3L9.1 0.3L8.4 0.5L7.7 0.7L7.0 0.4L6.3 0.3L5.6 0.4L4.9 0.6L4.2 0.6L3.5 0.4L2.8 0.5L2.1 0.3L1.4 0.8L0.7 0.2L0.0 0.1Z" fill="#1c1216"/></svg><span style="left:1.9px;top:2.60px;text-shadow:0 0 .7px rgba(255,255,255,.6),0 0 1.6px #30081c;font-size:9.2px;font-weight:normal;transform-origin:0 0;transform:scaleX(0.8342)">0604 MR1059==2101___1_____t2==_0604A015AEEE831.mxf 48 kHz/24 Bit</span><div class="a" style="left:0;top:23.33px;width:100%;height:1.1px;background:#c2146f"></div><span style="left:1.9px;top:27.03px;text-shadow:0 0 .7px rgba(255,255,255,.6),0 0 1.6px #30081c;font-size:9.2px;font-weight:normal;transform-origin:0 0;transform:scaleX(0.8342)">0604 MR1059==2101___1_____t2==_0604A025AEEE832.mxf 48 kHz/24 Bit</span><div class="a" style="left:0;top:47.76px;width:100%;height:1.1px;background:#c2146f"></div><span style="left:1.9px;top:51.46px;text-shadow:0 0 .7px rgba(255,255,255,.6),0 0 1.6px #30081c;font-size:9.2px;font-weight:normal;transform-origin:0 0;transform:scaleX(0.8342)">0604 MR1059==2101___1_____t2==_0604A035AEEE833.mxf 48 kHz/24 Bit</span><div class="a" style="left:0;top:72.19px;width:100%;height:1.1px;background:#c2146f"></div><span style="left:1.9px;top:75.89px;text-shadow:0 0 .7px rgba(255,255,255,.6),0 0 1.6px #30081c;font-size:9.2px;font-weight:normal;transform-origin:0 0;transform:scaleX(0.8342)">0604 MR1059==2101___1_____t2==_0604A045AEEE834.mxf 48 kHz/24 Bit</span><div class="a" style="left:0;top:96.62px;width:100%;height:1.1px;background:#c2146f"></div><span style="left:1.9px;top:100.32px;text-shadow:0 0 .7px rgba(255,255,255,.6),0 0 1.6px #30081c;font-size:9.2px;font-weight:normal;transform-origin:0 0;transform:scaleX(0.8342)">0604 MR1059==2101___1_____t2==_0604A055AEEE835.mxf 48 kHz/24 Bit</span><div class="a" style="left:0;top:121.05px;width:100%;height:1.1px;background:#c2146f"></div><span style="left:1.9px;top:124.75px;text-shadow:0 0 .7px rgba(255,255,255,.6),0 0 1.6px #30081c;font-size:9.2px;font-weight:normal;transform-origin:0 0;transform:scaleX(0.8342)">0604 MR1059==2101___1_____t2==_0604A065AEEE836.mxf 48 kHz/24 Bit</span></div>
<div class="a" style="left:168.6px;top:253.61px;width:825.90px;height:23.63px;background:#b2b2b2;box-sizing:border-box;border:1px solid #c6c6c6"></div>
<div class="clip p" style="left:249.00px;top:302.77px;width:369.50px;height:97.02px"><div class="a" style="left:0;top:13.20px;width:100%;height:1px;background:#342a9c"></div><span style="left:2.2px;top:2.70px;text-shadow:0 0 .7px rgba(255,255,255,.55);font-size:9.2px;font-weight:normal;transform-origin:0 0;transform:scaleX(0.8291)">D006C002_180604_J70F D006C002_180604_J70F_D006C002_A015AEE3766.mxf 48 kHz/24 Bit</span><div class="a" style="left:0;top:23.53px;width:100%;height:1.2px;background:#271f78"></div><div class="a" style="left:0;top:37.63px;width:100%;height:1px;background:#342a9c"></div><span style="left:2.2px;top:27.13px;text-shadow:0 0 .7px rgba(255,255,255,.55);font-size:9.2px;font-weight:normal;transform-origin:0 0;transform:scaleX(0.8291)">D006C002_180604_J70F D006C002_180604_J70F_D006C002_A025AEE3767.mxf 48 kHz/24 Bit</span><div class="a" style="left:0;top:47.96px;width:100%;height:1.2px;background:#271f78"></div><div class="a" style="left:0;top:62.06px;width:100%;height:1px;background:#342a9c"></div><span style="left:2.2px;top:51.56px;text-shadow:0 0 .7px rgba(255,255,255,.55);font-size:9.2px;font-weight:normal;transform-origin:0 0;transform:scaleX(0.8291)">D006C002_180604_J70F D006C002_180604_J70F_D006C002_A035AEE3768.mxf 48 kHz/24 Bit</span><div class="a" style="left:0;top:72.39px;width:100%;height:1.2px;background:#271f78"></div><div class="a" style="left:0;top:86.49px;width:100%;height:1px;background:#342a9c"></div><span style="left:2.2px;top:75.99px;text-shadow:0 0 .7px rgba(255,255,255,.55);font-size:9.2px;font-weight:normal;transform-origin:0 0;transform:scaleX(0.8291)">D006C002_180604_J70F D006C002_180604_J70F_D006C002_A045AEE3769.mxf 48 kHz/24 Bit</span></div>
<div class="clip p" style="left:942.30px;top:302.77px;width:52.20px;height:97.02px"><div class="a" style="left:0;top:13.20px;width:100%;height:1px;background:#342a9c"></div><span style="left:2.2px;top:2.70px;text-shadow:0 0 .7px rgba(255,255,255,.55);font-size:9.2px;font-weight:normal;transform-origin:0 0;transform:scaleX(0.8291)">D006C003_180604_J70F D006C003_180604_J70F_D006C003_A015AEE3766.mxf 48 kHz/24 Bit</span><div class="a" style="left:0;top:23.53px;width:100%;height:1.2px;background:#271f78"></div><div class="a" style="left:0;top:37.63px;width:100%;height:1px;background:#342a9c"></div><span style="left:2.2px;top:27.13px;text-shadow:0 0 .7px rgba(255,255,255,.55);font-size:9.2px;font-weight:normal;transform-origin:0 0;transform:scaleX(0.8291)">D006C003_180604_J70F D006C003_180604_J70F_D006C003_A025AEE3767.mxf 48 kHz/24 Bit</span><div class="a" style="left:0;top:47.96px;width:100%;height:1.2px;background:#271f78"></div><div class="a" style="left:0;top:62.06px;width:100%;height:1px;background:#342a9c"></div><span style="left:2.2px;top:51.56px;text-shadow:0 0 .7px rgba(255,255,255,.55);font-size:9.2px;font-weight:normal;transform-origin:0 0;transform:scaleX(0.8291)">D006C003_180604_J70F D006C003_180604_J70F_D006C003_A035AEE3768.mxf 48 kHz/24 Bit</span><div class="a" style="left:0;top:72.39px;width:100%;height:1.2px;background:#271f78"></div><div class="a" style="left:0;top:86.49px;width:100%;height:1px;background:#342a9c"></div><span style="left:2.2px;top:75.99px;text-shadow:0 0 .7px rgba(255,255,255,.55);font-size:9.2px;font-weight:normal;transform-origin:0 0;transform:scaleX(0.8291)">D006C003_180604_J70F D006C003_180604_J70F_D006C003_A045AEE3769.mxf 48 kHz/24 Bit</span></div>
<div class="clip g" style="left:215.20px;top:399.79px;width:383.70px;height:97.81px"><div class="a" style="left:0;top:12.00px;width:100%;height:1px;background:#3f9446"></div><span style="left:2.0px;top:3.50px;text-shadow:0 0 .7px rgba(255,255,255,.55);font-size:9.2px;font-weight:normal;transform-origin:0 0;transform:scaleX(0.8204)">E006C002_180604_J70B E006C002_180604_J70B_E006C002_A015AEEFACA.mxf 48 kHz/24 Bit</span><div class="a" style="left:0;top:23.53px;width:100%;height:1.2px;background:#28502d"></div><div class="a" style="left:0;top:24.73px;width:100%;height:1px;background:#84f084"></div><div class="a" style="left:0;top:36.43px;width:100%;height:1px;background:#3f9446"></div><span style="left:2.0px;top:27.93px;text-shadow:0 0 .7px rgba(255,255,255,.55);font-size:9.2px;font-weight:normal;transform-origin:0 0;transform:scaleX(0.8204)">E006C002_180604_J70B E006C002_180604_J70B_E006C002_A025AEEFACB.mxf 48 kHz/24 Bit</span><div class="a" style="left:0;top:47.96px;width:100%;height:1.2px;background:#28502d"></div><div class="a" style="left:0;top:49.16px;width:100%;height:1px;background:#84f084"></div><div class="a" style="left:0;top:60.86px;width:100%;height:1px;background:#3f9446"></div><span style="left:2.0px;top:52.36px;text-shadow:0 0 .7px rgba(255,255,255,.55);font-size:9.2px;font-weight:normal;transform-origin:0 0;transform:scaleX(0.8194)">E006C002_180604_J70B E006C002_180604_J70B_E006C002_A035AEEFACC.mxf 48 kHz/24 Bit</span><div class="a" style="left:0;top:72.39px;width:100%;height:1.2px;background:#28502d"></div><div class="a" style="left:0;top:73.59px;width:100%;height:1px;background:#84f084"></div><div class="a" style="left:0;top:85.29px;width:100%;height:1px;background:#3f9446"></div><span style="left:2.0px;top:76.79px;text-shadow:0 0 .7px rgba(255,255,255,.55);font-size:9.2px;font-weight:normal;transform-origin:0 0;transform:scaleX(0.8194)">E006C002_180604_J70B E006C002_180604_J70B_E006C002_A045AEEFACD.mxf 48 kHz/24 Bit</span></div>
<div class="clip g" style="left:917.80px;top:399.79px;width:76.70px;height:97.81px"><div class="a" style="left:0;top:12.00px;width:100%;height:1px;background:#3f9446"></div><span style="left:2.0px;top:3.50px;text-shadow:0 0 .7px rgba(255,255,255,.55);font-size:9.2px;font-weight:normal;transform-origin:0 0;transform:scaleX(0.8204)">E006C003_180604_J70B E006C003_180604_J70B_E006C003_A015AEEFACA.mxf 48 kHz/24 Bit</span><div class="a" style="left:0;top:23.53px;width:100%;height:1.2px;background:#28502d"></div><div class="a" style="left:0;top:24.73px;width:100%;height:1px;background:#84f084"></div><div class="a" style="left:0;top:36.43px;width:100%;height:1px;background:#3f9446"></div><span style="left:2.0px;top:27.93px;text-shadow:0 0 .7px rgba(255,255,255,.55);font-size:9.2px;font-weight:normal;transform-origin:0 0;transform:scaleX(0.8204)">E006C003_180604_J70B E006C003_180604_J70B_E006C003_A025AEEFACB.mxf 48 kHz/24 Bit</span><div class="a" style="left:0;top:47.96px;width:100%;height:1.2px;background:#28502d"></div><div class="a" style="left:0;top:49.16px;width:100%;height:1px;background:#84f084"></div><div class="a" style="left:0;top:60.86px;width:100%;height:1px;background:#3f9446"></div><span style="left:2.0px;top:52.36px;text-shadow:0 0 .7px rgba(255,255,255,.55);font-size:9.2px;font-weight:normal;transform-origin:0 0;transform:scaleX(0.8194)">E006C003_180604_J70B E006C003_180604_J70B_E006C003_A035AEEFACC.mxf 48 kHz/24 Bit</span><div class="a" style="left:0;top:72.39px;width:100%;height:1.2px;background:#28502d"></div><div class="a" style="left:0;top:73.59px;width:100%;height:1px;background:#84f084"></div><div class="a" style="left:0;top:85.29px;width:100%;height:1px;background:#3f9446"></div><span style="left:2.0px;top:76.79px;text-shadow:0 0 .7px rgba(255,255,255,.55);font-size:9.2px;font-weight:normal;transform-origin:0 0;transform:scaleX(0.8194)">E006C003_180604_J70B E006C003_180604_J70B_E006C003_A045AEEFACD.mxf 48 kHz/24 Bit</span></div>
<div class="menu"><svg class="a" style="left:4px;top:6.3px" width="8" height="8" viewBox="0 0 8 8"><path d="M1.4 4.4 L2.8 6.2 L6.2 1.6" stroke="#cfcfcf" stroke-width="0.95" fill="none"/></svg><div style="top:5.4px;font-size:7.6px;font-weight:normal;transform-origin:0 0;transform:scaleX(0.9312)">D006C002_180604_J70F</div><div style="top:20.9px;font-size:7.6px;font-weight:normal;transform-origin:0 0;transform:scaleX(0.9312)">E006C002_180604_J70B</div><div class="a" style="left:0;top:35.6px;width:108px;height:0.8px;background:#4a4a4a"></div><div style="top:42.2px;font-size:7.6px;font-weight:normal;transform-origin:0 0;transform:scaleX(0.9620)">Find Bin</div><div style="top:56.9px;font-size:7.6px;font-weight:normal;transform-origin:0 0;transform:scaleX(1.0093)">Unmute Clips</div></div>
<div class="a" style="left:0;top:0;width:1.3px;height:500px;background:#fff"></div>
<div class="a" style="left:994.5px;top:0;width:5.5px;height:500px;background:#fff"></div>
<div class="a" style="left:1.3px;top:498px;width:993.2px;height:2px;background:#2a2a2a"></div>
</body></html>
